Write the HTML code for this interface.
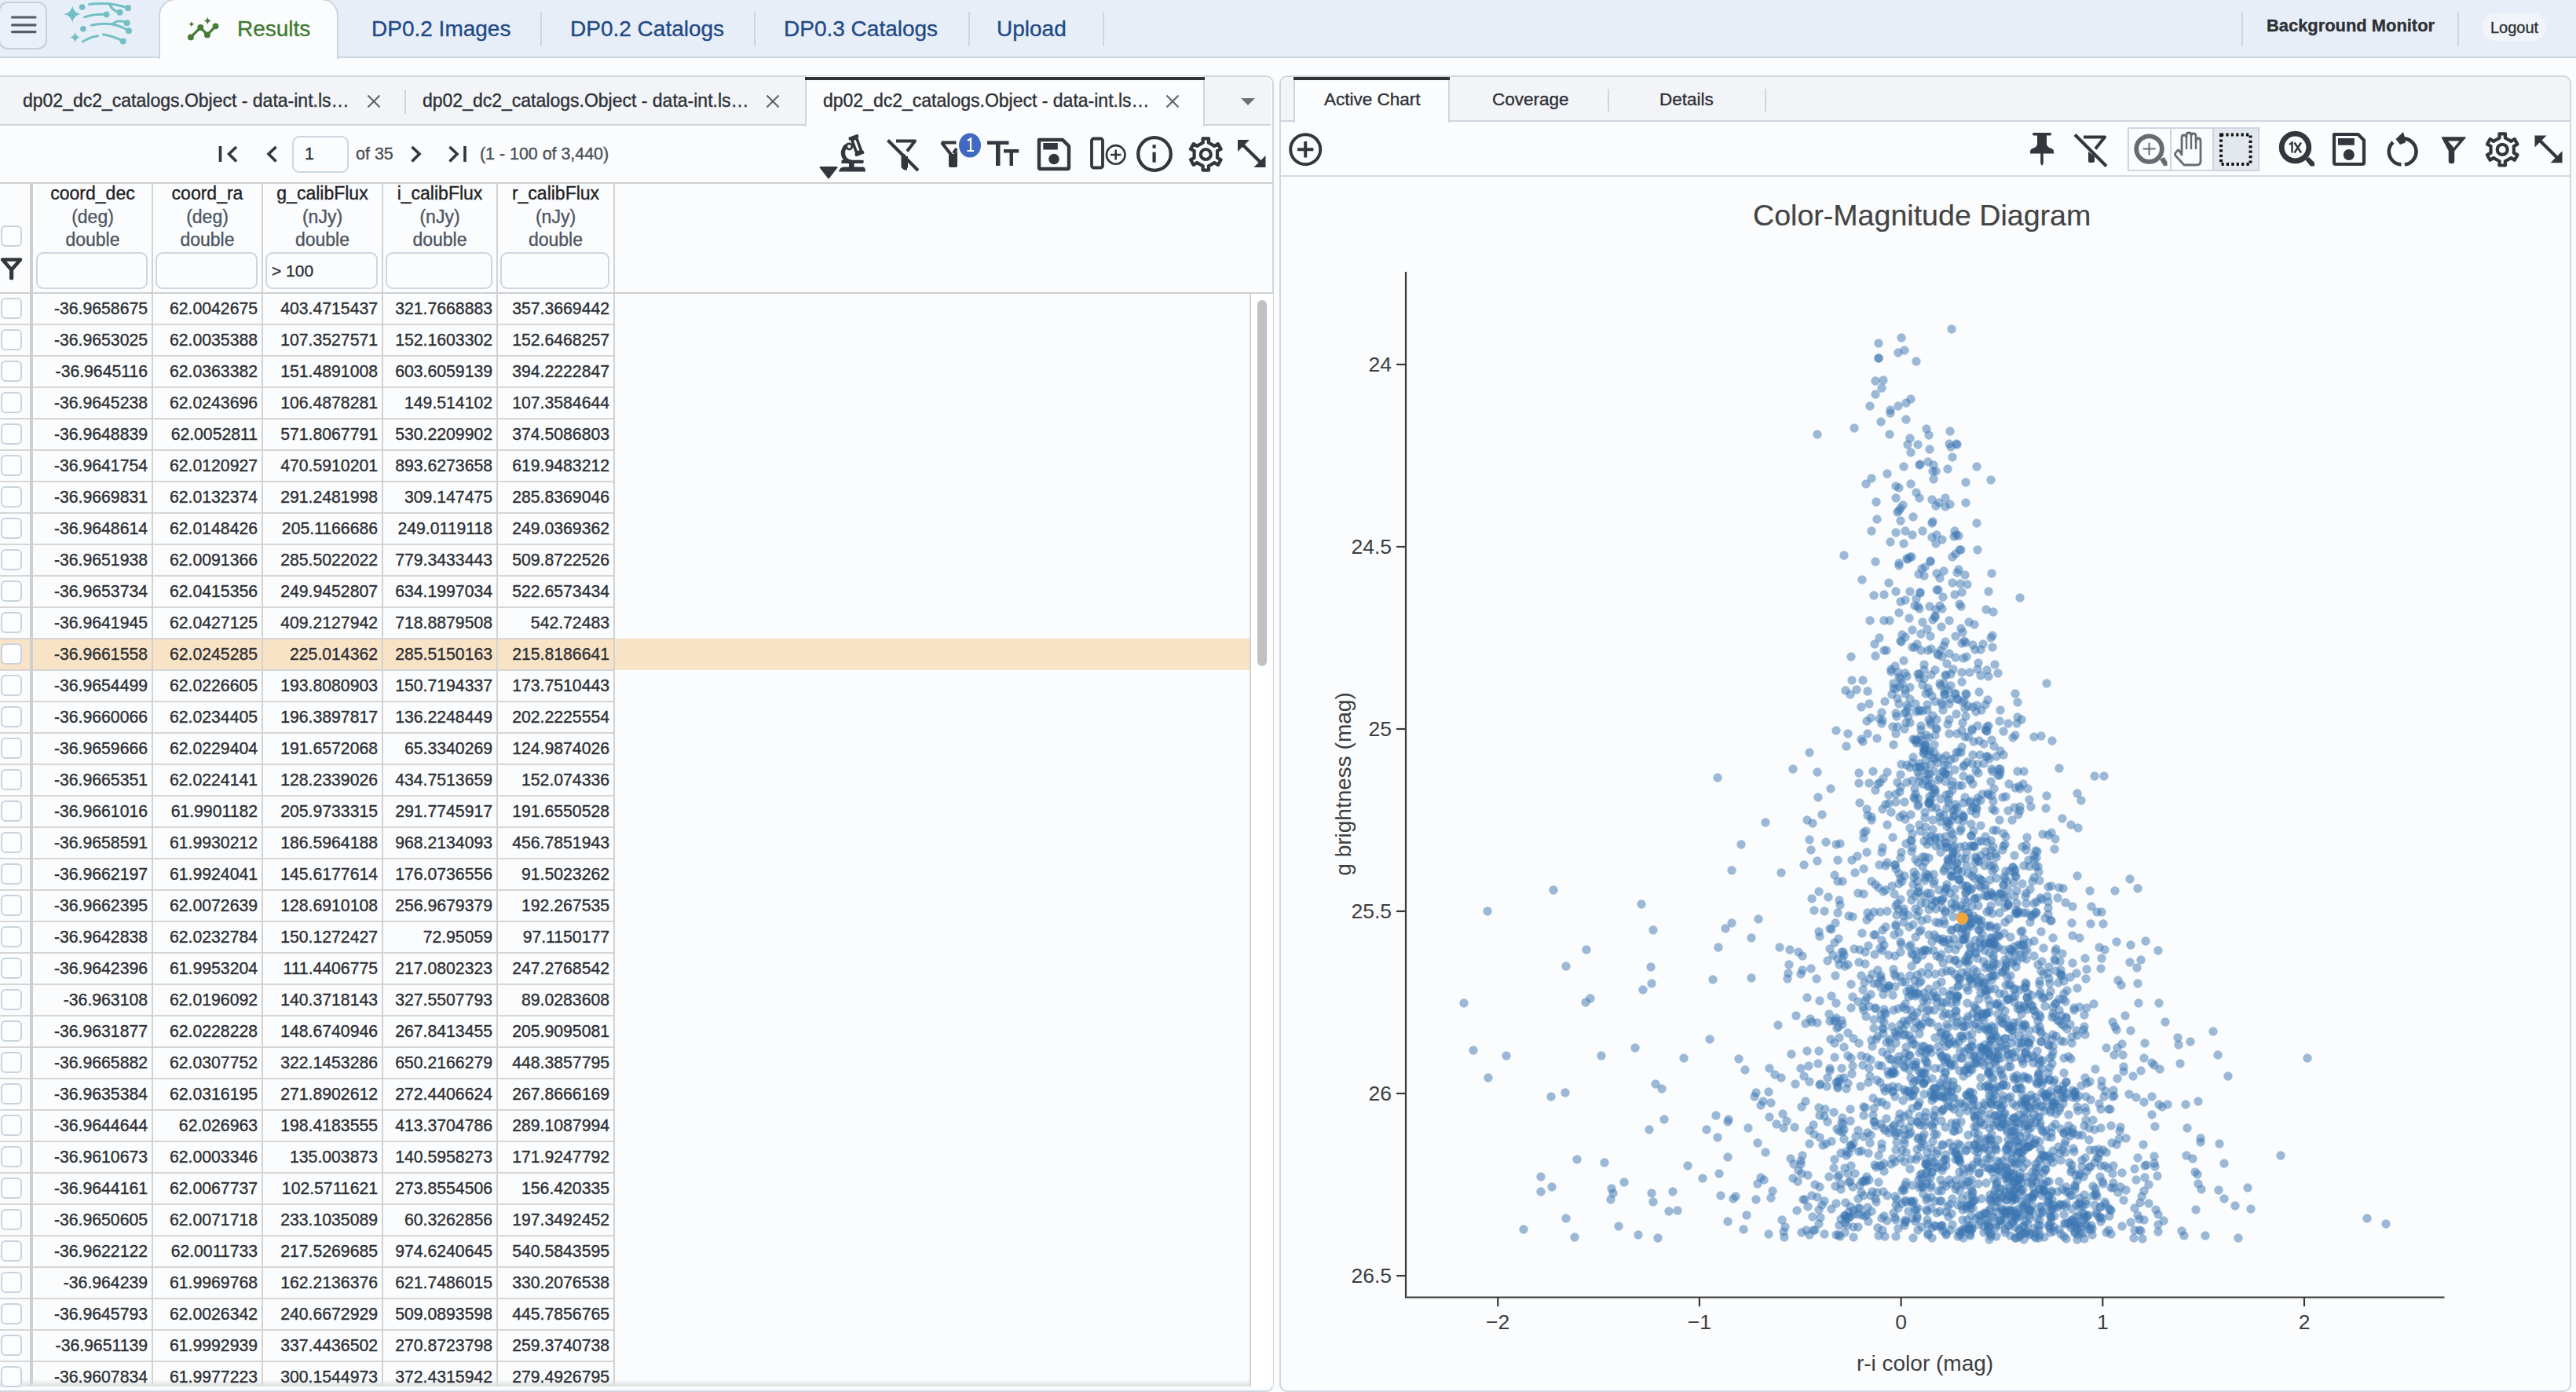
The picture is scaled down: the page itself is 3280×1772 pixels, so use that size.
<!DOCTYPE html><html><head><meta charset="utf-8"><style>
*{box-sizing:border-box;margin:0;padding:0}
html,body{width:3280px;height:1772px;overflow:hidden;background:#fbfcfd;font-family:"Liberation Sans",sans-serif;color:#2d3036}
div{-webkit-text-stroke:0.35px currentColor}
.a{position:absolute}
svg{position:absolute;overflow:visible}
#hdr{left:0;top:0;width:3280px;height:74px;background:#e8eef7;border-bottom:2px solid #cdd5df}
.nav{position:absolute;top:15px;font-size:28px;line-height:44px;color:#1f4a86;white-space:nowrap}
.vsep{position:absolute;width:2px;background:#cdd5df}
.ttab{position:absolute;top:97px;height:63px;font-size:23px;line-height:63px;color:#2d3036;white-space:nowrap}
.cell{position:absolute;height:40px;font-size:21.2px;line-height:40px;text-align:right;white-space:nowrap;color:#2b2e33}
.hl{position:absolute;font-size:23px;line-height:29px;text-align:center;white-space:nowrap}
.cb{position:absolute;width:27px;height:27px;border:2px solid #c9d2de;border-radius:6px;background:#fcfdfe}
.fin{position:absolute;top:321px;height:47px;border:2px solid #cdd6e1;border-radius:9px;background:#fbfcfd}
.tick{font-size:26.5px;fill:#3d3d3d;font-family:"Liberation Sans",sans-serif}
.ttl{font-size:28px;fill:#3d3d3d;font-family:"Liberation Sans",sans-serif}
#pts circle{r:5.7px}
</style></head><body>
<div id="hdr" class="a"></div>
<div class="a" style="left:-2px;top:2px;width:62px;height:61px;border:2px solid #c8cfd9;border-radius:12px;background:#eaf0f8"></div>
<svg style="left:0;top:0" width="80" height="73"><g stroke="#575c66" stroke-width="3.2" stroke-linecap="round"><line x1="15.5" y1="22" x2="45" y2="22"/><line x1="15.5" y1="31.8" x2="45" y2="31.8"/><line x1="15.5" y1="40.6" x2="45" y2="40.6"/></g></svg>
<svg style="left:70px;top:0" width="130" height="70"><g fill="#72c0c5" stroke="none">
<path d="M22.2 7.3 Q23.6 16.5 32.9 17.9 Q23.6 19.3 22.2 29 Q20.8 19.3 11.1 17.9 Q20.8 16.5 22.2 7.3Z"/>
<path d="M25.6 41 Q26.6 46.5 32 47.4 Q26.6 48.3 25.6 54.5 Q24.6 48.3 19 47.4 Q24.6 46.5 25.6 41Z"/>
<circle cx="34.6" cy="9" r="3.8"/><circle cx="35.9" cy="36.7" r="3.8"/>
<circle cx="93" cy="10.2" r="4"/><circle cx="82.6" cy="15.8" r="4"/><circle cx="65.6" cy="18.4" r="3.8"/>
<circle cx="91.6" cy="29.3" r="4"/><circle cx="94" cy="39.3" r="4"/><circle cx="86.7" cy="52.5" r="4"/></g>
<g fill="none" stroke="#72c0c5" stroke-width="3" stroke-linecap="round">
<path d="M43.5 5.6 Q70 2 93 10.2"/><path d="M70 6 Q72 13 82.6 15.8"/>
<path d="M37.4 21.8 Q50 17.5 65.6 18.4"/>
<path d="M46.5 32 Q75 26 94 39.3"/><path d="M74.5 29.5 Q82 24 91.6 29.3"/>
<path d="M35.5 53 Q45 47 54.5 45.8"/><path d="M61.6 44 Q75 46 86.7 52.5"/></g></svg>
<div class="a" style="left:202px;top:-2px;width:229px;height:77px;background:#fbfcfd;border:2px solid #cdd5df;border-bottom:none;border-radius:22px 22px 0 0"></div>
<svg style="left:230px;top:15px" width="60" height="45"><g transform="translate(-230,-15)">
<polyline points="242.9,47.4 255.3,35 263.9,44.4 274.5,33.3" fill="none" stroke="#467b32" stroke-width="3.2" stroke-linejoin="round"/>
<g fill="#467b32"><circle cx="242.9" cy="47.4" r="3.9"/><circle cx="255.3" cy="35" r="3.9"/><circle cx="263.9" cy="44.4" r="3.9"/><circle cx="274.5" cy="33.3" r="3.9"/>
<path d="M264.3 21.5 Q265 25.8 269.2 26.5 Q265 27.2 264.3 31.5 Q263.6 27.2 259.4 26.5 Q263.6 25.8 264.3 21.5Z"/>
<path d="M243.8 27 Q244.3 30.2 247.4 30.7 Q244.3 31.2 243.8 34.5 Q243.3 31.2 240.2 30.7 Q243.3 30.2 243.8 27Z"/></g></g></svg>
<div class="nav" style="left:302px;color:#3f7a30">Results</div>
<div class="nav" style="left:473px">DP0.2 Images</div>
<div class="nav" style="left:726px">DP0.2 Catalogs</div>
<div class="nav" style="left:998px">DP0.3 Catalogs</div>
<div class="nav" style="left:1269px">Upload</div>
<div class="vsep" style="left:688px;top:15px;height:44px"></div>
<div class="vsep" style="left:960px;top:15px;height:44px"></div>
<div class="vsep" style="left:1233px;top:15px;height:44px"></div>
<div class="vsep" style="left:1404px;top:15px;height:44px"></div>
<div class="vsep" style="left:2854px;top:15px;height:44px"></div>
<div class="vsep" style="left:3129px;top:15px;height:44px"></div>
<div class="a" style="left:2886px;top:15px;font-size:21.9px;line-height:36px;font-weight:bold;color:#2d3036;white-space:nowrap">Background Monitor</div>
<div class="a" style="left:3160px;top:17px;width:82px;height:35px;border-radius:18px;background:#f1f4f9"></div>
<div class="a" style="left:3171px;top:17px;font-size:20px;line-height:37px;color:#2d3036;white-space:nowrap">Logout</div>
<div class="a" style="left:-12px;top:96px;width:1634px;height:1676px;border:2px solid #cfd6e0;border-radius:10px;background:#fbfcfd"></div>
<div class="a" style="left:0;top:98px;width:1618px;height:62px;background:#f2f4f8;border-bottom:2px solid #cfd6e0;border-radius:0 9px 0 0"></div>
<div class="a" style="left:1025px;top:97px;width:509px;height:64px;background:#fbfcfd;border-left:2px solid #cfd6e0;border-right:2px solid #cfd6e0"></div>
<div class="a" style="left:1025px;top:98px;width:509px;height:4px;background:#2f3237"></div>
<div class="ttab" style="left:29px">dp02_dc2_catalogs.Object - data-int.ls…</div>
<svg style="left:468px;top:121px" width="16" height="16"><g stroke="#60646b" stroke-width="2.1"><line x1="0.5" y1="0.5" x2="15.5" y2="15.5"/><line x1="15.5" y1="0.5" x2="0.5" y2="15.5"/></g></svg>
<div class="ttab" style="left:538px">dp02_dc2_catalogs.Object - data-int.ls…</div>
<svg style="left:976px;top:121px" width="16" height="16"><g stroke="#60646b" stroke-width="2.1"><line x1="0.5" y1="0.5" x2="15.5" y2="15.5"/><line x1="15.5" y1="0.5" x2="0.5" y2="15.5"/></g></svg>
<div class="ttab" style="left:1048px">dp02_dc2_catalogs.Object - data-int.ls…</div>
<svg style="left:1485px;top:121px" width="16" height="16"><g stroke="#60646b" stroke-width="2.1"><line x1="0.5" y1="0.5" x2="15.5" y2="15.5"/><line x1="15.5" y1="0.5" x2="0.5" y2="15.5"/></g></svg>
<div class="vsep" style="left:515px;top:114px;height:31px"></div>
<svg style="left:1580px;top:125px" width="20" height="10"><path d="M0 0H18L9 9Z" fill="#6b6f77"/></svg>
<svg style="left:270px;top:180px" width="340" height="34"><g transform="translate(-270,-180)" fill="none" stroke="#33363c" stroke-width="3.6" stroke-linecap="butt">
<line x1="280.5" y1="186" x2="280.5" y2="206"/><polyline points="301,187 291.5,196 301,205.5"/>
<polyline points="351.5,187 342,196 351.5,205.5"/>
<polyline points="524.5,187 534,196 524.5,205.5"/>
<polyline points="572.5,187 582,196 572.5,205.5"/><line x1="592" y1="186" x2="592" y2="206"/></g></svg>
<div class="a" style="left:372px;top:173px;width:72px;height:47px;border:2px solid #cdd6e1;border-radius:9px;background:#fbfcfd"></div>
<div class="a" style="left:388px;top:173px;font-size:21.5px;line-height:47px;color:#2d3036">1</div>
<div class="a" style="left:453px;top:173px;font-size:21.5px;line-height:47px;color:#4a4e55;white-space:nowrap">of 35</div>
<div class="a" style="left:611px;top:173px;font-size:21.4px;line-height:47px;color:#4a4e55;white-space:nowrap">(1 - 100 of 3,440)</div>
<svg style="left:1030px;top:165px" width="600" height="65"><g transform="translate(-1030,-165)" fill="#33363c">
<path d="M1044.5 213 H1065.5 L1055 226.5Z" stroke="#33363c" stroke-width="2" stroke-linejoin="round"/>
<path d="M1068 218.5 Q1069 212.5 1075 212.5 H1099 Q1102 213 1102 218.5 Z"/>
<rect x="1081" y="206.5" width="6.6" height="7"/>
<path d="M1071.5 203.8 H1098 Q1101 204 1099 208 H1071.5 Z"/>
<path d="M1080 184.5 A11.3 11.3 0 0 0 1083.5 206" fill="none" stroke="#33363c" stroke-width="5.4"/>
<g transform="rotate(-20 1091 186)"><rect x="1086" y="174" width="10" height="24" rx="1.5"/><rect x="1084.5" y="172" width="13" height="4" rx="1"/><rect x="1085" y="194" width="12" height="4" rx="1"/></g>
<circle cx="1081.3" cy="186.5" r="5"/>
</g>
<g transform="translate(-1030,-165)">
<circle cx="1081.3" cy="186.5" r="2.2" fill="#fbfcfd"/>
<g transform="rotate(-20 1091 186)"><rect x="1089.6" y="178" width="2.8" height="14" fill="#fbfcfd"/></g>
<path d="M1141 179.5 H1165 L1155 192.5 M1151 196.5 V212.5 Q1151 214.5 1153 214.5 H1155" stroke="#33363c" stroke-width="4" fill="none" stroke-linejoin="round"/>
<path d="M1147.5 199 L1156 199 L1156 212 Q1156 214.5 1153.5 214.5 L1149.5 214.5 Q1147.5 214.5 1147.5 212Z" fill="#33363c"/>
<line x1="1130.5" y1="178.5" x2="1169" y2="217" stroke="#33363c" stroke-width="4"/>
<path d="M1198.5 181.5 H1217.5 M1199 181.5 L1211.5 197.5 M1214 195 L1218 189" stroke="#33363c" stroke-width="4" fill="none"/>
<path d="M1208 196 L1215 196 L1219 192 L1219 211 Q1219 213 1217 213 L1210 213 Q1208 213 1208 211Z" fill="#33363c"/>
<ellipse cx="1235" cy="185" rx="14" ry="15.5" fill="#4169c4"/>
<path d="M1232 179 L1236 176.5 V192 M1231.5 192 H1240" stroke="#fff" stroke-width="2.2" fill="none"/>
<path d="M1257 179.5 H1284.5 V184 H1273.5 V211 H1268 V184 H1257Z" fill="#33363c"/>
<path d="M1278 190 H1297.3 V194.5 H1290 V211 H1285.5 V194.5 H1278Z" fill="#33363c"/>
<path d="M1323 178 H1353 L1361 186 V213 Q1361 215 1359 215 H1325 Q1323 215 1323 213Z" fill="none" stroke="#33363c" stroke-width="4.4" stroke-linejoin="round"/>
<rect x="1328.3" y="182" width="18.5" height="8.5" fill="#33363c"/>
<circle cx="1342" cy="202.5" r="6.8" fill="#33363c"/>
<rect x="1390" y="176.5" width="14" height="37" rx="2.5" fill="none" stroke="#33363c" stroke-width="3.8"/>
<circle cx="1420.7" cy="196.9" r="11.8" fill="none" stroke="#33363c" stroke-width="2.6"/>
<path d="M1414 197 H1427.5 M1420.7 190.5 V203.5" stroke="#33363c" stroke-width="2.6"/>
<circle cx="1470" cy="196" r="20.8" fill="none" stroke="#33363c" stroke-width="4.3"/>
<rect x="1467.5" y="184.3" width="4.2" height="4.4" fill="#33363c"/><rect x="1467.5" y="193.7" width="4.2" height="13" fill="#33363c"/>
</g>
<g transform="translate(-1030,-165)">
<path id="gearp" d="" fill="none"/>
</g></svg>
<svg style="left:0;top:0" width="3280" height="240"><path d="M1531.2 181.9 L1531.7 181.7 L1531.5 176.4 L1539.1 176.4 L1538.9 181.7 L1539.4 181.9 L1545.9 185.6 L1546.3 186.0 L1550.9 183.1 L1554.6 189.7 L1549.9 192.2 L1550.0 192.8 L1550.0 200.2 L1549.9 200.8 L1554.6 203.3 L1550.9 209.9 L1546.3 207.0 L1545.9 207.4 L1539.4 211.1 L1538.9 211.3 L1539.1 216.6 L1531.5 216.6 L1531.7 211.3 L1531.2 211.1 L1524.7 207.4 L1524.3 207.0 L1519.7 209.9 L1516.0 203.3 L1520.7 200.8 L1520.6 200.2 L1520.6 192.8 L1520.7 192.2 L1516.0 189.7 L1519.7 183.1 L1524.3 186.0 L1524.7 185.6 Z" fill="none" stroke="#33363c" stroke-width="4.2" stroke-linejoin="round"/><circle cx="1535.3" cy="196.5" r="6.5" fill="none" stroke="#33363c" stroke-width="4.2"/><line x1="1582" y1="184" x2="1605.5" y2="207" stroke="#33363c" stroke-width="4.2"/><path d="M1576 178 H1591 L1576 193Z" fill="#33363c"/><path d="M1611.5 213 H1596.5 L1611.5 198Z" fill="#33363c"/></svg>
<div class="a" style="left:0;top:232px;width:1621px;height:2px;background:#cfcfcf"></div>
<div class="a" style="left:0;top:372px;width:1621px;height:2px;background:#cfcfcf"></div>
<div class="a" style="left:0;top:813px;width:1592px;height:40px;background:#f9e3c7"></div>
<div class="a" style="left:0;top:412px;width:782px;height:2px;background:#d6d6d6"></div>
<div class="a" style="left:0;top:452px;width:782px;height:2px;background:#d6d6d6"></div>
<div class="a" style="left:0;top:492px;width:782px;height:2px;background:#d6d6d6"></div>
<div class="a" style="left:0;top:532px;width:782px;height:2px;background:#d6d6d6"></div>
<div class="a" style="left:0;top:572px;width:782px;height:2px;background:#d6d6d6"></div>
<div class="a" style="left:0;top:612px;width:782px;height:2px;background:#d6d6d6"></div>
<div class="a" style="left:0;top:652px;width:782px;height:2px;background:#d6d6d6"></div>
<div class="a" style="left:0;top:692px;width:782px;height:2px;background:#d6d6d6"></div>
<div class="a" style="left:0;top:732px;width:782px;height:2px;background:#d6d6d6"></div>
<div class="a" style="left:0;top:772px;width:782px;height:2px;background:#d6d6d6"></div>
<div class="a" style="left:0;top:812px;width:782px;height:2px;background:#d6d6d6"></div>
<div class="a" style="left:0;top:852px;width:782px;height:2px;background:#d6d6d6"></div>
<div class="a" style="left:0;top:892px;width:782px;height:2px;background:#d6d6d6"></div>
<div class="a" style="left:0;top:932px;width:782px;height:2px;background:#d6d6d6"></div>
<div class="a" style="left:0;top:972px;width:782px;height:2px;background:#d6d6d6"></div>
<div class="a" style="left:0;top:1012px;width:782px;height:2px;background:#d6d6d6"></div>
<div class="a" style="left:0;top:1052px;width:782px;height:2px;background:#d6d6d6"></div>
<div class="a" style="left:0;top:1092px;width:782px;height:2px;background:#d6d6d6"></div>
<div class="a" style="left:0;top:1132px;width:782px;height:2px;background:#d6d6d6"></div>
<div class="a" style="left:0;top:1172px;width:782px;height:2px;background:#d6d6d6"></div>
<div class="a" style="left:0;top:1212px;width:782px;height:2px;background:#d6d6d6"></div>
<div class="a" style="left:0;top:1252px;width:782px;height:2px;background:#d6d6d6"></div>
<div class="a" style="left:0;top:1292px;width:782px;height:2px;background:#d6d6d6"></div>
<div class="a" style="left:0;top:1332px;width:782px;height:2px;background:#d6d6d6"></div>
<div class="a" style="left:0;top:1372px;width:782px;height:2px;background:#d6d6d6"></div>
<div class="a" style="left:0;top:1412px;width:782px;height:2px;background:#d6d6d6"></div>
<div class="a" style="left:0;top:1452px;width:782px;height:2px;background:#d6d6d6"></div>
<div class="a" style="left:0;top:1492px;width:782px;height:2px;background:#d6d6d6"></div>
<div class="a" style="left:0;top:1532px;width:782px;height:2px;background:#d6d6d6"></div>
<div class="a" style="left:0;top:1572px;width:782px;height:2px;background:#d6d6d6"></div>
<div class="a" style="left:0;top:1612px;width:782px;height:2px;background:#d6d6d6"></div>
<div class="a" style="left:0;top:1652px;width:782px;height:2px;background:#d6d6d6"></div>
<div class="a" style="left:0;top:1692px;width:782px;height:2px;background:#d6d6d6"></div>
<div class="a" style="left:0;top:1732px;width:782px;height:2px;background:#d6d6d6"></div>
<div class="a" style="left:0;top:1772px;width:782px;height:2px;background:#d6d6d6"></div>
<div class="a" style="left:38px;top:233px;width:4px;height:1532px;background:#cfcfcf"></div>
<div class="a" style="left:193px;top:233px;width:2px;height:1532px;background:#d2d2d2"></div>
<div class="a" style="left:333px;top:233px;width:2px;height:1532px;background:#d2d2d2"></div>
<div class="a" style="left:486px;top:233px;width:2px;height:1532px;background:#d2d2d2"></div>
<div class="a" style="left:632px;top:233px;width:2px;height:1532px;background:#d2d2d2"></div>
<div class="a" style="left:781px;top:233px;width:2px;height:1532px;background:#d2d2d2"></div>
<div class="a" style="left:1591px;top:372px;width:2px;height:1393px;background:#d2d2d2"></div>
<div class="a" style="left:1593px;top:374px;width:28px;height:1391px;background:#ffffff"></div>
<div class="a" style="left:1601px;top:382px;width:12px;height:466px;border-radius:6px;background:#c1c1c1"></div>
<div class="a" style="left:0;top:1756px;width:1592px;height:9px;background:linear-gradient(rgba(222,223,226,0),#dcdde0)"></div>
<div class="hl" style="left:42px;top:232px;width:152px;color:#1f2226">coord_dec</div>
<div class="hl" style="left:42px;top:262px;width:152px;color:#4d5560">(deg)</div>
<div class="hl" style="left:42px;top:291px;width:152px;color:#4d5560">double</div>
<div class="fin" style="left:46px;width:142px"></div>
<div class="hl" style="left:194px;top:232px;width:140px;color:#1f2226">coord_ra</div>
<div class="hl" style="left:194px;top:262px;width:140px;color:#4d5560">(deg)</div>
<div class="hl" style="left:194px;top:291px;width:140px;color:#4d5560">double</div>
<div class="fin" style="left:198px;width:130px"></div>
<div class="hl" style="left:334px;top:232px;width:153px;color:#1f2226">g_calibFlux</div>
<div class="hl" style="left:334px;top:262px;width:153px;color:#4d5560">(nJy)</div>
<div class="hl" style="left:334px;top:291px;width:153px;color:#4d5560">double</div>
<div class="fin" style="left:338px;width:143px"></div>
<div class="hl" style="left:487px;top:232px;width:146px;color:#1f2226">i_calibFlux</div>
<div class="hl" style="left:487px;top:262px;width:146px;color:#4d5560">(nJy)</div>
<div class="hl" style="left:487px;top:291px;width:146px;color:#4d5560">double</div>
<div class="fin" style="left:491px;width:136px"></div>
<div class="hl" style="left:633px;top:232px;width:149px;color:#1f2226">r_calibFlux</div>
<div class="hl" style="left:633px;top:262px;width:149px;color:#4d5560">(nJy)</div>
<div class="hl" style="left:633px;top:291px;width:149px;color:#4d5560">double</div>
<div class="fin" style="left:637px;width:139px"></div>
<div class="a" style="left:346px;top:321px;font-size:21px;line-height:47px;color:#2d3036">&gt; 100</div>
<div class="cb" style="left:1px;top:287px"></div>
<svg style="left:0;top:320px" width="40" height="45"><path d="M3.2 10.5 H26 L14.6 23.5Z" fill="none" stroke="#33363c" stroke-width="4.6" stroke-linejoin="round"/><path d="M12 21 H17.2 V34.5 Q17.2 36.3 15.4 36.3 H13.8 Q12 36.3 12 34.5Z" fill="#33363c"/></svg>
<div class="cb" style="left:1px;top:379px"></div>
<div class="cell" style="left:42px;top:373px;width:146px">-36.9658675</div>
<div class="cell" style="left:194px;top:373px;width:134px">62.0042675</div>
<div class="cell" style="left:334px;top:373px;width:147px">403.4715437</div>
<div class="cell" style="left:487px;top:373px;width:140px">321.7668883</div>
<div class="cell" style="left:633px;top:373px;width:143px">357.3669442</div>
<div class="cb" style="left:1px;top:419px"></div>
<div class="cell" style="left:42px;top:413px;width:146px">-36.9653025</div>
<div class="cell" style="left:194px;top:413px;width:134px">62.0035388</div>
<div class="cell" style="left:334px;top:413px;width:147px">107.3527571</div>
<div class="cell" style="left:487px;top:413px;width:140px">152.1603302</div>
<div class="cell" style="left:633px;top:413px;width:143px">152.6468257</div>
<div class="cb" style="left:1px;top:459px"></div>
<div class="cell" style="left:42px;top:453px;width:146px">-36.9645116</div>
<div class="cell" style="left:194px;top:453px;width:134px">62.0363382</div>
<div class="cell" style="left:334px;top:453px;width:147px">151.4891008</div>
<div class="cell" style="left:487px;top:453px;width:140px">603.6059139</div>
<div class="cell" style="left:633px;top:453px;width:143px">394.2222847</div>
<div class="cb" style="left:1px;top:499px"></div>
<div class="cell" style="left:42px;top:493px;width:146px">-36.9645238</div>
<div class="cell" style="left:194px;top:493px;width:134px">62.0243696</div>
<div class="cell" style="left:334px;top:493px;width:147px">106.4878281</div>
<div class="cell" style="left:487px;top:493px;width:140px">149.514102</div>
<div class="cell" style="left:633px;top:493px;width:143px">107.3584644</div>
<div class="cb" style="left:1px;top:539px"></div>
<div class="cell" style="left:42px;top:533px;width:146px">-36.9648839</div>
<div class="cell" style="left:194px;top:533px;width:134px">62.0052811</div>
<div class="cell" style="left:334px;top:533px;width:147px">571.8067791</div>
<div class="cell" style="left:487px;top:533px;width:140px">530.2209902</div>
<div class="cell" style="left:633px;top:533px;width:143px">374.5086803</div>
<div class="cb" style="left:1px;top:579px"></div>
<div class="cell" style="left:42px;top:573px;width:146px">-36.9641754</div>
<div class="cell" style="left:194px;top:573px;width:134px">62.0120927</div>
<div class="cell" style="left:334px;top:573px;width:147px">470.5910201</div>
<div class="cell" style="left:487px;top:573px;width:140px">893.6273658</div>
<div class="cell" style="left:633px;top:573px;width:143px">619.9483212</div>
<div class="cb" style="left:1px;top:619px"></div>
<div class="cell" style="left:42px;top:613px;width:146px">-36.9669831</div>
<div class="cell" style="left:194px;top:613px;width:134px">62.0132374</div>
<div class="cell" style="left:334px;top:613px;width:147px">291.2481998</div>
<div class="cell" style="left:487px;top:613px;width:140px">309.147475</div>
<div class="cell" style="left:633px;top:613px;width:143px">285.8369046</div>
<div class="cb" style="left:1px;top:659px"></div>
<div class="cell" style="left:42px;top:653px;width:146px">-36.9648614</div>
<div class="cell" style="left:194px;top:653px;width:134px">62.0148426</div>
<div class="cell" style="left:334px;top:653px;width:147px">205.1166686</div>
<div class="cell" style="left:487px;top:653px;width:140px">249.0119118</div>
<div class="cell" style="left:633px;top:653px;width:143px">249.0369362</div>
<div class="cb" style="left:1px;top:699px"></div>
<div class="cell" style="left:42px;top:693px;width:146px">-36.9651938</div>
<div class="cell" style="left:194px;top:693px;width:134px">62.0091366</div>
<div class="cell" style="left:334px;top:693px;width:147px">285.5022022</div>
<div class="cell" style="left:487px;top:693px;width:140px">779.3433443</div>
<div class="cell" style="left:633px;top:693px;width:143px">509.8722526</div>
<div class="cb" style="left:1px;top:739px"></div>
<div class="cell" style="left:42px;top:733px;width:146px">-36.9653734</div>
<div class="cell" style="left:194px;top:733px;width:134px">62.0415356</div>
<div class="cell" style="left:334px;top:733px;width:147px">249.9452807</div>
<div class="cell" style="left:487px;top:733px;width:140px">634.1997034</div>
<div class="cell" style="left:633px;top:733px;width:143px">522.6573434</div>
<div class="cb" style="left:1px;top:779px"></div>
<div class="cell" style="left:42px;top:773px;width:146px">-36.9641945</div>
<div class="cell" style="left:194px;top:773px;width:134px">62.0427125</div>
<div class="cell" style="left:334px;top:773px;width:147px">409.2127942</div>
<div class="cell" style="left:487px;top:773px;width:140px">718.8879508</div>
<div class="cell" style="left:633px;top:773px;width:143px">542.72483</div>
<div class="cb" style="left:1px;top:819px"></div>
<div class="cell" style="left:42px;top:813px;width:146px">-36.9661558</div>
<div class="cell" style="left:194px;top:813px;width:134px">62.0245285</div>
<div class="cell" style="left:334px;top:813px;width:147px">225.014362</div>
<div class="cell" style="left:487px;top:813px;width:140px">285.5150163</div>
<div class="cell" style="left:633px;top:813px;width:143px">215.8186641</div>
<div class="cb" style="left:1px;top:859px"></div>
<div class="cell" style="left:42px;top:853px;width:146px">-36.9654499</div>
<div class="cell" style="left:194px;top:853px;width:134px">62.0226605</div>
<div class="cell" style="left:334px;top:853px;width:147px">193.8080903</div>
<div class="cell" style="left:487px;top:853px;width:140px">150.7194337</div>
<div class="cell" style="left:633px;top:853px;width:143px">173.7510443</div>
<div class="cb" style="left:1px;top:899px"></div>
<div class="cell" style="left:42px;top:893px;width:146px">-36.9660066</div>
<div class="cell" style="left:194px;top:893px;width:134px">62.0234405</div>
<div class="cell" style="left:334px;top:893px;width:147px">196.3897817</div>
<div class="cell" style="left:487px;top:893px;width:140px">136.2248449</div>
<div class="cell" style="left:633px;top:893px;width:143px">202.2225554</div>
<div class="cb" style="left:1px;top:939px"></div>
<div class="cell" style="left:42px;top:933px;width:146px">-36.9659666</div>
<div class="cell" style="left:194px;top:933px;width:134px">62.0229404</div>
<div class="cell" style="left:334px;top:933px;width:147px">191.6572068</div>
<div class="cell" style="left:487px;top:933px;width:140px">65.3340269</div>
<div class="cell" style="left:633px;top:933px;width:143px">124.9874026</div>
<div class="cb" style="left:1px;top:979px"></div>
<div class="cell" style="left:42px;top:973px;width:146px">-36.9665351</div>
<div class="cell" style="left:194px;top:973px;width:134px">62.0224141</div>
<div class="cell" style="left:334px;top:973px;width:147px">128.2339026</div>
<div class="cell" style="left:487px;top:973px;width:140px">434.7513659</div>
<div class="cell" style="left:633px;top:973px;width:143px">152.074336</div>
<div class="cb" style="left:1px;top:1019px"></div>
<div class="cell" style="left:42px;top:1013px;width:146px">-36.9661016</div>
<div class="cell" style="left:194px;top:1013px;width:134px">61.9901182</div>
<div class="cell" style="left:334px;top:1013px;width:147px">205.9733315</div>
<div class="cell" style="left:487px;top:1013px;width:140px">291.7745917</div>
<div class="cell" style="left:633px;top:1013px;width:143px">191.6550528</div>
<div class="cb" style="left:1px;top:1059px"></div>
<div class="cell" style="left:42px;top:1053px;width:146px">-36.9658591</div>
<div class="cell" style="left:194px;top:1053px;width:134px">61.9930212</div>
<div class="cell" style="left:334px;top:1053px;width:147px">186.5964188</div>
<div class="cell" style="left:487px;top:1053px;width:140px">968.2134093</div>
<div class="cell" style="left:633px;top:1053px;width:143px">456.7851943</div>
<div class="cb" style="left:1px;top:1099px"></div>
<div class="cell" style="left:42px;top:1093px;width:146px">-36.9662197</div>
<div class="cell" style="left:194px;top:1093px;width:134px">61.9924041</div>
<div class="cell" style="left:334px;top:1093px;width:147px">145.6177614</div>
<div class="cell" style="left:487px;top:1093px;width:140px">176.0736556</div>
<div class="cell" style="left:633px;top:1093px;width:143px">91.5023262</div>
<div class="cb" style="left:1px;top:1139px"></div>
<div class="cell" style="left:42px;top:1133px;width:146px">-36.9662395</div>
<div class="cell" style="left:194px;top:1133px;width:134px">62.0072639</div>
<div class="cell" style="left:334px;top:1133px;width:147px">128.6910108</div>
<div class="cell" style="left:487px;top:1133px;width:140px">256.9679379</div>
<div class="cell" style="left:633px;top:1133px;width:143px">192.267535</div>
<div class="cb" style="left:1px;top:1179px"></div>
<div class="cell" style="left:42px;top:1173px;width:146px">-36.9642838</div>
<div class="cell" style="left:194px;top:1173px;width:134px">62.0232784</div>
<div class="cell" style="left:334px;top:1173px;width:147px">150.1272427</div>
<div class="cell" style="left:487px;top:1173px;width:140px">72.95059</div>
<div class="cell" style="left:633px;top:1173px;width:143px">97.1150177</div>
<div class="cb" style="left:1px;top:1219px"></div>
<div class="cell" style="left:42px;top:1213px;width:146px">-36.9642396</div>
<div class="cell" style="left:194px;top:1213px;width:134px">61.9953204</div>
<div class="cell" style="left:334px;top:1213px;width:147px">111.4406775</div>
<div class="cell" style="left:487px;top:1213px;width:140px">217.0802323</div>
<div class="cell" style="left:633px;top:1213px;width:143px">247.2768542</div>
<div class="cb" style="left:1px;top:1259px"></div>
<div class="cell" style="left:42px;top:1253px;width:146px">-36.963108</div>
<div class="cell" style="left:194px;top:1253px;width:134px">62.0196092</div>
<div class="cell" style="left:334px;top:1253px;width:147px">140.3718143</div>
<div class="cell" style="left:487px;top:1253px;width:140px">327.5507793</div>
<div class="cell" style="left:633px;top:1253px;width:143px">89.0283608</div>
<div class="cb" style="left:1px;top:1299px"></div>
<div class="cell" style="left:42px;top:1293px;width:146px">-36.9631877</div>
<div class="cell" style="left:194px;top:1293px;width:134px">62.0228228</div>
<div class="cell" style="left:334px;top:1293px;width:147px">148.6740946</div>
<div class="cell" style="left:487px;top:1293px;width:140px">267.8413455</div>
<div class="cell" style="left:633px;top:1293px;width:143px">205.9095081</div>
<div class="cb" style="left:1px;top:1339px"></div>
<div class="cell" style="left:42px;top:1333px;width:146px">-36.9665882</div>
<div class="cell" style="left:194px;top:1333px;width:134px">62.0307752</div>
<div class="cell" style="left:334px;top:1333px;width:147px">322.1453286</div>
<div class="cell" style="left:487px;top:1333px;width:140px">650.2166279</div>
<div class="cell" style="left:633px;top:1333px;width:143px">448.3857795</div>
<div class="cb" style="left:1px;top:1379px"></div>
<div class="cell" style="left:42px;top:1373px;width:146px">-36.9635384</div>
<div class="cell" style="left:194px;top:1373px;width:134px">62.0316195</div>
<div class="cell" style="left:334px;top:1373px;width:147px">271.8902612</div>
<div class="cell" style="left:487px;top:1373px;width:140px">272.4406624</div>
<div class="cell" style="left:633px;top:1373px;width:143px">267.8666169</div>
<div class="cb" style="left:1px;top:1419px"></div>
<div class="cell" style="left:42px;top:1413px;width:146px">-36.9644644</div>
<div class="cell" style="left:194px;top:1413px;width:134px">62.026963</div>
<div class="cell" style="left:334px;top:1413px;width:147px">198.4183555</div>
<div class="cell" style="left:487px;top:1413px;width:140px">413.3704786</div>
<div class="cell" style="left:633px;top:1413px;width:143px">289.1087994</div>
<div class="cb" style="left:1px;top:1459px"></div>
<div class="cell" style="left:42px;top:1453px;width:146px">-36.9610673</div>
<div class="cell" style="left:194px;top:1453px;width:134px">62.0003346</div>
<div class="cell" style="left:334px;top:1453px;width:147px">135.003873</div>
<div class="cell" style="left:487px;top:1453px;width:140px">140.5958273</div>
<div class="cell" style="left:633px;top:1453px;width:143px">171.9247792</div>
<div class="cb" style="left:1px;top:1499px"></div>
<div class="cell" style="left:42px;top:1493px;width:146px">-36.9644161</div>
<div class="cell" style="left:194px;top:1493px;width:134px">62.0067737</div>
<div class="cell" style="left:334px;top:1493px;width:147px">102.5711621</div>
<div class="cell" style="left:487px;top:1493px;width:140px">273.8554506</div>
<div class="cell" style="left:633px;top:1493px;width:143px">156.420335</div>
<div class="cb" style="left:1px;top:1539px"></div>
<div class="cell" style="left:42px;top:1533px;width:146px">-36.9650605</div>
<div class="cell" style="left:194px;top:1533px;width:134px">62.0071718</div>
<div class="cell" style="left:334px;top:1533px;width:147px">233.1035089</div>
<div class="cell" style="left:487px;top:1533px;width:140px">60.3262856</div>
<div class="cell" style="left:633px;top:1533px;width:143px">197.3492452</div>
<div class="cb" style="left:1px;top:1579px"></div>
<div class="cell" style="left:42px;top:1573px;width:146px">-36.9622122</div>
<div class="cell" style="left:194px;top:1573px;width:134px">62.0011733</div>
<div class="cell" style="left:334px;top:1573px;width:147px">217.5269685</div>
<div class="cell" style="left:487px;top:1573px;width:140px">974.6240645</div>
<div class="cell" style="left:633px;top:1573px;width:143px">540.5843595</div>
<div class="cb" style="left:1px;top:1619px"></div>
<div class="cell" style="left:42px;top:1613px;width:146px">-36.964239</div>
<div class="cell" style="left:194px;top:1613px;width:134px">61.9969768</div>
<div class="cell" style="left:334px;top:1613px;width:147px">162.2136376</div>
<div class="cell" style="left:487px;top:1613px;width:140px">621.7486015</div>
<div class="cell" style="left:633px;top:1613px;width:143px">330.2076538</div>
<div class="cb" style="left:1px;top:1659px"></div>
<div class="cell" style="left:42px;top:1653px;width:146px">-36.9645793</div>
<div class="cell" style="left:194px;top:1653px;width:134px">62.0026342</div>
<div class="cell" style="left:334px;top:1653px;width:147px">240.6672929</div>
<div class="cell" style="left:487px;top:1653px;width:140px">509.0893598</div>
<div class="cell" style="left:633px;top:1653px;width:143px">445.7856765</div>
<div class="cb" style="left:1px;top:1699px"></div>
<div class="cell" style="left:42px;top:1693px;width:146px">-36.9651139</div>
<div class="cell" style="left:194px;top:1693px;width:134px">61.9992939</div>
<div class="cell" style="left:334px;top:1693px;width:147px">337.4436502</div>
<div class="cell" style="left:487px;top:1693px;width:140px">270.8723798</div>
<div class="cell" style="left:633px;top:1693px;width:143px">259.3740738</div>
<div class="cb" style="left:1px;top:1739px"></div>
<div class="cell" style="left:42px;top:1733px;width:146px">-36.9607834</div>
<div class="cell" style="left:194px;top:1733px;width:134px">61.9977223</div>
<div class="cell" style="left:334px;top:1733px;width:147px">300.1544973</div>
<div class="cell" style="left:487px;top:1733px;width:140px">372.4315942</div>
<div class="cell" style="left:633px;top:1733px;width:143px">279.4926795</div>
<div class="a" style="left:1629px;top:96px;width:1645px;height:1676px;border:2px solid #cfd6e0;border-radius:10px;background:#fbfcfd"></div>
<div class="a" style="left:1631px;top:98px;width:1641px;height:57px;background:#f2f4f8;border-bottom:2px solid #cfd6e0;border-radius:9px 9px 0 0"></div>
<div class="a" style="left:1647px;top:98px;width:199px;height:58px;background:#fbfcfd;border-left:2px solid #cfd6e0;border-right:2px solid #cfd6e0"></div>
<div class="a" style="left:1647px;top:98px;width:199px;height:4px;background:#2f3237"></div>
<div class="a" style="left:1686px;top:98px;font-size:22.5px;line-height:57px;color:#2d3036;white-space:nowrap">Active Chart</div>
<div class="a" style="left:1900px;top:98px;font-size:22.5px;line-height:57px;color:#2d3036;white-space:nowrap">Coverage</div>
<div class="a" style="left:2113px;top:98px;font-size:22.5px;line-height:57px;color:#2d3036;white-space:nowrap">Details</div>
<div class="vsep" style="left:2047px;top:113px;height:29px"></div>
<div class="vsep" style="left:2247px;top:113px;height:29px"></div>
<div class="a" style="left:1631px;top:223px;width:1641px;height:2px;background:#d5dbe3"></div>
<div class="a" style="left:2709px;top:162px;width:168px;height:56px;border:2px solid #cdd5df;background:#fbfcfd"></div>
<div class="a" style="left:2818px;top:164px;width:57px;height:52px;background:#e3e8ef"></div>
<div class="a" style="left:2763px;top:164px;width:2px;height:52px;background:#cdd5df"></div>
<div class="a" style="left:2817px;top:164px;width:2px;height:52px;background:#cdd5df"></div>
<svg style="left:0;top:0" width="3280" height="240">
<circle cx="1662.2" cy="190.2" r="19" fill="none" stroke="#33363c" stroke-width="4"/>
<path d="M1652 190.2 H1672.4 M1662.2 180 V200.4" stroke="#33363c" stroke-width="4"/>
<path d="M2589 169 H2611 Q2613 170.5 2611 172.5 H2606 V183 Q2606 187 2612 189 Q2615 190 2615 193 V195.5 H2601.8 V208 L2600 211 L2598.2 208 V195.5 H2585 V193 Q2585 190 2588 189 Q2594 187 2594 183 V172.5 H2589 Q2587 170.5 2589 169Z" fill="#33363c"/>
<path d="M2653 174.5 H2680 L2668 189.5" stroke="#33363c" stroke-width="4" fill="none" stroke-linejoin="round"/>
<path d="M2659 193 L2667 199 V205 Q2667 207 2665 207 H2661 Q2659 207 2659 205Z" fill="#33363c"/>
<line x1="2642" y1="171.5" x2="2682" y2="211.5" stroke="#33363c" stroke-width="4"/>
<circle cx="2736.5" cy="189.6" r="16.3" fill="none" stroke="#666a71" stroke-width="5.8"/>
<path d="M2728.5 189.6 H2744.5 M2736.5 181.6 V197.6" stroke="#666a71" stroke-width="2"/>
<path d="M2750 203 L2755.5 200 L2759.5 206 V211 H2755Z" fill="#666a71"/>
<path d="M2772 192.5 Q2768 196 2770 198 L2781 210 H2797 Q2802 210 2802 205 V180 Q2802 176 2799 176 Q2796 176 2796 180 V173 Q2796 170 2793 170 Q2790 170 2790 173 V172 Q2790 169 2787 169 Q2784 169 2784 172 V175 Q2784 172 2781 172 Q2778 172 2778 175 V197 L2775 192 Q2774 190 2772 192.5Z" fill="none" stroke="#666a71" stroke-width="2.8" stroke-linejoin="round"/>
<path d="M2790 173 V190 M2784 174 V190 M2796 178 V190" stroke="#666a71" stroke-width="2.4"/>
<rect x="2828" y="171.5" width="37.5" height="37.5" fill="none" stroke="#111" stroke-width="4" stroke-dasharray="3.2 3.2"/>
<circle cx="2922.5" cy="187.5" r="17.3" fill="none" stroke="#33363c" stroke-width="6.8"/>
<path d="M2935 203 L2940 200 L2947 207 V211.5 H2942Z" fill="#33363c"/>
<path d="M2915 184 L2918.5 181.5 V194.5 M2921.5 181.5 L2930 194.5 M2930 181.5 L2921.5 194.5" stroke="#33363c" stroke-width="2.4" fill="none"/>
<path d="M2972 171 H3002.5 L3010 178.5 V207 Q3010 209 3008 209 H2974 Q2972 209 2972 207Z" fill="none" stroke="#33363c" stroke-width="4.2" stroke-linejoin="round"/>
<rect x="2977" y="176" width="20.8" height="8.8" fill="#33363c"/>
<circle cx="2990.8" cy="197" r="7" fill="#33363c"/>
<path d="M3047 181 A16.5 16.5 0 0 0 3057.5 209.5 M3061.8 209.5 A16.5 16.5 0 0 0 3058 176.5" fill="none" stroke="#33363c" stroke-width="4.6"/>
<path d="M3050.5 177 L3060 168 L3061.5 173 L3063 181.5 L3056 184Z" fill="#33363c"/>
<path d="M3109.5 175 H3139 L3124.5 192 V205 Q3124.5 207.5 3122 207.5 H3121 Q3118.5 207.5 3118.5 205 V192Z" fill="#33363c" stroke="#33363c" stroke-width="1.5" stroke-linejoin="round"/>
<path d="M3117 179.5 H3131.5 L3124.5 188Z" fill="#fbfcfd"/>
<path d="M3182.1 175.8 L3182.6 175.6 L3182.4 170.3 L3190.0 170.3 L3189.8 175.6 L3190.3 175.8 L3196.8 179.5 L3197.2 179.9 L3201.8 177.0 L3205.5 183.6 L3200.8 186.1 L3200.9 186.7 L3200.9 194.1 L3200.8 194.7 L3205.5 197.2 L3201.8 203.8 L3197.2 200.9 L3196.8 201.3 L3190.3 205.0 L3189.8 205.2 L3190.0 210.5 L3182.4 210.5 L3182.6 205.2 L3182.1 205.0 L3175.6 201.3 L3175.2 200.9 L3170.6 203.8 L3166.9 197.2 L3171.6 194.7 L3171.5 194.1 L3171.5 186.7 L3171.6 186.1 L3166.9 183.6 L3170.6 177.0 L3175.2 179.9 L3175.6 179.5 Z" fill="none" stroke="#33363c" stroke-width="4.2" stroke-linejoin="round"/><circle cx="3186.2" cy="190.4" r="6.5" fill="none" stroke="#33363c" stroke-width="4.2"/><line x1="3233.5" y1="178.5" x2="3256.5" y2="201.2" stroke="#33363c" stroke-width="4.2"/><path d="M3227.5 172.5 H3242.5 L3227.5 187.5Z" fill="#33363c"/><path d="M3262.5 207.2 H3247.5 L3262.5 192.2Z" fill="#33363c"/></svg>
<div class="a" style="left:2232px;top:249px;font-size:37.6px;line-height:50px;color:#444;white-space:nowrap;-webkit-text-stroke:0.2px #444">Color-Magnitude Diagram</div>
<svg style="left:0;top:0" width="3280" height="1772"><g id="pts" fill="#3c76b2" fill-opacity="0.5"><circle cx="2485" cy="419" r="5.7"/><circle cx="2392" cy="437" r="5.7"/><circle cx="2421" cy="430" r="5.7"/><circle cx="2425" cy="446" r="5.7"/><circle cx="2417" cy="449" r="5.7"/><circle cx="2392" cy="456" r="5.7"/><circle cx="2392" cy="456" r="5.7"/><circle cx="2440" cy="460" r="5.7"/><circle cx="2388" cy="485" r="5.7"/><circle cx="2398" cy="484" r="5.7"/><circle cx="2396" cy="494" r="5.7"/><circle cx="2388" cy="502" r="5.7"/><circle cx="2381" cy="517" r="5.7"/><circle cx="2433" cy="508" r="5.7"/><circle cx="2427" cy="513" r="5.7"/><circle cx="2417" cy="517" r="5.7"/><circle cx="2407" cy="522" r="5.7"/><circle cx="2407" cy="526" r="5.7"/><circle cx="2395" cy="537" r="5.7"/><circle cx="2427" cy="534" r="5.7"/><circle cx="2361" cy="545" r="5.7"/><circle cx="2314" cy="553" r="5.7"/><circle cx="2406" cy="553" r="5.7"/><circle cx="2432" cy="558" r="5.7"/><circle cx="2453" cy="546" r="5.7"/><circle cx="2456" cy="554" r="5.7"/><circle cx="2483" cy="549" r="5.7"/><circle cx="2429" cy="566" r="5.7"/><circle cx="2442" cy="566" r="5.7"/><circle cx="2433" cy="576" r="5.7"/><circle cx="2457" cy="572" r="5.7"/><circle cx="2482" cy="565" r="5.7"/><circle cx="2484" cy="569" r="5.7"/><circle cx="2491" cy="565" r="5.7"/><circle cx="2492" cy="566" r="5.7"/><circle cx="2486" cy="582" r="5.7"/><circle cx="2424" cy="594" r="5.7"/><circle cx="2445" cy="591" r="5.7"/><circle cx="2444" cy="592" r="5.7"/><circle cx="2455" cy="588" r="5.7"/><circle cx="2462" cy="592" r="5.7"/><circle cx="2461" cy="600" r="5.7"/><circle cx="2465" cy="600" r="5.7"/><circle cx="2462" cy="610" r="5.7"/><circle cx="2480" cy="597" r="5.7"/><circle cx="2517" cy="594" r="5.7"/><circle cx="2403" cy="603" r="5.7"/><circle cx="2383" cy="609" r="5.7"/><circle cx="2376" cy="616" r="5.7"/><circle cx="2414" cy="619" r="5.7"/><circle cx="2418" cy="621" r="5.7"/><circle cx="2433" cy="616" r="5.7"/><circle cx="2503" cy="614" r="5.7"/><circle cx="2535" cy="611" r="5.7"/><circle cx="2440" cy="627" r="5.7"/><circle cx="2444" cy="634" r="5.7"/><circle cx="2414" cy="634" r="5.7"/><circle cx="2389" cy="639" r="5.7"/><circle cx="2460" cy="636" r="5.7"/><circle cx="2477" cy="634" r="5.7"/><circle cx="2469" cy="640" r="5.7"/><circle cx="2465" cy="644" r="5.7"/><circle cx="2477" cy="645" r="5.7"/><circle cx="2483" cy="642" r="5.7"/><circle cx="2503" cy="640" r="5.7"/><circle cx="2423" cy="643" r="5.7"/><circle cx="2420" cy="647" r="5.7"/><circle cx="2418" cy="650" r="5.7"/><circle cx="2416" cy="652" r="5.7"/><circle cx="2436" cy="658" r="5.7"/><circle cx="2390" cy="661" r="5.7"/><circle cx="2420" cy="663" r="5.7"/><circle cx="2461" cy="664" r="5.7"/><circle cx="2460" cy="666" r="5.7"/><circle cx="2517" cy="666" r="5.7"/><circle cx="2383" cy="676" r="5.7"/><circle cx="2414" cy="678" r="5.7"/><circle cx="2426" cy="676" r="5.7"/><circle cx="2435" cy="681" r="5.7"/><circle cx="2448" cy="676" r="5.7"/><circle cx="2466" cy="681" r="5.7"/><circle cx="2460" cy="684" r="5.7"/><circle cx="2473" cy="687" r="5.7"/><circle cx="2465" cy="692" r="5.7"/><circle cx="2489" cy="676" r="5.7"/><circle cx="2491" cy="681" r="5.7"/><circle cx="2488" cy="683" r="5.7"/><circle cx="2494" cy="682" r="5.7"/><circle cx="2407" cy="690" r="5.7"/><circle cx="2424" cy="692" r="5.7"/><circle cx="2495" cy="700" r="5.7"/><circle cx="2518" cy="700" r="5.7"/><circle cx="1978" cy="1133" r="5.7"/><circle cx="1894" cy="1160" r="5.7"/><circle cx="2090" cy="1151" r="5.7"/><circle cx="2105" cy="1184" r="5.7"/><circle cx="2020" cy="1209" r="5.7"/><circle cx="1994" cy="1230" r="5.7"/><circle cx="2102" cy="1231" r="5.7"/><circle cx="2103" cy="1252" r="5.7"/><circle cx="2092" cy="1260" r="5.7"/><circle cx="1864" cy="1277" r="5.7"/><circle cx="2025" cy="1271" r="5.7"/><circle cx="2019" cy="1276" r="5.7"/><circle cx="1876" cy="1337" r="5.7"/><circle cx="1918" cy="1344" r="5.7"/><circle cx="2039" cy="1344" r="5.7"/><circle cx="2082" cy="1334" r="5.7"/><circle cx="2144" cy="1347" r="5.7"/><circle cx="1895" cy="1372" r="5.7"/><circle cx="2108" cy="1380" r="5.7"/><circle cx="2116" cy="1386" r="5.7"/><circle cx="1975" cy="1396" r="5.7"/><circle cx="1993" cy="1391" r="5.7"/><circle cx="2119" cy="1425" r="5.7"/><circle cx="2100" cy="1438" r="5.7"/><circle cx="2008" cy="1476" r="5.7"/><circle cx="2043" cy="1480" r="5.7"/><circle cx="2149" cy="1484" r="5.7"/><circle cx="1962" cy="1498" r="5.7"/><circle cx="1976" cy="1511" r="5.7"/><circle cx="1962" cy="1517" r="5.7"/><circle cx="2068" cy="1505" r="5.7"/><circle cx="2052" cy="1513" r="5.7"/><circle cx="2054" cy="1519" r="5.7"/><circle cx="2051" cy="1527" r="5.7"/><circle cx="2103" cy="1519" r="5.7"/><circle cx="2105" cy="1530" r="5.7"/><circle cx="2130" cy="1517" r="5.7"/><circle cx="2125" cy="1542" r="5.7"/><circle cx="2136" cy="1541" r="5.7"/><circle cx="1994" cy="1551" r="5.7"/><circle cx="1940" cy="1565" r="5.7"/><circle cx="2005" cy="1575" r="5.7"/><circle cx="2061" cy="1561" r="5.7"/><circle cx="2086" cy="1572" r="5.7"/><circle cx="2111" cy="1576" r="5.7"/><circle cx="2773" cy="1321" r="5.7"/><circle cx="2774" cy="1330" r="5.7"/><circle cx="2789" cy="1326" r="5.7"/><circle cx="2818" cy="1313" r="5.7"/><circle cx="2824" cy="1343" r="5.7"/><circle cx="2776" cy="1354" r="5.7"/><circle cx="2837" cy="1370" r="5.7"/><circle cx="2938" cy="1347" r="5.7"/><circle cx="2783" cy="1406" r="5.7"/><circle cx="2799" cy="1402" r="5.7"/><circle cx="2760" cy="1406" r="5.7"/><circle cx="2785" cy="1436" r="5.7"/><circle cx="2802" cy="1449" r="5.7"/><circle cx="2802" cy="1454" r="5.7"/><circle cx="2826" cy="1456" r="5.7"/><circle cx="2784" cy="1471" r="5.7"/><circle cx="2792" cy="1475" r="5.7"/><circle cx="2832" cy="1481" r="5.7"/><circle cx="2904" cy="1471" r="5.7"/><circle cx="2795" cy="1492" r="5.7"/><circle cx="2798" cy="1495" r="5.7"/><circle cx="2799" cy="1507" r="5.7"/><circle cx="2803" cy="1514" r="5.7"/><circle cx="2825" cy="1515" r="5.7"/><circle cx="2862" cy="1512" r="5.7"/><circle cx="2832" cy="1526" r="5.7"/><circle cx="2846" cy="1535" r="5.7"/><circle cx="2866" cy="1539" r="5.7"/><circle cx="2796" cy="1540" r="5.7"/><circle cx="3014" cy="1551" r="5.7"/><circle cx="3038" cy="1558" r="5.7"/><circle cx="2778" cy="1567" r="5.7"/><circle cx="2781" cy="1573" r="5.7"/><circle cx="2808" cy="1573" r="5.7"/><circle cx="2850" cy="1576" r="5.7"/><circle cx="2598" cy="1463" r="5.7"/><circle cx="2450" cy="1332" r="5.7"/><circle cx="2540" cy="1516" r="5.7"/><circle cx="2385" cy="982" r="5.7"/><circle cx="2309" cy="1566" r="5.7"/><circle cx="2463" cy="1286" r="5.7"/><circle cx="2359" cy="1167" r="5.7"/><circle cx="2465" cy="1174" r="5.7"/><circle cx="2524" cy="1121" r="5.7"/><circle cx="2558" cy="1501" r="5.7"/><circle cx="2468" cy="834" r="5.7"/><circle cx="2414" cy="1317" r="5.7"/><circle cx="2453" cy="1507" r="5.7"/><circle cx="2408" cy="1335" r="5.7"/><circle cx="2438" cy="771" r="5.7"/><circle cx="2356" cy="1536" r="5.7"/><circle cx="2566" cy="1339" r="5.7"/><circle cx="2293" cy="1478" r="5.7"/><circle cx="2424" cy="1300" r="5.7"/><circle cx="2688" cy="1433" r="5.7"/><circle cx="2542" cy="1057" r="5.7"/><circle cx="2487" cy="1398" r="5.7"/><circle cx="2400" cy="1439" r="5.7"/><circle cx="2435" cy="1079" r="5.7"/><circle cx="2486" cy="1526" r="5.7"/><circle cx="2612" cy="1172" r="5.7"/><circle cx="2463" cy="948" r="5.7"/><circle cx="2503" cy="1362" r="5.7"/><circle cx="2558" cy="1561" r="5.7"/><circle cx="2584" cy="1547" r="5.7"/><circle cx="2510" cy="1548" r="5.7"/><circle cx="2584" cy="1018" r="5.7"/><circle cx="2452" cy="1494" r="5.7"/><circle cx="2427" cy="1074" r="5.7"/><circle cx="2587" cy="1542" r="5.7"/><circle cx="2675" cy="1436" r="5.7"/><circle cx="2522" cy="1429" r="5.7"/><circle cx="2443" cy="1130" r="5.7"/><circle cx="2474" cy="1412" r="5.7"/><circle cx="2575" cy="1466" r="5.7"/><circle cx="2440" cy="1211" r="5.7"/><circle cx="2685" cy="1538" r="5.7"/><circle cx="2466" cy="1444" r="5.7"/><circle cx="2631" cy="1377" r="5.7"/><circle cx="2630" cy="1275" r="5.7"/><circle cx="2522" cy="1460" r="5.7"/><circle cx="2441" cy="1122" r="5.7"/><circle cx="2478" cy="1396" r="5.7"/><circle cx="2498" cy="1535" r="5.7"/><circle cx="2609" cy="1528" r="5.7"/><circle cx="2487" cy="1086" r="5.7"/><circle cx="2447" cy="1211" r="5.7"/><circle cx="2540" cy="1352" r="5.7"/><circle cx="2499" cy="1540" r="5.7"/><circle cx="2581" cy="1460" r="5.7"/><circle cx="2642" cy="1511" r="5.7"/><circle cx="2445" cy="1373" r="5.7"/><circle cx="2435" cy="994" r="5.7"/><circle cx="2543" cy="1543" r="5.7"/><circle cx="2535" cy="1470" r="5.7"/><circle cx="2512" cy="1077" r="5.7"/><circle cx="2234" cy="1396" r="5.7"/><circle cx="2376" cy="1058" r="5.7"/><circle cx="2464" cy="1009" r="5.7"/><circle cx="2511" cy="1154" r="5.7"/><circle cx="2488" cy="1356" r="5.7"/><circle cx="2447" cy="1494" r="5.7"/><circle cx="2443" cy="1448" r="5.7"/><circle cx="2529" cy="1545" r="5.7"/><circle cx="2494" cy="957" r="5.7"/><circle cx="2381" cy="1370" r="5.7"/><circle cx="2475" cy="1109" r="5.7"/><circle cx="2518" cy="1420" r="5.7"/><circle cx="2582" cy="1433" r="5.7"/><circle cx="2444" cy="1316" r="5.7"/><circle cx="2433" cy="1529" r="5.7"/><circle cx="2616" cy="1081" r="5.7"/><circle cx="2430" cy="901" r="5.7"/><circle cx="2534" cy="1280" r="5.7"/><circle cx="2548" cy="1554" r="5.7"/><circle cx="2431" cy="1343" r="5.7"/><circle cx="2484" cy="1058" r="5.7"/><circle cx="2594" cy="1084" r="5.7"/><circle cx="2555" cy="1226" r="5.7"/><circle cx="2472" cy="1396" r="5.7"/><circle cx="2565" cy="1276" r="5.7"/><circle cx="2536" cy="730" r="5.7"/><circle cx="2557" cy="1398" r="5.7"/><circle cx="2564" cy="1302" r="5.7"/><circle cx="2590" cy="1456" r="5.7"/><circle cx="2442" cy="1265" r="5.7"/><circle cx="2290" cy="1212" r="5.7"/><circle cx="2556" cy="1463" r="5.7"/><circle cx="2495" cy="1492" r="5.7"/><circle cx="2590" cy="1198" r="5.7"/><circle cx="2725" cy="1531" r="5.7"/><circle cx="2486" cy="742" r="5.7"/><circle cx="2334" cy="1216" r="5.7"/><circle cx="2560" cy="1242" r="5.7"/><circle cx="2627" cy="1131" r="5.7"/><circle cx="2578" cy="1403" r="5.7"/><circle cx="2464" cy="1360" r="5.7"/><circle cx="2503" cy="1128" r="5.7"/><circle cx="2442" cy="1265" r="5.7"/><circle cx="2498" cy="930" r="5.7"/><circle cx="2674" cy="1468" r="5.7"/><circle cx="2434" cy="709" r="5.7"/><circle cx="2463" cy="1385" r="5.7"/><circle cx="2396" cy="1551" r="5.7"/><circle cx="2329" cy="1498" r="5.7"/><circle cx="2569" cy="1163" r="5.7"/><circle cx="2606" cy="1013" r="5.7"/><circle cx="2512" cy="1402" r="5.7"/><circle cx="2253" cy="1360" r="5.7"/><circle cx="2693" cy="1134" r="5.7"/><circle cx="2549" cy="1302" r="5.7"/><circle cx="2541" cy="1529" r="5.7"/><circle cx="2395" cy="1242" r="5.7"/><circle cx="2572" cy="1032" r="5.7"/><circle cx="2676" cy="1220" r="5.7"/><circle cx="2498" cy="1300" r="5.7"/><circle cx="2362" cy="1494" r="5.7"/><circle cx="2470" cy="1040" r="5.7"/><circle cx="2490" cy="1476" r="5.7"/><circle cx="2507" cy="1458" r="5.7"/><circle cx="2388" cy="1126" r="5.7"/><circle cx="2520" cy="1493" r="5.7"/><circle cx="2530" cy="853" r="5.7"/><circle cx="2500" cy="1196" r="5.7"/><circle cx="2458" cy="715" r="5.7"/><circle cx="2614" cy="1404" r="5.7"/><circle cx="2454" cy="1275" r="5.7"/><circle cx="2357" cy="1484" r="5.7"/><circle cx="2353" cy="1379" r="5.7"/><circle cx="2283" cy="1500" r="5.7"/><circle cx="2533" cy="1213" r="5.7"/><circle cx="2648" cy="1537" r="5.7"/><circle cx="2200" cy="1428" r="5.7"/><circle cx="2661" cy="1464" r="5.7"/><circle cx="2691" cy="1512" r="5.7"/><circle cx="2656" cy="1246" r="5.7"/><circle cx="2446" cy="1307" r="5.7"/><circle cx="2657" cy="1234" r="5.7"/><circle cx="2453" cy="1528" r="5.7"/><circle cx="2624" cy="1477" r="5.7"/><circle cx="2534" cy="1452" r="5.7"/><circle cx="2526" cy="1561" r="5.7"/><circle cx="2426" cy="1341" r="5.7"/><circle cx="2532" cy="924" r="5.7"/><circle cx="2526" cy="1462" r="5.7"/><circle cx="2572" cy="1285" r="5.7"/><circle cx="2357" cy="1253" r="5.7"/><circle cx="2492" cy="1181" r="5.7"/><circle cx="2474" cy="982" r="5.7"/><circle cx="2485" cy="1116" r="5.7"/><circle cx="2377" cy="1270" r="5.7"/><circle cx="2564" cy="1371" r="5.7"/><circle cx="2538" cy="1216" r="5.7"/><circle cx="2466" cy="928" r="5.7"/><circle cx="2496" cy="1404" r="5.7"/><circle cx="2486" cy="1079" r="5.7"/><circle cx="2690" cy="1494" r="5.7"/><circle cx="2522" cy="1244" r="5.7"/><circle cx="2405" cy="1255" r="5.7"/><circle cx="2445" cy="755" r="5.7"/><circle cx="2480" cy="1095" r="5.7"/><circle cx="2520" cy="943" r="5.7"/><circle cx="2691" cy="1388" r="5.7"/><circle cx="2502" cy="1222" r="5.7"/><circle cx="2464" cy="1529" r="5.7"/><circle cx="2620" cy="1387" r="5.7"/><circle cx="2531" cy="963" r="5.7"/><circle cx="2637" cy="1492" r="5.7"/><circle cx="2491" cy="1502" r="5.7"/><circle cx="2544" cy="1333" r="5.7"/><circle cx="2547" cy="1435" r="5.7"/><circle cx="2596" cy="1355" r="5.7"/><circle cx="2578" cy="1257" r="5.7"/><circle cx="2539" cy="1501" r="5.7"/><circle cx="2570" cy="1539" r="5.7"/><circle cx="2287" cy="1293" r="5.7"/><circle cx="2629" cy="1557" r="5.7"/><circle cx="2459" cy="859" r="5.7"/><circle cx="2539" cy="1313" r="5.7"/><circle cx="2520" cy="881" r="5.7"/><circle cx="2503" cy="1137" r="5.7"/><circle cx="2543" cy="1383" r="5.7"/><circle cx="2462" cy="1113" r="5.7"/><circle cx="2388" cy="1190" r="5.7"/><circle cx="2613" cy="1527" r="5.7"/><circle cx="2638" cy="1489" r="5.7"/><circle cx="2480" cy="974" r="5.7"/><circle cx="2419" cy="1008" r="5.7"/><circle cx="2376" cy="1504" r="5.7"/><circle cx="2451" cy="948" r="5.7"/><circle cx="2646" cy="1548" r="5.7"/><circle cx="2492" cy="729" r="5.7"/><circle cx="2457" cy="1286" r="5.7"/><circle cx="2547" cy="1496" r="5.7"/><circle cx="2424" cy="1349" r="5.7"/><circle cx="2528" cy="1065" r="5.7"/><circle cx="2583" cy="1095" r="5.7"/><circle cx="2554" cy="1232" r="5.7"/><circle cx="2682" cy="1467" r="5.7"/><circle cx="2466" cy="1217" r="5.7"/><circle cx="2570" cy="1203" r="5.7"/><circle cx="2492" cy="1028" r="5.7"/><circle cx="2555" cy="1489" r="5.7"/><circle cx="2486" cy="1062" r="5.7"/><circle cx="2479" cy="1317" r="5.7"/><circle cx="2270" cy="1418" r="5.7"/><circle cx="2606" cy="1397" r="5.7"/><circle cx="2560" cy="1573" r="5.7"/><circle cx="2613" cy="1408" r="5.7"/><circle cx="2640" cy="1443" r="5.7"/><circle cx="2508" cy="1533" r="5.7"/><circle cx="2507" cy="1223" r="5.7"/><circle cx="2571" cy="1430" r="5.7"/><circle cx="2574" cy="1406" r="5.7"/><circle cx="2454" cy="1353" r="5.7"/><circle cx="2684" cy="1487" r="5.7"/><circle cx="2604" cy="1281" r="5.7"/><circle cx="2309" cy="1432" r="5.7"/><circle cx="2451" cy="955" r="5.7"/><circle cx="2442" cy="772" r="5.7"/><circle cx="2358" cy="1461" r="5.7"/><circle cx="2541" cy="1355" r="5.7"/><circle cx="2575" cy="1537" r="5.7"/><circle cx="2399" cy="1548" r="5.7"/><circle cx="2548" cy="1282" r="5.7"/><circle cx="2574" cy="1291" r="5.7"/><circle cx="2469" cy="1175" r="5.7"/><circle cx="2497" cy="700" r="5.7"/><circle cx="2351" cy="1466" r="5.7"/><circle cx="2566" cy="1483" r="5.7"/><circle cx="2696" cy="1373" r="5.7"/><circle cx="2474" cy="1195" r="5.7"/><circle cx="2526" cy="1299" r="5.7"/><circle cx="2501" cy="974" r="5.7"/><circle cx="2527" cy="1262" r="5.7"/><circle cx="2680" cy="1484" r="5.7"/><circle cx="2576" cy="998" r="5.7"/><circle cx="2682" cy="1334" r="5.7"/><circle cx="2447" cy="1338" r="5.7"/><circle cx="2493" cy="1268" r="5.7"/><circle cx="2315" cy="1015" r="5.7"/><circle cx="2704" cy="1528" r="5.7"/><circle cx="2491" cy="1087" r="5.7"/><circle cx="2476" cy="1322" r="5.7"/><circle cx="2325" cy="1072" r="5.7"/><circle cx="2382" cy="1266" r="5.7"/><circle cx="2642" cy="1561" r="5.7"/><circle cx="2590" cy="1117" r="5.7"/><circle cx="2230" cy="1194" r="5.7"/><circle cx="2477" cy="1065" r="5.7"/><circle cx="2483" cy="1201" r="5.7"/><circle cx="2479" cy="1052" r="5.7"/><circle cx="2360" cy="1456" r="5.7"/><circle cx="2478" cy="1476" r="5.7"/><circle cx="2597" cy="1453" r="5.7"/><circle cx="2472" cy="1345" r="5.7"/><circle cx="2513" cy="1399" r="5.7"/><circle cx="2457" cy="985" r="5.7"/><circle cx="2317" cy="1420" r="5.7"/><circle cx="2626" cy="1396" r="5.7"/><circle cx="2414" cy="1574" r="5.7"/><circle cx="2491" cy="1276" r="5.7"/><circle cx="2539" cy="1308" r="5.7"/><circle cx="2716" cy="1370" r="5.7"/><circle cx="2452" cy="1053" r="5.7"/><circle cx="2456" cy="881" r="5.7"/><circle cx="2549" cy="1138" r="5.7"/><circle cx="2493" cy="890" r="5.7"/><circle cx="2430" cy="1418" r="5.7"/><circle cx="2403" cy="1160" r="5.7"/><circle cx="2477" cy="1352" r="5.7"/><circle cx="2496" cy="1058" r="5.7"/><circle cx="2454" cy="1553" r="5.7"/><circle cx="2480" cy="922" r="5.7"/><circle cx="2471" cy="1085" r="5.7"/><circle cx="2496" cy="1458" r="5.7"/><circle cx="2638" cy="1320" r="5.7"/><circle cx="2563" cy="1522" r="5.7"/><circle cx="2386" cy="1309" r="5.7"/><circle cx="2605" cy="1489" r="5.7"/><circle cx="2438" cy="1309" r="5.7"/><circle cx="2614" cy="1290" r="5.7"/><circle cx="2542" cy="1464" r="5.7"/><circle cx="2450" cy="846" r="5.7"/><circle cx="2544" cy="1451" r="5.7"/><circle cx="2544" cy="1348" r="5.7"/><circle cx="2477" cy="1366" r="5.7"/><circle cx="2459" cy="1524" r="5.7"/><circle cx="2451" cy="1091" r="5.7"/><circle cx="2600" cy="1224" r="5.7"/><circle cx="2448" cy="1216" r="5.7"/><circle cx="2630" cy="1453" r="5.7"/><circle cx="2557" cy="1428" r="5.7"/><circle cx="2393" cy="1484" r="5.7"/><circle cx="2470" cy="1379" r="5.7"/><circle cx="2678" cy="1176" r="5.7"/><circle cx="2484" cy="967" r="5.7"/><circle cx="2653" cy="1553" r="5.7"/><circle cx="2590" cy="1150" r="5.7"/><circle cx="2431" cy="1318" r="5.7"/><circle cx="2490" cy="837" r="5.7"/><circle cx="2581" cy="1535" r="5.7"/><circle cx="2665" cy="1510" r="5.7"/><circle cx="2452" cy="968" r="5.7"/><circle cx="2477" cy="1435" r="5.7"/><circle cx="2477" cy="985" r="5.7"/><circle cx="2276" cy="1246" r="5.7"/><circle cx="2338" cy="1572" r="5.7"/><circle cx="2402" cy="828" r="5.7"/><circle cx="2375" cy="1227" r="5.7"/><circle cx="2493" cy="1108" r="5.7"/><circle cx="2188" cy="1206" r="5.7"/><circle cx="2599" cy="1315" r="5.7"/><circle cx="2628" cy="1326" r="5.7"/><circle cx="2507" cy="1336" r="5.7"/><circle cx="2468" cy="1332" r="5.7"/><circle cx="2494" cy="1406" r="5.7"/><circle cx="2168" cy="1500" r="5.7"/><circle cx="2703" cy="1343" r="5.7"/><circle cx="2455" cy="828" r="5.7"/><circle cx="2485" cy="1409" r="5.7"/><circle cx="2615" cy="1378" r="5.7"/><circle cx="2424" cy="1318" r="5.7"/><circle cx="2418" cy="1345" r="5.7"/><circle cx="2480" cy="1390" r="5.7"/><circle cx="2639" cy="1226" r="5.7"/><circle cx="2511" cy="930" r="5.7"/><circle cx="2459" cy="826" r="5.7"/><circle cx="2426" cy="764" r="5.7"/><circle cx="2485" cy="1044" r="5.7"/><circle cx="2386" cy="1190" r="5.7"/><circle cx="2420" cy="766" r="5.7"/><circle cx="2551" cy="1077" r="5.7"/><circle cx="2461" cy="1435" r="5.7"/><circle cx="2520" cy="1097" r="5.7"/><circle cx="2317" cy="1192" r="5.7"/><circle cx="2360" cy="1541" r="5.7"/><circle cx="2424" cy="1166" r="5.7"/><circle cx="2551" cy="1126" r="5.7"/><circle cx="2611" cy="1262" r="5.7"/><circle cx="2655" cy="1474" r="5.7"/><circle cx="2537" cy="1203" r="5.7"/><circle cx="2473" cy="897" r="5.7"/><circle cx="2542" cy="1511" r="5.7"/><circle cx="2394" cy="1207" r="5.7"/><circle cx="2493" cy="1476" r="5.7"/><circle cx="2526" cy="1346" r="5.7"/><circle cx="2486" cy="709" r="5.7"/><circle cx="2442" cy="858" r="5.7"/><circle cx="2497" cy="772" r="5.7"/><circle cx="2443" cy="1160" r="5.7"/><circle cx="2493" cy="1245" r="5.7"/><circle cx="2266" cy="1206" r="5.7"/><circle cx="2653" cy="1498" r="5.7"/><circle cx="2678" cy="1507" r="5.7"/><circle cx="2586" cy="1425" r="5.7"/><circle cx="2452" cy="1150" r="5.7"/><circle cx="2499" cy="1322" r="5.7"/><circle cx="2368" cy="1538" r="5.7"/><circle cx="2482" cy="934" r="5.7"/><circle cx="2255" cy="1525" r="5.7"/><circle cx="2627" cy="1534" r="5.7"/><circle cx="2533" cy="1384" r="5.7"/><circle cx="2595" cy="1560" r="5.7"/><circle cx="2512" cy="1538" r="5.7"/><circle cx="2541" cy="1087" r="5.7"/><circle cx="2503" cy="1564" r="5.7"/><circle cx="2271" cy="1436" r="5.7"/><circle cx="2401" cy="1180" r="5.7"/><circle cx="2532" cy="1387" r="5.7"/><circle cx="2583" cy="1328" r="5.7"/><circle cx="2459" cy="998" r="5.7"/><circle cx="2588" cy="1524" r="5.7"/><circle cx="2730" cy="1516" r="5.7"/><circle cx="2538" cy="1242" r="5.7"/><circle cx="2532" cy="1367" r="5.7"/><circle cx="2476" cy="1135" r="5.7"/><circle cx="2279" cy="1209" r="5.7"/><circle cx="2230" cy="1245" r="5.7"/><circle cx="2378" cy="1038" r="5.7"/><circle cx="2367" cy="1225" r="5.7"/><circle cx="2414" cy="1177" r="5.7"/><circle cx="2536" cy="942" r="5.7"/><circle cx="2400" cy="1389" r="5.7"/><circle cx="2448" cy="1511" r="5.7"/><circle cx="2532" cy="1349" r="5.7"/><circle cx="2295" cy="1235" r="5.7"/><circle cx="2493" cy="1456" r="5.7"/><circle cx="2732" cy="1198" r="5.7"/><circle cx="2340" cy="1162" r="5.7"/><circle cx="2534" cy="1194" r="5.7"/><circle cx="2584" cy="1460" r="5.7"/><circle cx="2508" cy="1390" r="5.7"/><circle cx="2503" cy="1136" r="5.7"/><circle cx="2534" cy="1200" r="5.7"/><circle cx="2506" cy="1366" r="5.7"/><circle cx="2544" cy="987" r="5.7"/><circle cx="2529" cy="1336" r="5.7"/><circle cx="2398" cy="1517" r="5.7"/><circle cx="2384" cy="1240" r="5.7"/><circle cx="2590" cy="1564" r="5.7"/><circle cx="2432" cy="1262" r="5.7"/><circle cx="2500" cy="1022" r="5.7"/><circle cx="2664" cy="1572" r="5.7"/><circle cx="2260" cy="1368" r="5.7"/><circle cx="2432" cy="1396" r="5.7"/><circle cx="2398" cy="1266" r="5.7"/><circle cx="2435" cy="1531" r="5.7"/><circle cx="2571" cy="1565" r="5.7"/><circle cx="2372" cy="1282" r="5.7"/><circle cx="2533" cy="1357" r="5.7"/><circle cx="2609" cy="1522" r="5.7"/><circle cx="2536" cy="1248" r="5.7"/><circle cx="2610" cy="1252" r="5.7"/><circle cx="2448" cy="1511" r="5.7"/><circle cx="2353" cy="1344" r="5.7"/><circle cx="2416" cy="996" r="5.7"/><circle cx="2599" cy="1186" r="5.7"/><circle cx="2503" cy="1465" r="5.7"/><circle cx="2628" cy="1265" r="5.7"/><circle cx="2554" cy="1109" r="5.7"/><circle cx="2586" cy="1027" r="5.7"/><circle cx="2448" cy="998" r="5.7"/><circle cx="2529" cy="1291" r="5.7"/><circle cx="2580" cy="1137" r="5.7"/><circle cx="2510" cy="1064" r="5.7"/><circle cx="2410" cy="1389" r="5.7"/><circle cx="2382" cy="1522" r="5.7"/><circle cx="2429" cy="1352" r="5.7"/><circle cx="2667" cy="988" r="5.7"/><circle cx="2418" cy="1187" r="5.7"/><circle cx="2495" cy="1478" r="5.7"/><circle cx="2538" cy="1230" r="5.7"/><circle cx="2466" cy="730" r="5.7"/><circle cx="2401" cy="1024" r="5.7"/><circle cx="2443" cy="1363" r="5.7"/><circle cx="2403" cy="1554" r="5.7"/><circle cx="2310" cy="1159" r="5.7"/><circle cx="2621" cy="1460" r="5.7"/><circle cx="2435" cy="824" r="5.7"/><circle cx="2730" cy="1347" r="5.7"/><circle cx="2637" cy="1560" r="5.7"/><circle cx="2492" cy="1099" r="5.7"/><circle cx="2664" cy="1564" r="5.7"/><circle cx="2472" cy="894" r="5.7"/><circle cx="2570" cy="1460" r="5.7"/><circle cx="2616" cy="1221" r="5.7"/><circle cx="2464" cy="966" r="5.7"/><circle cx="2417" cy="1442" r="5.7"/><circle cx="2466" cy="1544" r="5.7"/><circle cx="2449" cy="1380" r="5.7"/><circle cx="2544" cy="1343" r="5.7"/><circle cx="2519" cy="1255" r="5.7"/><circle cx="2572" cy="1385" r="5.7"/><circle cx="2656" cy="1533" r="5.7"/><circle cx="2646" cy="1572" r="5.7"/><circle cx="2442" cy="1407" r="5.7"/><circle cx="2542" cy="1537" r="5.7"/><circle cx="2447" cy="1453" r="5.7"/><circle cx="2420" cy="1145" r="5.7"/><circle cx="2360" cy="1546" r="5.7"/><circle cx="2456" cy="961" r="5.7"/><circle cx="2528" cy="1450" r="5.7"/><circle cx="2442" cy="1408" r="5.7"/><circle cx="2718" cy="1538" r="5.7"/><circle cx="2339" cy="1437" r="5.7"/><circle cx="2410" cy="1367" r="5.7"/><circle cx="2351" cy="1549" r="5.7"/><circle cx="2460" cy="1028" r="5.7"/><circle cx="2393" cy="1101" r="5.7"/><circle cx="2506" cy="938" r="5.7"/><circle cx="2581" cy="1399" r="5.7"/><circle cx="2441" cy="1166" r="5.7"/><circle cx="2563" cy="1104" r="5.7"/><circle cx="2426" cy="878" r="5.7"/><circle cx="2552" cy="1116" r="5.7"/><circle cx="2522" cy="827" r="5.7"/><circle cx="2458" cy="810" r="5.7"/><circle cx="2514" cy="1458" r="5.7"/><circle cx="2479" cy="1102" r="5.7"/><circle cx="2426" cy="811" r="5.7"/><circle cx="2490" cy="1514" r="5.7"/><circle cx="2346" cy="1122" r="5.7"/><circle cx="2647" cy="1395" r="5.7"/><circle cx="2580" cy="1150" r="5.7"/><circle cx="2454" cy="1286" r="5.7"/><circle cx="2434" cy="1267" r="5.7"/><circle cx="2547" cy="1491" r="5.7"/><circle cx="2295" cy="1471" r="5.7"/><circle cx="2473" cy="1238" r="5.7"/><circle cx="2490" cy="1287" r="5.7"/><circle cx="2494" cy="1254" r="5.7"/><circle cx="2575" cy="1425" r="5.7"/><circle cx="2565" cy="1110" r="5.7"/><circle cx="2507" cy="792" r="5.7"/><circle cx="2489" cy="1030" r="5.7"/><circle cx="2396" cy="1462" r="5.7"/><circle cx="2504" cy="1394" r="5.7"/><circle cx="2346" cy="1423" r="5.7"/><circle cx="2566" cy="1562" r="5.7"/><circle cx="2554" cy="1527" r="5.7"/><circle cx="2553" cy="1565" r="5.7"/><circle cx="2603" cy="1414" r="5.7"/><circle cx="2553" cy="1287" r="5.7"/><circle cx="2451" cy="1366" r="5.7"/><circle cx="2675" cy="1484" r="5.7"/><circle cx="2620" cy="1517" r="5.7"/><circle cx="2585" cy="1410" r="5.7"/><circle cx="2377" cy="1546" r="5.7"/><circle cx="2726" cy="1222" r="5.7"/><circle cx="2205" cy="1108" r="5.7"/><circle cx="2444" cy="904" r="5.7"/><circle cx="2450" cy="1378" r="5.7"/><circle cx="2527" cy="1545" r="5.7"/><circle cx="2514" cy="1422" r="5.7"/><circle cx="2532" cy="1562" r="5.7"/><circle cx="2548" cy="1525" r="5.7"/><circle cx="2510" cy="1049" r="5.7"/><circle cx="2442" cy="1026" r="5.7"/><circle cx="2659" cy="1547" r="5.7"/><circle cx="2593" cy="1310" r="5.7"/><circle cx="2576" cy="1354" r="5.7"/><circle cx="2403" cy="1522" r="5.7"/><circle cx="2611" cy="1547" r="5.7"/><circle cx="2519" cy="984" r="5.7"/><circle cx="2459" cy="1394" r="5.7"/><circle cx="2551" cy="1127" r="5.7"/><circle cx="2344" cy="1552" r="5.7"/><circle cx="2514" cy="1144" r="5.7"/><circle cx="2645" cy="1559" r="5.7"/><circle cx="2607" cy="1447" r="5.7"/><circle cx="2614" cy="1282" r="5.7"/><circle cx="2661" cy="1134" r="5.7"/><circle cx="2530" cy="1312" r="5.7"/><circle cx="2679" cy="1396" r="5.7"/><circle cx="2527" cy="1210" r="5.7"/><circle cx="2396" cy="1456" r="5.7"/><circle cx="2494" cy="1438" r="5.7"/><circle cx="2516" cy="1028" r="5.7"/><circle cx="2340" cy="1385" r="5.7"/><circle cx="2405" cy="1368" r="5.7"/><circle cx="2686" cy="1548" r="5.7"/><circle cx="2707" cy="1449" r="5.7"/><circle cx="2628" cy="1306" r="5.7"/><circle cx="2440" cy="1476" r="5.7"/><circle cx="2557" cy="1152" r="5.7"/><circle cx="2210" cy="1523" r="5.7"/><circle cx="2498" cy="1238" r="5.7"/><circle cx="2673" cy="1405" r="5.7"/><circle cx="2438" cy="1264" r="5.7"/><circle cx="2509" cy="1206" r="5.7"/><circle cx="2563" cy="1269" r="5.7"/><circle cx="2412" cy="1138" r="5.7"/><circle cx="2427" cy="1285" r="5.7"/><circle cx="2609" cy="1561" r="5.7"/><circle cx="2498" cy="1157" r="5.7"/><circle cx="2470" cy="1219" r="5.7"/><circle cx="2582" cy="1460" r="5.7"/><circle cx="2325" cy="1456" r="5.7"/><circle cx="2655" cy="1372" r="5.7"/><circle cx="2632" cy="1261" r="5.7"/><circle cx="2490" cy="1306" r="5.7"/><circle cx="2617" cy="1211" r="5.7"/><circle cx="2581" cy="1498" r="5.7"/><circle cx="2541" cy="1560" r="5.7"/><circle cx="2530" cy="1179" r="5.7"/><circle cx="2650" cy="1019" r="5.7"/><circle cx="2513" cy="1166" r="5.7"/><circle cx="2528" cy="1383" r="5.7"/><circle cx="2474" cy="1199" r="5.7"/><circle cx="2426" cy="1445" r="5.7"/><circle cx="2612" cy="1516" r="5.7"/><circle cx="2413" cy="1396" r="5.7"/><circle cx="2638" cy="1483" r="5.7"/><circle cx="2618" cy="1418" r="5.7"/><circle cx="2610" cy="1347" r="5.7"/><circle cx="2351" cy="950" r="5.7"/><circle cx="2518" cy="1286" r="5.7"/><circle cx="2645" cy="1258" r="5.7"/><circle cx="2565" cy="1480" r="5.7"/><circle cx="2622" cy="1130" r="5.7"/><circle cx="2657" cy="1491" r="5.7"/><circle cx="2308" cy="1048" r="5.7"/><circle cx="2342" cy="1321" r="5.7"/><circle cx="2417" cy="1538" r="5.7"/><circle cx="2439" cy="1011" r="5.7"/><circle cx="2667" cy="1480" r="5.7"/><circle cx="2534" cy="1180" r="5.7"/><circle cx="2464" cy="893" r="5.7"/><circle cx="2668" cy="1361" r="5.7"/><circle cx="2482" cy="832" r="5.7"/><circle cx="2433" cy="1037" r="5.7"/><circle cx="2572" cy="1498" r="5.7"/><circle cx="2590" cy="1217" r="5.7"/><circle cx="2570" cy="1481" r="5.7"/><circle cx="2745" cy="1540" r="5.7"/><circle cx="2391" cy="1319" r="5.7"/><circle cx="2444" cy="1305" r="5.7"/><circle cx="2367" cy="1328" r="5.7"/><circle cx="2606" cy="1504" r="5.7"/><circle cx="2467" cy="1465" r="5.7"/><circle cx="2509" cy="1567" r="5.7"/><circle cx="2479" cy="1236" r="5.7"/><circle cx="2504" cy="1536" r="5.7"/><circle cx="2433" cy="1324" r="5.7"/><circle cx="2317" cy="1448" r="5.7"/><circle cx="2472" cy="1215" r="5.7"/><circle cx="2656" cy="1560" r="5.7"/><circle cx="2712" cy="1119" r="5.7"/><circle cx="2483" cy="890" r="5.7"/><circle cx="2177" cy="1323" r="5.7"/><circle cx="2400" cy="1289" r="5.7"/><circle cx="2494" cy="1227" r="5.7"/><circle cx="2200" cy="1555" r="5.7"/><circle cx="2484" cy="1355" r="5.7"/><circle cx="2573" cy="1548" r="5.7"/><circle cx="2542" cy="1574" r="5.7"/><circle cx="2452" cy="1351" r="5.7"/><circle cx="2501" cy="1509" r="5.7"/><circle cx="2509" cy="1534" r="5.7"/><circle cx="2464" cy="1393" r="5.7"/><circle cx="2424" cy="1174" r="5.7"/><circle cx="2695" cy="1199" r="5.7"/><circle cx="2656" cy="1550" r="5.7"/><circle cx="2618" cy="1319" r="5.7"/><circle cx="2586" cy="1279" r="5.7"/><circle cx="2691" cy="1506" r="5.7"/><circle cx="2420" cy="1474" r="5.7"/><circle cx="2514" cy="1118" r="5.7"/><circle cx="2425" cy="1387" r="5.7"/><circle cx="2470" cy="990" r="5.7"/><circle cx="2518" cy="1450" r="5.7"/><circle cx="2449" cy="1274" r="5.7"/><circle cx="2330" cy="1300" r="5.7"/><circle cx="2551" cy="1544" r="5.7"/><circle cx="2432" cy="1242" r="5.7"/><circle cx="2406" cy="790" r="5.7"/><circle cx="2532" cy="1487" r="5.7"/><circle cx="2608" cy="1164" r="5.7"/><circle cx="2490" cy="1433" r="5.7"/><circle cx="2666" cy="1278" r="5.7"/><circle cx="2394" cy="1378" r="5.7"/><circle cx="2185" cy="1420" r="5.7"/><circle cx="2518" cy="852" r="5.7"/><circle cx="2454" cy="1525" r="5.7"/><circle cx="2522" cy="1428" r="5.7"/><circle cx="2528" cy="1200" r="5.7"/><circle cx="2600" cy="1145" r="5.7"/><circle cx="2553" cy="1322" r="5.7"/><circle cx="2414" cy="753" r="5.7"/><circle cx="2596" cy="1566" r="5.7"/><circle cx="2405" cy="742" r="5.7"/><circle cx="2643" cy="1496" r="5.7"/><circle cx="2616" cy="1375" r="5.7"/><circle cx="2389" cy="1323" r="5.7"/><circle cx="2502" cy="1015" r="5.7"/><circle cx="2474" cy="966" r="5.7"/><circle cx="2547" cy="1384" r="5.7"/><circle cx="2318" cy="1380" r="5.7"/><circle cx="2530" cy="1289" r="5.7"/><circle cx="2531" cy="1308" r="5.7"/><circle cx="2603" cy="1575" r="5.7"/><circle cx="2567" cy="1159" r="5.7"/><circle cx="2330" cy="1208" r="5.7"/><circle cx="2513" cy="1077" r="5.7"/><circle cx="2565" cy="1346" r="5.7"/><circle cx="2612" cy="1518" r="5.7"/><circle cx="2592" cy="1161" r="5.7"/><circle cx="2496" cy="1480" r="5.7"/><circle cx="2447" cy="1172" r="5.7"/><circle cx="2723" cy="1277" r="5.7"/><circle cx="2592" cy="1570" r="5.7"/><circle cx="2528" cy="1552" r="5.7"/><circle cx="2460" cy="1432" r="5.7"/><circle cx="2571" cy="1575" r="5.7"/><circle cx="2548" cy="1362" r="5.7"/><circle cx="2557" cy="1133" r="5.7"/><circle cx="2510" cy="1332" r="5.7"/><circle cx="2712" cy="1225" r="5.7"/><circle cx="2353" cy="1315" r="5.7"/><circle cx="2425" cy="1515" r="5.7"/><circle cx="2487" cy="1032" r="5.7"/><circle cx="2576" cy="1486" r="5.7"/><circle cx="2411" cy="1365" r="5.7"/><circle cx="2480" cy="1404" r="5.7"/><circle cx="2413" cy="1101" r="5.7"/><circle cx="2692" cy="1395" r="5.7"/><circle cx="2577" cy="1570" r="5.7"/><circle cx="2370" cy="900" r="5.7"/><circle cx="2587" cy="1535" r="5.7"/><circle cx="2436" cy="941" r="5.7"/><circle cx="2510" cy="1064" r="5.7"/><circle cx="2439" cy="1358" r="5.7"/><circle cx="2480" cy="1376" r="5.7"/><circle cx="2471" cy="1360" r="5.7"/><circle cx="2511" cy="1115" r="5.7"/><circle cx="2478" cy="1130" r="5.7"/><circle cx="2452" cy="883" r="5.7"/><circle cx="2445" cy="1058" r="5.7"/><circle cx="2532" cy="1310" r="5.7"/><circle cx="2523" cy="1172" r="5.7"/><circle cx="2564" cy="1516" r="5.7"/><circle cx="2542" cy="963" r="5.7"/><circle cx="2477" cy="1318" r="5.7"/><circle cx="2464" cy="853" r="5.7"/><circle cx="2550" cy="1422" r="5.7"/><circle cx="2749" cy="1277" r="5.7"/><circle cx="2627" cy="1405" r="5.7"/><circle cx="2605" cy="1472" r="5.7"/><circle cx="2544" cy="1338" r="5.7"/><circle cx="2600" cy="1377" r="5.7"/><circle cx="2473" cy="1156" r="5.7"/><circle cx="2612" cy="1448" r="5.7"/><circle cx="2396" cy="921" r="5.7"/><circle cx="2513" cy="944" r="5.7"/><circle cx="2397" cy="1210" r="5.7"/><circle cx="2474" cy="1325" r="5.7"/><circle cx="2489" cy="965" r="5.7"/><circle cx="2531" cy="1559" r="5.7"/><circle cx="2418" cy="1312" r="5.7"/><circle cx="2566" cy="1550" r="5.7"/><circle cx="2246" cy="1502" r="5.7"/><circle cx="2316" cy="1410" r="5.7"/><circle cx="2556" cy="1244" r="5.7"/><circle cx="2466" cy="1254" r="5.7"/><circle cx="2485" cy="1545" r="5.7"/><circle cx="2428" cy="861" r="5.7"/><circle cx="2635" cy="1480" r="5.7"/><circle cx="2698" cy="1450" r="5.7"/><circle cx="2391" cy="998" r="5.7"/><circle cx="2713" cy="1203" r="5.7"/><circle cx="2497" cy="1055" r="5.7"/><circle cx="2471" cy="1046" r="5.7"/><circle cx="2379" cy="1468" r="5.7"/><circle cx="2445" cy="754" r="5.7"/><circle cx="2345" cy="1429" r="5.7"/><circle cx="2717" cy="1576" r="5.7"/><circle cx="2491" cy="1287" r="5.7"/><circle cx="2471" cy="1502" r="5.7"/><circle cx="2616" cy="1404" r="5.7"/><circle cx="2617" cy="1406" r="5.7"/><circle cx="2456" cy="1301" r="5.7"/><circle cx="2626" cy="1042" r="5.7"/><circle cx="2609" cy="1504" r="5.7"/><circle cx="2504" cy="1102" r="5.7"/><circle cx="2451" cy="1097" r="5.7"/><circle cx="2483" cy="1137" r="5.7"/><circle cx="2479" cy="1126" r="5.7"/><circle cx="2534" cy="1102" r="5.7"/><circle cx="2217" cy="1075" r="5.7"/><circle cx="2473" cy="1146" r="5.7"/><circle cx="2350" cy="1531" r="5.7"/><circle cx="2484" cy="1184" r="5.7"/><circle cx="2483" cy="1566" r="5.7"/><circle cx="2554" cy="1464" r="5.7"/><circle cx="2396" cy="1484" r="5.7"/><circle cx="2472" cy="1415" r="5.7"/><circle cx="2487" cy="1084" r="5.7"/><circle cx="2538" cy="1487" r="5.7"/><circle cx="2391" cy="1563" r="5.7"/><circle cx="2420" cy="1243" r="5.7"/><circle cx="2654" cy="1521" r="5.7"/><circle cx="2357" cy="1458" r="5.7"/><circle cx="2450" cy="1379" r="5.7"/><circle cx="2642" cy="1509" r="5.7"/><circle cx="2583" cy="1525" r="5.7"/><circle cx="2656" cy="1415" r="5.7"/><circle cx="2332" cy="1183" r="5.7"/><circle cx="2431" cy="1205" r="5.7"/><circle cx="2393" cy="812" r="5.7"/><circle cx="2475" cy="727" r="5.7"/><circle cx="2473" cy="1344" r="5.7"/><circle cx="2579" cy="1340" r="5.7"/><circle cx="2536" cy="1013" r="5.7"/><circle cx="2315" cy="1354" r="5.7"/><circle cx="2342" cy="1146" r="5.7"/><circle cx="2470" cy="1340" r="5.7"/><circle cx="2479" cy="1348" r="5.7"/><circle cx="2450" cy="1433" r="5.7"/><circle cx="2522" cy="1195" r="5.7"/><circle cx="2271" cy="1568" r="5.7"/><circle cx="2622" cy="1286" r="5.7"/><circle cx="2536" cy="1324" r="5.7"/><circle cx="2501" cy="1196" r="5.7"/><circle cx="2450" cy="954" r="5.7"/><circle cx="2622" cy="1272" r="5.7"/><circle cx="2631" cy="1378" r="5.7"/><circle cx="2515" cy="1206" r="5.7"/><circle cx="2579" cy="1305" r="5.7"/><circle cx="2415" cy="1165" r="5.7"/><circle cx="2484" cy="1507" r="5.7"/><circle cx="2622" cy="1300" r="5.7"/><circle cx="2419" cy="1040" r="5.7"/><circle cx="2459" cy="1302" r="5.7"/><circle cx="2557" cy="1358" r="5.7"/><circle cx="2608" cy="1239" r="5.7"/><circle cx="2480" cy="1387" r="5.7"/><circle cx="2743" cy="1472" r="5.7"/><circle cx="2563" cy="1104" r="5.7"/><circle cx="2514" cy="1078" r="5.7"/><circle cx="2512" cy="1530" r="5.7"/><circle cx="2423" cy="1310" r="5.7"/><circle cx="2378" cy="1162" r="5.7"/><circle cx="2539" cy="1226" r="5.7"/><circle cx="2410" cy="1475" r="5.7"/><circle cx="2524" cy="1334" r="5.7"/><circle cx="2419" cy="874" r="5.7"/><circle cx="2386" cy="1428" r="5.7"/><circle cx="2446" cy="929" r="5.7"/><circle cx="2498" cy="754" r="5.7"/><circle cx="2522" cy="1019" r="5.7"/><circle cx="2585" cy="1174" r="5.7"/><circle cx="2626" cy="1514" r="5.7"/><circle cx="2547" cy="1434" r="5.7"/><circle cx="2550" cy="1381" r="5.7"/><circle cx="2506" cy="1162" r="5.7"/><circle cx="2314" cy="1302" r="5.7"/><circle cx="2533" cy="1578" r="5.7"/><circle cx="2702" cy="1329" r="5.7"/><circle cx="2320" cy="1534" r="5.7"/><circle cx="2434" cy="1230" r="5.7"/><circle cx="2410" cy="1390" r="5.7"/><circle cx="2461" cy="1397" r="5.7"/><circle cx="2277" cy="1239" r="5.7"/><circle cx="2585" cy="1524" r="5.7"/><circle cx="2564" cy="1465" r="5.7"/><circle cx="2653" cy="1550" r="5.7"/><circle cx="2396" cy="1403" r="5.7"/><circle cx="2448" cy="1103" r="5.7"/><circle cx="2612" cy="1550" r="5.7"/><circle cx="2533" cy="1476" r="5.7"/><circle cx="2744" cy="1485" r="5.7"/><circle cx="2332" cy="1268" r="5.7"/><circle cx="2452" cy="1295" r="5.7"/><circle cx="2622" cy="1534" r="5.7"/><circle cx="2553" cy="1543" r="5.7"/><circle cx="2672" cy="1463" r="5.7"/><circle cx="2569" cy="913" r="5.7"/><circle cx="2631" cy="1511" r="5.7"/><circle cx="2308" cy="1549" r="5.7"/><circle cx="2602" cy="1207" r="5.7"/><circle cx="2600" cy="1439" r="5.7"/><circle cx="2510" cy="1179" r="5.7"/><circle cx="2577" cy="1423" r="5.7"/><circle cx="2377" cy="1498" r="5.7"/><circle cx="2591" cy="1455" r="5.7"/><circle cx="2527" cy="1102" r="5.7"/><circle cx="2546" cy="1326" r="5.7"/><circle cx="2457" cy="1020" r="5.7"/><circle cx="2537" cy="1550" r="5.7"/><circle cx="2440" cy="946" r="5.7"/><circle cx="2540" cy="1394" r="5.7"/><circle cx="2338" cy="1075" r="5.7"/><circle cx="2492" cy="1386" r="5.7"/><circle cx="2404" cy="1385" r="5.7"/><circle cx="2539" cy="1199" r="5.7"/><circle cx="2456" cy="991" r="5.7"/><circle cx="2453" cy="936" r="5.7"/><circle cx="2222" cy="1362" r="5.7"/><circle cx="2565" cy="1089" r="5.7"/><circle cx="2522" cy="860" r="5.7"/><circle cx="2445" cy="977" r="5.7"/><circle cx="2432" cy="1259" r="5.7"/><circle cx="2568" cy="1163" r="5.7"/><circle cx="2529" cy="776" r="5.7"/><circle cx="2600" cy="1470" r="5.7"/><circle cx="2484" cy="1390" r="5.7"/><circle cx="2470" cy="1542" r="5.7"/><circle cx="2457" cy="1335" r="5.7"/><circle cx="2607" cy="1530" r="5.7"/><circle cx="2534" cy="1090" r="5.7"/><circle cx="2622" cy="978" r="5.7"/><circle cx="2493" cy="1107" r="5.7"/><circle cx="2562" cy="1476" r="5.7"/><circle cx="2535" cy="1456" r="5.7"/><circle cx="2375" cy="1502" r="5.7"/><circle cx="2299" cy="1402" r="5.7"/><circle cx="2200" cy="1473" r="5.7"/><circle cx="2587" cy="1507" r="5.7"/><circle cx="2601" cy="1544" r="5.7"/><circle cx="2482" cy="1353" r="5.7"/><circle cx="2465" cy="1386" r="5.7"/><circle cx="2245" cy="1402" r="5.7"/><circle cx="2555" cy="1273" r="5.7"/><circle cx="2667" cy="1438" r="5.7"/><circle cx="2601" cy="1542" r="5.7"/><circle cx="2636" cy="1304" r="5.7"/><circle cx="2447" cy="1562" r="5.7"/><circle cx="2568" cy="1369" r="5.7"/><circle cx="2713" cy="1556" r="5.7"/><circle cx="2268" cy="1372" r="5.7"/><circle cx="2516" cy="981" r="5.7"/><circle cx="2490" cy="705" r="5.7"/><circle cx="2572" cy="1446" r="5.7"/><circle cx="2494" cy="1044" r="5.7"/><circle cx="2481" cy="1208" r="5.7"/><circle cx="2451" cy="722" r="5.7"/><circle cx="2474" cy="1226" r="5.7"/><circle cx="2566" cy="1526" r="5.7"/><circle cx="2444" cy="972" r="5.7"/><circle cx="2294" cy="1409" r="5.7"/><circle cx="2460" cy="1199" r="5.7"/><circle cx="2542" cy="1507" r="5.7"/><circle cx="2474" cy="904" r="5.7"/><circle cx="2615" cy="1562" r="5.7"/><circle cx="2718" cy="1488" r="5.7"/><circle cx="2294" cy="1569" r="5.7"/><circle cx="2303" cy="1357" r="5.7"/><circle cx="2559" cy="1492" r="5.7"/><circle cx="2439" cy="1355" r="5.7"/><circle cx="2589" cy="1512" r="5.7"/><circle cx="2298" cy="1527" r="5.7"/><circle cx="2465" cy="927" r="5.7"/><circle cx="2575" cy="1475" r="5.7"/><circle cx="2473" cy="1560" r="5.7"/><circle cx="2242" cy="1499" r="5.7"/><circle cx="2508" cy="1175" r="5.7"/><circle cx="2400" cy="1258" r="5.7"/><circle cx="2574" cy="916" r="5.7"/><circle cx="2614" cy="1534" r="5.7"/><circle cx="2547" cy="1553" r="5.7"/><circle cx="2680" cy="1209" r="5.7"/><circle cx="2304" cy="1572" r="5.7"/><circle cx="2399" cy="757" r="5.7"/><circle cx="2388" cy="1006" r="5.7"/><circle cx="2645" cy="1503" r="5.7"/><circle cx="2638" cy="1328" r="5.7"/><circle cx="2547" cy="1559" r="5.7"/><circle cx="2536" cy="1444" r="5.7"/><circle cx="2680" cy="1530" r="5.7"/><circle cx="2460" cy="1576" r="5.7"/><circle cx="2749" cy="1406" r="5.7"/><circle cx="2614" cy="1408" r="5.7"/><circle cx="2425" cy="1556" r="5.7"/><circle cx="2311" cy="1566" r="5.7"/><circle cx="2492" cy="1470" r="5.7"/><circle cx="2427" cy="1530" r="5.7"/><circle cx="2538" cy="779" r="5.7"/><circle cx="2452" cy="1341" r="5.7"/><circle cx="2505" cy="1505" r="5.7"/><circle cx="2504" cy="1394" r="5.7"/><circle cx="2597" cy="1572" r="5.7"/><circle cx="2490" cy="810" r="5.7"/><circle cx="2631" cy="1392" r="5.7"/><circle cx="2434" cy="1146" r="5.7"/><circle cx="2600" cy="1381" r="5.7"/><circle cx="2359" cy="1269" r="5.7"/><circle cx="2394" cy="996" r="5.7"/><circle cx="2302" cy="1496" r="5.7"/><circle cx="2586" cy="1323" r="5.7"/><circle cx="2553" cy="1222" r="5.7"/><circle cx="2536" cy="1322" r="5.7"/><circle cx="2446" cy="1460" r="5.7"/><circle cx="2413" cy="1101" r="5.7"/><circle cx="2423" cy="1037" r="5.7"/><circle cx="2446" cy="1249" r="5.7"/><circle cx="2550" cy="1400" r="5.7"/><circle cx="2427" cy="1467" r="5.7"/><circle cx="2423" cy="1513" r="5.7"/><circle cx="2592" cy="1293" r="5.7"/><circle cx="2439" cy="1388" r="5.7"/><circle cx="2414" cy="1464" r="5.7"/><circle cx="2430" cy="1269" r="5.7"/><circle cx="2564" cy="1423" r="5.7"/><circle cx="2550" cy="1478" r="5.7"/><circle cx="2536" cy="979" r="5.7"/><circle cx="2655" cy="1317" r="5.7"/><circle cx="2651" cy="1477" r="5.7"/><circle cx="2581" cy="1285" r="5.7"/><circle cx="2631" cy="1517" r="5.7"/><circle cx="2530" cy="1141" r="5.7"/><circle cx="2582" cy="1264" r="5.7"/><circle cx="2446" cy="924" r="5.7"/><circle cx="2524" cy="1334" r="5.7"/><circle cx="2461" cy="1044" r="5.7"/><circle cx="2599" cy="937" r="5.7"/><circle cx="2453" cy="1540" r="5.7"/><circle cx="2526" cy="1202" r="5.7"/><circle cx="2500" cy="1564" r="5.7"/><circle cx="2505" cy="1128" r="5.7"/><circle cx="2441" cy="1548" r="5.7"/><circle cx="2627" cy="1272" r="5.7"/><circle cx="2411" cy="1434" r="5.7"/><circle cx="2349" cy="1547" r="5.7"/><circle cx="2598" cy="1475" r="5.7"/><circle cx="2452" cy="1476" r="5.7"/><circle cx="2405" cy="1216" r="5.7"/><circle cx="2579" cy="1555" r="5.7"/><circle cx="2513" cy="1528" r="5.7"/><circle cx="2573" cy="1514" r="5.7"/><circle cx="2462" cy="1420" r="5.7"/><circle cx="2456" cy="1023" r="5.7"/><circle cx="2574" cy="1506" r="5.7"/><circle cx="2538" cy="1101" r="5.7"/><circle cx="2674" cy="1537" r="5.7"/><circle cx="2645" cy="1115" r="5.7"/><circle cx="2645" cy="1318" r="5.7"/><circle cx="2337" cy="1510" r="5.7"/><circle cx="2587" cy="1167" r="5.7"/><circle cx="2489" cy="1143" r="5.7"/><circle cx="2450" cy="1367" r="5.7"/><circle cx="2501" cy="1339" r="5.7"/><circle cx="2451" cy="976" r="5.7"/><circle cx="2623" cy="1468" r="5.7"/><circle cx="2504" cy="1534" r="5.7"/><circle cx="2385" cy="1398" r="5.7"/><circle cx="2187" cy="1448" r="5.7"/><circle cx="2482" cy="1329" r="5.7"/><circle cx="2464" cy="1066" r="5.7"/><circle cx="2535" cy="1153" r="5.7"/><circle cx="2592" cy="1493" r="5.7"/><circle cx="2535" cy="1364" r="5.7"/><circle cx="2499" cy="805" r="5.7"/><circle cx="2534" cy="1521" r="5.7"/><circle cx="2546" cy="1480" r="5.7"/><circle cx="2481" cy="1018" r="5.7"/><circle cx="2628" cy="1347" r="5.7"/><circle cx="2409" cy="884" r="5.7"/><circle cx="2506" cy="1564" r="5.7"/><circle cx="2548" cy="1538" r="5.7"/><circle cx="2528" cy="929" r="5.7"/><circle cx="2446" cy="807" r="5.7"/><circle cx="2478" cy="1012" r="5.7"/><circle cx="2422" cy="1516" r="5.7"/><circle cx="2504" cy="1185" r="5.7"/><circle cx="2485" cy="1109" r="5.7"/><circle cx="2551" cy="1381" r="5.7"/><circle cx="2430" cy="912" r="5.7"/><circle cx="2454" cy="1467" r="5.7"/><circle cx="2515" cy="1303" r="5.7"/><circle cx="2616" cy="1294" r="5.7"/><circle cx="2554" cy="1014" r="5.7"/><circle cx="2636" cy="1522" r="5.7"/><circle cx="2534" cy="1259" r="5.7"/><circle cx="2387" cy="1428" r="5.7"/><circle cx="2416" cy="1150" r="5.7"/><circle cx="2444" cy="995" r="5.7"/><circle cx="2311" cy="1508" r="5.7"/><circle cx="2384" cy="1517" r="5.7"/><circle cx="2704" cy="1358" r="5.7"/><circle cx="2525" cy="820" r="5.7"/><circle cx="2473" cy="775" r="5.7"/><circle cx="2564" cy="1541" r="5.7"/><circle cx="2329" cy="1291" r="5.7"/><circle cx="2367" cy="984" r="5.7"/><circle cx="2658" cy="1548" r="5.7"/><circle cx="2343" cy="1373" r="5.7"/><circle cx="2562" cy="1320" r="5.7"/><circle cx="2347" cy="1212" r="5.7"/><circle cx="2750" cy="1361" r="5.7"/><circle cx="2534" cy="1539" r="5.7"/><circle cx="2516" cy="906" r="5.7"/><circle cx="2520" cy="1252" r="5.7"/><circle cx="2690" cy="1396" r="5.7"/><circle cx="2435" cy="1509" r="5.7"/><circle cx="2444" cy="1186" r="5.7"/><circle cx="2419" cy="1418" r="5.7"/><circle cx="2546" cy="1299" r="5.7"/><circle cx="2566" cy="1163" r="5.7"/><circle cx="2579" cy="1402" r="5.7"/><circle cx="2520" cy="1184" r="5.7"/><circle cx="2236" cy="1527" r="5.7"/><circle cx="2663" cy="1560" r="5.7"/><circle cx="2583" cy="1374" r="5.7"/><circle cx="2569" cy="1453" r="5.7"/><circle cx="2592" cy="1397" r="5.7"/><circle cx="2553" cy="1119" r="5.7"/><circle cx="2560" cy="1515" r="5.7"/><circle cx="2654" cy="1433" r="5.7"/><circle cx="2562" cy="1341" r="5.7"/><circle cx="2611" cy="1416" r="5.7"/><circle cx="2511" cy="972" r="5.7"/><circle cx="2467" cy="1271" r="5.7"/><circle cx="2736" cy="1508" r="5.7"/><circle cx="2451" cy="1117" r="5.7"/><circle cx="2382" cy="914" r="5.7"/><circle cx="2556" cy="1504" r="5.7"/><circle cx="2566" cy="936" r="5.7"/><circle cx="2573" cy="1186" r="5.7"/><circle cx="2426" cy="1390" r="5.7"/><circle cx="2628" cy="1249" r="5.7"/><circle cx="2646" cy="1445" r="5.7"/><circle cx="2458" cy="922" r="5.7"/><circle cx="2380" cy="1360" r="5.7"/><circle cx="2532" cy="1365" r="5.7"/><circle cx="2572" cy="1215" r="5.7"/><circle cx="2669" cy="1544" r="5.7"/><circle cx="2478" cy="1484" r="5.7"/><circle cx="2464" cy="1480" r="5.7"/><circle cx="2454" cy="986" r="5.7"/><circle cx="2492" cy="1269" r="5.7"/><circle cx="2414" cy="1011" r="5.7"/><circle cx="2488" cy="1195" r="5.7"/><circle cx="2494" cy="1327" r="5.7"/><circle cx="2520" cy="1494" r="5.7"/><circle cx="2566" cy="1504" r="5.7"/><circle cx="2406" cy="1348" r="5.7"/><circle cx="2418" cy="862" r="5.7"/><circle cx="2500" cy="1307" r="5.7"/><circle cx="2731" cy="1484" r="5.7"/><circle cx="2512" cy="1391" r="5.7"/><circle cx="2657" cy="1283" r="5.7"/><circle cx="2510" cy="1131" r="5.7"/><circle cx="2490" cy="1222" r="5.7"/><circle cx="2577" cy="1578" r="5.7"/><circle cx="2391" cy="1252" r="5.7"/><circle cx="2596" cy="1478" r="5.7"/><circle cx="2357" cy="836" r="5.7"/><circle cx="2634" cy="1433" r="5.7"/><circle cx="2481" cy="1097" r="5.7"/><circle cx="2506" cy="1261" r="5.7"/><circle cx="2426" cy="1509" r="5.7"/><circle cx="2582" cy="1004" r="5.7"/><circle cx="2579" cy="1406" r="5.7"/><circle cx="2510" cy="1133" r="5.7"/><circle cx="2576" cy="1203" r="5.7"/><circle cx="2386" cy="1411" r="5.7"/><circle cx="2441" cy="1551" r="5.7"/><circle cx="2372" cy="1356" r="5.7"/><circle cx="2562" cy="1553" r="5.7"/><circle cx="2594" cy="1380" r="5.7"/><circle cx="2512" cy="1408" r="5.7"/><circle cx="2517" cy="1349" r="5.7"/><circle cx="2470" cy="1035" r="5.7"/><circle cx="2579" cy="1342" r="5.7"/><circle cx="2451" cy="1209" r="5.7"/><circle cx="2476" cy="1398" r="5.7"/><circle cx="2463" cy="958" r="5.7"/><circle cx="2478" cy="1073" r="5.7"/><circle cx="2450" cy="1264" r="5.7"/><circle cx="2520" cy="1547" r="5.7"/><circle cx="2395" cy="1292" r="5.7"/><circle cx="2486" cy="1090" r="5.7"/><circle cx="2460" cy="1401" r="5.7"/><circle cx="2428" cy="898" r="5.7"/><circle cx="2731" cy="1328" r="5.7"/><circle cx="2534" cy="1488" r="5.7"/><circle cx="2464" cy="1395" r="5.7"/><circle cx="2688" cy="1541" r="5.7"/><circle cx="2397" cy="1566" r="5.7"/><circle cx="2612" cy="1128" r="5.7"/><circle cx="2257" cy="1516" r="5.7"/><circle cx="2366" cy="1546" r="5.7"/><circle cx="2434" cy="1084" r="5.7"/><circle cx="2482" cy="1291" r="5.7"/><circle cx="2581" cy="1066" r="5.7"/><circle cx="2499" cy="920" r="5.7"/><circle cx="2550" cy="1395" r="5.7"/><circle cx="2585" cy="1541" r="5.7"/><circle cx="2293" cy="1240" r="5.7"/><circle cx="2611" cy="1536" r="5.7"/><circle cx="2564" cy="1494" r="5.7"/><circle cx="2462" cy="1264" r="5.7"/><circle cx="2563" cy="1524" r="5.7"/><circle cx="2502" cy="902" r="5.7"/><circle cx="2498" cy="1093" r="5.7"/><circle cx="2656" cy="1529" r="5.7"/><circle cx="2559" cy="1109" r="5.7"/><circle cx="2475" cy="822" r="5.7"/><circle cx="2474" cy="1293" r="5.7"/><circle cx="2534" cy="1325" r="5.7"/><circle cx="2410" cy="1066" r="5.7"/><circle cx="2373" cy="1522" r="5.7"/><circle cx="2551" cy="961" r="5.7"/><circle cx="2471" cy="1382" r="5.7"/><circle cx="2515" cy="1283" r="5.7"/><circle cx="2410" cy="1267" r="5.7"/><circle cx="2508" cy="1491" r="5.7"/><circle cx="2522" cy="1372" r="5.7"/><circle cx="2642" cy="1395" r="5.7"/><circle cx="2397" cy="1339" r="5.7"/><circle cx="2474" cy="1396" r="5.7"/><circle cx="2515" cy="1528" r="5.7"/><circle cx="2512" cy="1028" r="5.7"/><circle cx="2498" cy="819" r="5.7"/><circle cx="2338" cy="930" r="5.7"/><circle cx="2493" cy="1181" r="5.7"/><circle cx="2330" cy="1360" r="5.7"/><circle cx="2632" cy="1310" r="5.7"/><circle cx="2590" cy="1089" r="5.7"/><circle cx="2554" cy="1495" r="5.7"/><circle cx="2670" cy="1523" r="5.7"/><circle cx="2383" cy="1044" r="5.7"/><circle cx="2466" cy="1486" r="5.7"/><circle cx="2637" cy="1554" r="5.7"/><circle cx="2386" cy="758" r="5.7"/><circle cx="2449" cy="1520" r="5.7"/><circle cx="2511" cy="1332" r="5.7"/><circle cx="2700" cy="1435" r="5.7"/><circle cx="2676" cy="1376" r="5.7"/><circle cx="2541" cy="1278" r="5.7"/><circle cx="2533" cy="1201" r="5.7"/><circle cx="2512" cy="961" r="5.7"/><circle cx="2541" cy="1486" r="5.7"/><circle cx="2561" cy="1209" r="5.7"/><circle cx="2328" cy="1142" r="5.7"/><circle cx="2526" cy="1224" r="5.7"/><circle cx="2543" cy="1505" r="5.7"/><circle cx="2474" cy="1144" r="5.7"/><circle cx="2638" cy="1553" r="5.7"/><circle cx="2531" cy="891" r="5.7"/><circle cx="2535" cy="812" r="5.7"/><circle cx="2646" cy="1054" r="5.7"/><circle cx="2514" cy="1345" r="5.7"/><circle cx="2399" cy="1285" r="5.7"/><circle cx="2522" cy="1383" r="5.7"/><circle cx="2600" cy="1360" r="5.7"/><circle cx="2648" cy="1194" r="5.7"/><circle cx="2488" cy="1039" r="5.7"/><circle cx="2529" cy="930" r="5.7"/><circle cx="2505" cy="970" r="5.7"/><circle cx="2409" cy="1307" r="5.7"/><circle cx="2388" cy="835" r="5.7"/><circle cx="2531" cy="1556" r="5.7"/><circle cx="2181" cy="1247" r="5.7"/><circle cx="2537" cy="1198" r="5.7"/><circle cx="2500" cy="1370" r="5.7"/><circle cx="2462" cy="1125" r="5.7"/><circle cx="2574" cy="1333" r="5.7"/><circle cx="2543" cy="1227" r="5.7"/><circle cx="2610" cy="1564" r="5.7"/><circle cx="2435" cy="1551" r="5.7"/><circle cx="2578" cy="1372" r="5.7"/><circle cx="2542" cy="1525" r="5.7"/><circle cx="2626" cy="1464" r="5.7"/><circle cx="2562" cy="1557" r="5.7"/><circle cx="2545" cy="1520" r="5.7"/><circle cx="2575" cy="1530" r="5.7"/><circle cx="2388" cy="1526" r="5.7"/><circle cx="2465" cy="1157" r="5.7"/><circle cx="2510" cy="1512" r="5.7"/><circle cx="2627" cy="1388" r="5.7"/><circle cx="2564" cy="1124" r="5.7"/><circle cx="2580" cy="1162" r="5.7"/><circle cx="2437" cy="1529" r="5.7"/><circle cx="2421" cy="1085" r="5.7"/><circle cx="2451" cy="1348" r="5.7"/><circle cx="2480" cy="1047" r="5.7"/><circle cx="2611" cy="1569" r="5.7"/><circle cx="2433" cy="1203" r="5.7"/><circle cx="2405" cy="1012" r="5.7"/><circle cx="2252" cy="1390" r="5.7"/><circle cx="2476" cy="884" r="5.7"/><circle cx="2641" cy="1466" r="5.7"/><circle cx="2384" cy="1332" r="5.7"/><circle cx="2594" cy="1338" r="5.7"/><circle cx="2505" cy="1218" r="5.7"/><circle cx="2490" cy="1209" r="5.7"/><circle cx="2443" cy="1024" r="5.7"/><circle cx="2505" cy="1148" r="5.7"/><circle cx="2611" cy="1541" r="5.7"/><circle cx="2626" cy="1242" r="5.7"/><circle cx="2642" cy="1390" r="5.7"/><circle cx="2349" cy="1487" r="5.7"/><circle cx="2730" cy="1553" r="5.7"/><circle cx="2294" cy="1494" r="5.7"/><circle cx="2456" cy="1021" r="5.7"/><circle cx="2598" cy="1263" r="5.7"/><circle cx="2474" cy="983" r="5.7"/><circle cx="2575" cy="1219" r="5.7"/><circle cx="2434" cy="1070" r="5.7"/><circle cx="2569" cy="982" r="5.7"/><circle cx="2677" cy="1551" r="5.7"/><circle cx="2357" cy="1347" r="5.7"/><circle cx="2608" cy="1366" r="5.7"/><circle cx="2644" cy="1239" r="5.7"/><circle cx="2668" cy="1521" r="5.7"/><circle cx="2214" cy="1348" r="5.7"/><circle cx="2568" cy="1546" r="5.7"/><circle cx="2608" cy="1156" r="5.7"/><circle cx="2504" cy="1464" r="5.7"/><circle cx="2568" cy="1544" r="5.7"/><circle cx="2657" cy="1559" r="5.7"/><circle cx="2530" cy="1228" r="5.7"/><circle cx="2556" cy="1498" r="5.7"/><circle cx="2580" cy="1076" r="5.7"/><circle cx="2533" cy="1244" r="5.7"/><circle cx="2553" cy="1550" r="5.7"/><circle cx="2677" cy="1504" r="5.7"/><circle cx="2514" cy="1353" r="5.7"/><circle cx="2563" cy="1424" r="5.7"/><circle cx="2380" cy="997" r="5.7"/><circle cx="2517" cy="898" r="5.7"/><circle cx="2295" cy="1217" r="5.7"/><circle cx="2523" cy="1481" r="5.7"/><circle cx="2549" cy="1368" r="5.7"/><circle cx="2518" cy="1479" r="5.7"/><circle cx="2499" cy="894" r="5.7"/><circle cx="2613" cy="943" r="5.7"/><circle cx="2331" cy="1004" r="5.7"/><circle cx="2507" cy="1560" r="5.7"/><circle cx="2587" cy="1267" r="5.7"/><circle cx="2505" cy="1298" r="5.7"/><circle cx="2608" cy="1063" r="5.7"/><circle cx="2576" cy="1202" r="5.7"/><circle cx="2576" cy="1162" r="5.7"/><circle cx="2596" cy="1487" r="5.7"/><circle cx="2702" cy="1561" r="5.7"/><circle cx="2748" cy="1568" r="5.7"/><circle cx="2383" cy="1040" r="5.7"/><circle cx="2375" cy="1548" r="5.7"/><circle cx="2205" cy="1175" r="5.7"/><circle cx="2448" cy="905" r="5.7"/><circle cx="2560" cy="1193" r="5.7"/><circle cx="2427" cy="920" r="5.7"/><circle cx="2436" cy="964" r="5.7"/><circle cx="2720" cy="1502" r="5.7"/><circle cx="2662" cy="1176" r="5.7"/><circle cx="2565" cy="1444" r="5.7"/><circle cx="2335" cy="1487" r="5.7"/><circle cx="2197" cy="1182" r="5.7"/><circle cx="2586" cy="1165" r="5.7"/><circle cx="2493" cy="1534" r="5.7"/><circle cx="2492" cy="1302" r="5.7"/><circle cx="2657" cy="1379" r="5.7"/><circle cx="2532" cy="1465" r="5.7"/><circle cx="2422" cy="1122" r="5.7"/><circle cx="2431" cy="1435" r="5.7"/><circle cx="2515" cy="1244" r="5.7"/><circle cx="2503" cy="1190" r="5.7"/><circle cx="2722" cy="1474" r="5.7"/><circle cx="2501" cy="816" r="5.7"/><circle cx="2337" cy="1242" r="5.7"/><circle cx="2470" cy="1075" r="5.7"/><circle cx="2598" cy="1143" r="5.7"/><circle cx="2528" cy="1127" r="5.7"/><circle cx="2494" cy="725" r="5.7"/><circle cx="2505" cy="1170" r="5.7"/><circle cx="2487" cy="852" r="5.7"/><circle cx="2411" cy="1544" r="5.7"/><circle cx="2505" cy="744" r="5.7"/><circle cx="2348" cy="1372" r="5.7"/><circle cx="2408" cy="852" r="5.7"/><circle cx="2584" cy="1410" r="5.7"/><circle cx="2460" cy="1492" r="5.7"/><circle cx="2652" cy="1535" r="5.7"/><circle cx="2486" cy="1184" r="5.7"/><circle cx="2432" cy="875" r="5.7"/><circle cx="2468" cy="1307" r="5.7"/><circle cx="2443" cy="1375" r="5.7"/><circle cx="2583" cy="1200" r="5.7"/><circle cx="2476" cy="1176" r="5.7"/><circle cx="2500" cy="1307" r="5.7"/><circle cx="2463" cy="1190" r="5.7"/><circle cx="2382" cy="1445" r="5.7"/><circle cx="2327" cy="1428" r="5.7"/><circle cx="2753" cy="1409" r="5.7"/><circle cx="2597" cy="1544" r="5.7"/><circle cx="2416" cy="1319" r="5.7"/><circle cx="2602" cy="1517" r="5.7"/><circle cx="2529" cy="963" r="5.7"/><circle cx="2514" cy="1457" r="5.7"/><circle cx="2372" cy="1260" r="5.7"/><circle cx="2507" cy="1214" r="5.7"/><circle cx="2455" cy="1558" r="5.7"/><circle cx="2498" cy="1507" r="5.7"/><circle cx="2414" cy="877" r="5.7"/><circle cx="2455" cy="1485" r="5.7"/><circle cx="2476" cy="974" r="5.7"/><circle cx="2458" cy="919" r="5.7"/><circle cx="2567" cy="1386" r="5.7"/><circle cx="2577" cy="1326" r="5.7"/><circle cx="2442" cy="1429" r="5.7"/><circle cx="2524" cy="1295" r="5.7"/><circle cx="2504" cy="1257" r="5.7"/><circle cx="2420" cy="1118" r="5.7"/><circle cx="2577" cy="1534" r="5.7"/><circle cx="2464" cy="936" r="5.7"/><circle cx="2371" cy="738" r="5.7"/><circle cx="2743" cy="1356" r="5.7"/><circle cx="2495" cy="1120" r="5.7"/><circle cx="2410" cy="1363" r="5.7"/><circle cx="2472" cy="1314" r="5.7"/><circle cx="2502" cy="1146" r="5.7"/><circle cx="2573" cy="1203" r="5.7"/><circle cx="2522" cy="1206" r="5.7"/><circle cx="2558" cy="1254" r="5.7"/><circle cx="2413" cy="848" r="5.7"/><circle cx="2740" cy="1396" r="5.7"/><circle cx="2608" cy="1471" r="5.7"/><circle cx="2506" cy="1294" r="5.7"/><circle cx="2378" cy="934" r="5.7"/><circle cx="2440" cy="1540" r="5.7"/><circle cx="2422" cy="870" r="5.7"/><circle cx="2489" cy="1132" r="5.7"/><circle cx="2539" cy="1521" r="5.7"/><circle cx="2448" cy="1303" r="5.7"/><circle cx="2366" cy="1137" r="5.7"/><circle cx="2511" cy="1362" r="5.7"/><circle cx="2626" cy="1214" r="5.7"/><circle cx="2442" cy="983" r="5.7"/><circle cx="2429" cy="1389" r="5.7"/><circle cx="2439" cy="1330" r="5.7"/><circle cx="2414" cy="908" r="5.7"/><circle cx="2399" cy="1385" r="5.7"/><circle cx="2408" cy="1482" r="5.7"/><circle cx="2307" cy="1144" r="5.7"/><circle cx="2426" cy="1553" r="5.7"/><circle cx="2531" cy="1010" r="5.7"/><circle cx="2566" cy="1514" r="5.7"/><circle cx="2687" cy="1540" r="5.7"/><circle cx="2491" cy="958" r="5.7"/><circle cx="2532" cy="1424" r="5.7"/><circle cx="2603" cy="1392" r="5.7"/><circle cx="2459" cy="1538" r="5.7"/><circle cx="2368" cy="1022" r="5.7"/><circle cx="2304" cy="1069" r="5.7"/><circle cx="2584" cy="1572" r="5.7"/><circle cx="2578" cy="1539" r="5.7"/><circle cx="2477" cy="985" r="5.7"/><circle cx="2612" cy="1396" r="5.7"/><circle cx="2422" cy="808" r="5.7"/><circle cx="2540" cy="1420" r="5.7"/><circle cx="2509" cy="1361" r="5.7"/><circle cx="2454" cy="1075" r="5.7"/><circle cx="2602" cy="1409" r="5.7"/><circle cx="2507" cy="1504" r="5.7"/><circle cx="2656" cy="1426" r="5.7"/><circle cx="2654" cy="1546" r="5.7"/><circle cx="2614" cy="1339" r="5.7"/><circle cx="2381" cy="790" r="5.7"/><circle cx="2426" cy="883" r="5.7"/><circle cx="2485" cy="1277" r="5.7"/><circle cx="2546" cy="1265" r="5.7"/><circle cx="2597" cy="1514" r="5.7"/><circle cx="2582" cy="1558" r="5.7"/><circle cx="2468" cy="1486" r="5.7"/><circle cx="2456" cy="1190" r="5.7"/><circle cx="2571" cy="1465" r="5.7"/><circle cx="2489" cy="757" r="5.7"/><circle cx="2649" cy="1562" r="5.7"/><circle cx="2475" cy="1349" r="5.7"/><circle cx="2439" cy="1094" r="5.7"/><circle cx="2440" cy="942" r="5.7"/><circle cx="2494" cy="1476" r="5.7"/><circle cx="2733" cy="1483" r="5.7"/><circle cx="2522" cy="1089" r="5.7"/><circle cx="2692" cy="1343" r="5.7"/><circle cx="2461" cy="1010" r="5.7"/><circle cx="2505" cy="1318" r="5.7"/><circle cx="2343" cy="1074" r="5.7"/><circle cx="2348" cy="1333" r="5.7"/><circle cx="2546" cy="918" r="5.7"/><circle cx="2323" cy="1421" r="5.7"/><circle cx="2711" cy="1393" r="5.7"/><circle cx="2606" cy="870" r="5.7"/><circle cx="2268" cy="1111" r="5.7"/><circle cx="2524" cy="1189" r="5.7"/><circle cx="2595" cy="1300" r="5.7"/><circle cx="2545" cy="979" r="5.7"/><circle cx="2639" cy="1191" r="5.7"/><circle cx="2392" cy="1130" r="5.7"/><circle cx="2586" cy="1436" r="5.7"/><circle cx="2442" cy="1016" r="5.7"/><circle cx="2581" cy="1568" r="5.7"/><circle cx="2488" cy="1038" r="5.7"/><circle cx="2373" cy="1447" r="5.7"/><circle cx="2726" cy="1363" r="5.7"/><circle cx="2487" cy="1326" r="5.7"/><circle cx="2496" cy="1153" r="5.7"/><circle cx="2538" cy="1433" r="5.7"/><circle cx="2492" cy="890" r="5.7"/><circle cx="2757" cy="1301" r="5.7"/><circle cx="2497" cy="958" r="5.7"/><circle cx="2368" cy="1509" r="5.7"/><circle cx="2401" cy="1291" r="5.7"/><circle cx="2593" cy="1148" r="5.7"/><circle cx="2338" cy="1277" r="5.7"/><circle cx="2540" cy="1032" r="5.7"/><circle cx="2477" cy="1162" r="5.7"/><circle cx="2597" cy="1121" r="5.7"/><circle cx="2380" cy="896" r="5.7"/><circle cx="2618" cy="1208" r="5.7"/><circle cx="2706" cy="1293" r="5.7"/><circle cx="2557" cy="1032" r="5.7"/><circle cx="2651" cy="1485" r="5.7"/><circle cx="2382" cy="1349" r="5.7"/><circle cx="2589" cy="1346" r="5.7"/><circle cx="2425" cy="1421" r="5.7"/><circle cx="2537" cy="1530" r="5.7"/><circle cx="2536" cy="1372" r="5.7"/><circle cx="2397" cy="1030" r="5.7"/><circle cx="2624" cy="1235" r="5.7"/><circle cx="2623" cy="1533" r="5.7"/><circle cx="2464" cy="1321" r="5.7"/><circle cx="2702" cy="1493" r="5.7"/><circle cx="2346" cy="1441" r="5.7"/><circle cx="2480" cy="1536" r="5.7"/><circle cx="2405" cy="1255" r="5.7"/><circle cx="2464" cy="1398" r="5.7"/><circle cx="2631" cy="1532" r="5.7"/><circle cx="2488" cy="1077" r="5.7"/><circle cx="2477" cy="1365" r="5.7"/><circle cx="2506" cy="1334" r="5.7"/><circle cx="2630" cy="1536" r="5.7"/><circle cx="2609" cy="1246" r="5.7"/><circle cx="2478" cy="1570" r="5.7"/><circle cx="2413" cy="1256" r="5.7"/><circle cx="2509" cy="1538" r="5.7"/><circle cx="2549" cy="1424" r="5.7"/><circle cx="2628" cy="1443" r="5.7"/><circle cx="2356" cy="1412" r="5.7"/><circle cx="2509" cy="1573" r="5.7"/><circle cx="2420" cy="1430" r="5.7"/><circle cx="2373" cy="1060" r="5.7"/><circle cx="2479" cy="1346" r="5.7"/><circle cx="2564" cy="1506" r="5.7"/><circle cx="2582" cy="1372" r="5.7"/><circle cx="2224" cy="1547" r="5.7"/><circle cx="2373" cy="1067" r="5.7"/><circle cx="2413" cy="1217" r="5.7"/><circle cx="2528" cy="1232" r="5.7"/><circle cx="2541" cy="1348" r="5.7"/><circle cx="2370" cy="1518" r="5.7"/><circle cx="2437" cy="1293" r="5.7"/><circle cx="2404" cy="1364" r="5.7"/><circle cx="2594" cy="1403" r="5.7"/><circle cx="2512" cy="998" r="5.7"/><circle cx="2275" cy="1427" r="5.7"/><circle cx="2630" cy="1397" r="5.7"/><circle cx="2433" cy="1372" r="5.7"/><circle cx="2470" cy="1066" r="5.7"/><circle cx="2571" cy="1502" r="5.7"/><circle cx="2438" cy="1540" r="5.7"/><circle cx="2417" cy="856" r="5.7"/><circle cx="2585" cy="1570" r="5.7"/><circle cx="2532" cy="1273" r="5.7"/><circle cx="2440" cy="762" r="5.7"/><circle cx="2544" cy="1206" r="5.7"/><circle cx="2456" cy="1117" r="5.7"/><circle cx="2589" cy="1522" r="5.7"/><circle cx="2579" cy="1251" r="5.7"/><circle cx="2517" cy="1237" r="5.7"/><circle cx="2630" cy="1558" r="5.7"/><circle cx="2660" cy="1564" r="5.7"/><circle cx="2542" cy="1420" r="5.7"/><circle cx="2654" cy="1577" r="5.7"/><circle cx="2356" cy="1458" r="5.7"/><circle cx="2537" cy="982" r="5.7"/><circle cx="2638" cy="1522" r="5.7"/><circle cx="2597" cy="1253" r="5.7"/><circle cx="2359" cy="1357" r="5.7"/><circle cx="2372" cy="866" r="5.7"/><circle cx="2555" cy="1382" r="5.7"/><circle cx="2515" cy="1197" r="5.7"/><circle cx="2560" cy="1541" r="5.7"/><circle cx="2425" cy="1456" r="5.7"/><circle cx="2421" cy="973" r="5.7"/><circle cx="2553" cy="1417" r="5.7"/><circle cx="2428" cy="974" r="5.7"/><circle cx="2578" cy="1435" r="5.7"/><circle cx="2473" cy="836" r="5.7"/><circle cx="2675" cy="1555" r="5.7"/><circle cx="2510" cy="1344" r="5.7"/><circle cx="2511" cy="1325" r="5.7"/><circle cx="2388" cy="1433" r="5.7"/><circle cx="2563" cy="1497" r="5.7"/><circle cx="2605" cy="1394" r="5.7"/><circle cx="2430" cy="1299" r="5.7"/><circle cx="2609" cy="1559" r="5.7"/><circle cx="2558" cy="1272" r="5.7"/><circle cx="2497" cy="1166" r="5.7"/><circle cx="2543" cy="1489" r="5.7"/><circle cx="2563" cy="1405" r="5.7"/><circle cx="2397" cy="1184" r="5.7"/><circle cx="2498" cy="856" r="5.7"/><circle cx="2189" cy="1494" r="5.7"/><circle cx="2472" cy="1560" r="5.7"/><circle cx="2563" cy="1520" r="5.7"/><circle cx="2396" cy="1248" r="5.7"/><circle cx="2573" cy="1517" r="5.7"/><circle cx="2444" cy="1251" r="5.7"/><circle cx="2201" cy="1425" r="5.7"/><circle cx="2520" cy="1184" r="5.7"/><circle cx="2545" cy="1405" r="5.7"/><circle cx="2535" cy="1136" r="5.7"/><circle cx="2379" cy="1378" r="5.7"/><circle cx="2567" cy="1408" r="5.7"/><circle cx="2559" cy="1208" r="5.7"/><circle cx="2515" cy="1465" r="5.7"/><circle cx="2543" cy="1180" r="5.7"/><circle cx="2529" cy="1266" r="5.7"/><circle cx="2332" cy="1539" r="5.7"/><circle cx="2450" cy="958" r="5.7"/><circle cx="2541" cy="1563" r="5.7"/><circle cx="2373" cy="1138" r="5.7"/><circle cx="2427" cy="1304" r="5.7"/><circle cx="2571" cy="1001" r="5.7"/><circle cx="2482" cy="1011" r="5.7"/><circle cx="2502" cy="1077" r="5.7"/><circle cx="2487" cy="1440" r="5.7"/><circle cx="2521" cy="1200" r="5.7"/><circle cx="2549" cy="1237" r="5.7"/><circle cx="2554" cy="1331" r="5.7"/><circle cx="2625" cy="1304" r="5.7"/><circle cx="2509" cy="1248" r="5.7"/><circle cx="2466" cy="751" r="5.7"/><circle cx="2631" cy="1296" r="5.7"/><circle cx="2496" cy="1078" r="5.7"/><circle cx="2695" cy="1311" r="5.7"/><circle cx="2624" cy="1240" r="5.7"/><circle cx="2399" cy="1491" r="5.7"/><circle cx="2461" cy="911" r="5.7"/><circle cx="2519" cy="1096" r="5.7"/><circle cx="2252" cy="1571" r="5.7"/><circle cx="2527" cy="1131" r="5.7"/><circle cx="2349" cy="1548" r="5.7"/><circle cx="2386" cy="1161" r="5.7"/><circle cx="2608" cy="1330" r="5.7"/><circle cx="2609" cy="1331" r="5.7"/><circle cx="2438" cy="1248" r="5.7"/><circle cx="2533" cy="1561" r="5.7"/><circle cx="2432" cy="753" r="5.7"/><circle cx="2367" cy="997" r="5.7"/><circle cx="2348" cy="707" r="5.7"/><circle cx="2457" cy="772" r="5.7"/><circle cx="2481" cy="1549" r="5.7"/><circle cx="2557" cy="1343" r="5.7"/><circle cx="2747" cy="1497" r="5.7"/><circle cx="2425" cy="1451" r="5.7"/><circle cx="2371" cy="1504" r="5.7"/><circle cx="2578" cy="1282" r="5.7"/><circle cx="2432" cy="890" r="5.7"/><circle cx="2688" cy="1571" r="5.7"/><circle cx="2438" cy="1257" r="5.7"/><circle cx="2588" cy="1281" r="5.7"/><circle cx="2649" cy="1569" r="5.7"/><circle cx="2519" cy="1170" r="5.7"/><circle cx="2478" cy="1132" r="5.7"/><circle cx="2617" cy="1223" r="5.7"/><circle cx="2547" cy="956" r="5.7"/><circle cx="2656" cy="1396" r="5.7"/><circle cx="2491" cy="1510" r="5.7"/><circle cx="2383" cy="1542" r="5.7"/><circle cx="2519" cy="1467" r="5.7"/><circle cx="2456" cy="1485" r="5.7"/><circle cx="2645" cy="1010" r="5.7"/><circle cx="2487" cy="1382" r="5.7"/><circle cx="2566" cy="1527" r="5.7"/><circle cx="2592" cy="1103" r="5.7"/><circle cx="2354" cy="1543" r="5.7"/><circle cx="2488" cy="1397" r="5.7"/><circle cx="2455" cy="1210" r="5.7"/><circle cx="2460" cy="1153" r="5.7"/><circle cx="2568" cy="1386" r="5.7"/><circle cx="2534" cy="1178" r="5.7"/><circle cx="2701" cy="1254" r="5.7"/><circle cx="2444" cy="988" r="5.7"/><circle cx="2566" cy="1107" r="5.7"/><circle cx="2506" cy="1163" r="5.7"/><circle cx="2554" cy="1431" r="5.7"/><circle cx="2304" cy="1377" r="5.7"/><circle cx="2470" cy="771" r="5.7"/><circle cx="2432" cy="920" r="5.7"/><circle cx="2548" cy="1411" r="5.7"/><circle cx="2403" cy="1098" r="5.7"/><circle cx="2495" cy="1245" r="5.7"/><circle cx="2545" cy="1192" r="5.7"/><circle cx="2496" cy="1247" r="5.7"/><circle cx="2351" cy="1552" r="5.7"/><circle cx="2608" cy="1522" r="5.7"/><circle cx="2391" cy="1235" r="5.7"/><circle cx="2456" cy="1023" r="5.7"/><circle cx="2487" cy="1377" r="5.7"/><circle cx="2504" cy="1539" r="5.7"/><circle cx="2534" cy="1330" r="5.7"/><circle cx="2653" cy="1311" r="5.7"/><circle cx="2377" cy="1171" r="5.7"/><circle cx="2433" cy="1476" r="5.7"/><circle cx="2534" cy="1202" r="5.7"/><circle cx="2337" cy="1299" r="5.7"/><circle cx="2563" cy="1307" r="5.7"/><circle cx="2641" cy="1393" r="5.7"/><circle cx="2572" cy="1027" r="5.7"/><circle cx="2388" cy="1284" r="5.7"/><circle cx="2646" cy="1414" r="5.7"/><circle cx="2403" cy="983" r="5.7"/><circle cx="2508" cy="1391" r="5.7"/><circle cx="2621" cy="1387" r="5.7"/><circle cx="2506" cy="1356" r="5.7"/><circle cx="2394" cy="1245" r="5.7"/><circle cx="2320" cy="1037" r="5.7"/><circle cx="2414" cy="1106" r="5.7"/><circle cx="2402" cy="1327" r="5.7"/><circle cx="2439" cy="896" r="5.7"/><circle cx="2475" cy="1038" r="5.7"/><circle cx="2484" cy="1236" r="5.7"/><circle cx="2655" cy="1220" r="5.7"/><circle cx="2748" cy="1210" r="5.7"/><circle cx="2559" cy="1309" r="5.7"/><circle cx="2505" cy="1522" r="5.7"/><circle cx="2434" cy="1427" r="5.7"/><circle cx="2599" cy="1408" r="5.7"/><circle cx="2613" cy="1539" r="5.7"/><circle cx="2448" cy="1448" r="5.7"/><circle cx="2577" cy="982" r="5.7"/><circle cx="2557" cy="1272" r="5.7"/><circle cx="2398" cy="991" r="5.7"/><circle cx="2472" cy="1386" r="5.7"/><circle cx="2548" cy="1410" r="5.7"/><circle cx="2696" cy="1334" r="5.7"/><circle cx="2373" cy="1504" r="5.7"/><circle cx="2518" cy="1220" r="5.7"/><circle cx="2301" cy="1270" r="5.7"/><circle cx="2512" cy="1399" r="5.7"/><circle cx="2662" cy="1485" r="5.7"/><circle cx="2602" cy="1514" r="5.7"/><circle cx="2465" cy="1561" r="5.7"/><circle cx="2675" cy="1233" r="5.7"/><circle cx="2563" cy="939" r="5.7"/><circle cx="2614" cy="1473" r="5.7"/><circle cx="2638" cy="1175" r="5.7"/><circle cx="2432" cy="1054" r="5.7"/><circle cx="2644" cy="1312" r="5.7"/><circle cx="2500" cy="988" r="5.7"/><circle cx="2638" cy="1441" r="5.7"/><circle cx="2505" cy="1237" r="5.7"/><circle cx="2506" cy="1133" r="5.7"/><circle cx="2631" cy="1577" r="5.7"/><circle cx="2482" cy="790" r="5.7"/><circle cx="2699" cy="1440" r="5.7"/><circle cx="2637" cy="1563" r="5.7"/><circle cx="2508" cy="1215" r="5.7"/><circle cx="2496" cy="1319" r="5.7"/><circle cx="2588" cy="1492" r="5.7"/><circle cx="2371" cy="1547" r="5.7"/><circle cx="2451" cy="1034" r="5.7"/><circle cx="2594" cy="1551" r="5.7"/><circle cx="2513" cy="1413" r="5.7"/><circle cx="2538" cy="1399" r="5.7"/><circle cx="2450" cy="1457" r="5.7"/><circle cx="2456" cy="1158" r="5.7"/><circle cx="2570" cy="1161" r="5.7"/><circle cx="2374" cy="1251" r="5.7"/><circle cx="2566" cy="1115" r="5.7"/><circle cx="2598" cy="1430" r="5.7"/><circle cx="2557" cy="1560" r="5.7"/><circle cx="2533" cy="1159" r="5.7"/><circle cx="2307" cy="1522" r="5.7"/><circle cx="2574" cy="1347" r="5.7"/><circle cx="2437" cy="1117" r="5.7"/><circle cx="2293" cy="1482" r="5.7"/><circle cx="2512" cy="821" r="5.7"/><circle cx="2562" cy="1529" r="5.7"/><circle cx="2632" cy="1440" r="5.7"/><circle cx="2564" cy="1223" r="5.7"/><circle cx="2544" cy="1488" r="5.7"/><circle cx="2403" cy="1050" r="5.7"/><circle cx="2556" cy="1122" r="5.7"/><circle cx="2655" cy="1410" r="5.7"/><circle cx="2366" cy="1562" r="5.7"/><circle cx="2617" cy="1402" r="5.7"/><circle cx="2546" cy="1162" r="5.7"/><circle cx="2337" cy="1175" r="5.7"/><circle cx="2441" cy="1221" r="5.7"/><circle cx="2650" cy="1382" r="5.7"/><circle cx="2740" cy="1419" r="5.7"/><circle cx="2497" cy="800" r="5.7"/><circle cx="2607" cy="1141" r="5.7"/><circle cx="2526" cy="1569" r="5.7"/><circle cx="2499" cy="1553" r="5.7"/><circle cx="2413" cy="1314" r="5.7"/><circle cx="2557" cy="1497" r="5.7"/><circle cx="2603" cy="1516" r="5.7"/><circle cx="2527" cy="1140" r="5.7"/><circle cx="2387" cy="1215" r="5.7"/><circle cx="2512" cy="1519" r="5.7"/><circle cx="2600" cy="1522" r="5.7"/><circle cx="2455" cy="1570" r="5.7"/><circle cx="2581" cy="1417" r="5.7"/><circle cx="2624" cy="1325" r="5.7"/><circle cx="2552" cy="1143" r="5.7"/><circle cx="2562" cy="1468" r="5.7"/><circle cx="2580" cy="1339" r="5.7"/><circle cx="2358" cy="1095" r="5.7"/><circle cx="2239" cy="1170" r="5.7"/><circle cx="2553" cy="1543" r="5.7"/><circle cx="2611" cy="1172" r="5.7"/><circle cx="2553" cy="1174" r="5.7"/><circle cx="2603" cy="1508" r="5.7"/><circle cx="2354" cy="1505" r="5.7"/><circle cx="2589" cy="1353" r="5.7"/><circle cx="2569" cy="1160" r="5.7"/><circle cx="2353" cy="1228" r="5.7"/><circle cx="2324" cy="1412" r="5.7"/><circle cx="2464" cy="1148" r="5.7"/><circle cx="2598" cy="1560" r="5.7"/><circle cx="2439" cy="1268" r="5.7"/><circle cx="2457" cy="1335" r="5.7"/><circle cx="2466" cy="1469" r="5.7"/><circle cx="2248" cy="1047" r="5.7"/><circle cx="2590" cy="1094" r="5.7"/><circle cx="2471" cy="828" r="5.7"/><circle cx="2707" cy="1515" r="5.7"/><circle cx="2500" cy="1181" r="5.7"/><circle cx="2519" cy="844" r="5.7"/><circle cx="2523" cy="1526" r="5.7"/><circle cx="2441" cy="1463" r="5.7"/><circle cx="2631" cy="1295" r="5.7"/><circle cx="2595" cy="1228" r="5.7"/><circle cx="2536" cy="1138" r="5.7"/><circle cx="2527" cy="1544" r="5.7"/><circle cx="2604" cy="1489" r="5.7"/><circle cx="2386" cy="1252" r="5.7"/><circle cx="2551" cy="1303" r="5.7"/><circle cx="2550" cy="1431" r="5.7"/><circle cx="2436" cy="1576" r="5.7"/><circle cx="2465" cy="1077" r="5.7"/><circle cx="2432" cy="1488" r="5.7"/><circle cx="2445" cy="1508" r="5.7"/><circle cx="2530" cy="1092" r="5.7"/><circle cx="2605" cy="1320" r="5.7"/><circle cx="2335" cy="1300" r="5.7"/><circle cx="2242" cy="1407" r="5.7"/><circle cx="2491" cy="909" r="5.7"/><circle cx="2528" cy="1310" r="5.7"/><circle cx="2558" cy="998" r="5.7"/><circle cx="2412" cy="1432" r="5.7"/><circle cx="2336" cy="1200" r="5.7"/><circle cx="2550" cy="1238" r="5.7"/><circle cx="2474" cy="1508" r="5.7"/><circle cx="2585" cy="1540" r="5.7"/><circle cx="2736" cy="1532" r="5.7"/><circle cx="2438" cy="1004" r="5.7"/><circle cx="2700" cy="1511" r="5.7"/><circle cx="2504" cy="884" r="5.7"/><circle cx="2290" cy="1490" r="5.7"/><circle cx="2565" cy="1374" r="5.7"/><circle cx="2401" cy="1133" r="5.7"/><circle cx="2501" cy="892" r="5.7"/><circle cx="2484" cy="1115" r="5.7"/><circle cx="2597" cy="1266" r="5.7"/><circle cx="2297" cy="1101" r="5.7"/><circle cx="2534" cy="1120" r="5.7"/><circle cx="2697" cy="1248" r="5.7"/><circle cx="2601" cy="1271" r="5.7"/><circle cx="2519" cy="1071" r="5.7"/><circle cx="2541" cy="1242" r="5.7"/><circle cx="2370" cy="1344" r="5.7"/><circle cx="2652" cy="1570" r="5.7"/><circle cx="2555" cy="1142" r="5.7"/><circle cx="2722" cy="1547" r="5.7"/><circle cx="2519" cy="1455" r="5.7"/><circle cx="2563" cy="1526" r="5.7"/><circle cx="2499" cy="1127" r="5.7"/><circle cx="2533" cy="1448" r="5.7"/><circle cx="2598" cy="1295" r="5.7"/><circle cx="2512" cy="1305" r="5.7"/><circle cx="2355" cy="1550" r="5.7"/><circle cx="2537" cy="809" r="5.7"/><circle cx="2336" cy="1476" r="5.7"/><circle cx="2321" cy="1458" r="5.7"/><circle cx="2637" cy="1348" r="5.7"/><circle cx="2366" cy="1275" r="5.7"/><circle cx="2456" cy="1231" r="5.7"/><circle cx="2361" cy="1208" r="5.7"/><circle cx="2537" cy="824" r="5.7"/><circle cx="2469" cy="1395" r="5.7"/><circle cx="2371" cy="1188" r="5.7"/><circle cx="2451" cy="1210" r="5.7"/><circle cx="2375" cy="1274" r="5.7"/><circle cx="2518" cy="973" r="5.7"/><circle cx="2284" cy="1482" r="5.7"/><circle cx="2463" cy="1560" r="5.7"/><circle cx="2398" cy="1310" r="5.7"/><circle cx="2478" cy="1079" r="5.7"/><circle cx="2433" cy="1070" r="5.7"/><circle cx="2527" cy="1486" r="5.7"/><circle cx="2522" cy="1178" r="5.7"/><circle cx="2387" cy="1483" r="5.7"/><circle cx="2339" cy="1309" r="5.7"/><circle cx="2444" cy="858" r="5.7"/><circle cx="2508" cy="1246" r="5.7"/><circle cx="2597" cy="1422" r="5.7"/><circle cx="2464" cy="784" r="5.7"/><circle cx="2397" cy="917" r="5.7"/><circle cx="2368" cy="1209" r="5.7"/><circle cx="2481" cy="986" r="5.7"/><circle cx="2470" cy="870" r="5.7"/><circle cx="2552" cy="1188" r="5.7"/><circle cx="2415" cy="1454" r="5.7"/><circle cx="2674" cy="1498" r="5.7"/><circle cx="2459" cy="1065" r="5.7"/><circle cx="2454" cy="904" r="5.7"/><circle cx="2396" cy="1298" r="5.7"/><circle cx="2630" cy="1149" r="5.7"/><circle cx="2588" cy="1344" r="5.7"/><circle cx="2614" cy="1194" r="5.7"/><circle cx="2468" cy="993" r="5.7"/><circle cx="2503" cy="1306" r="5.7"/><circle cx="2475" cy="1172" r="5.7"/><circle cx="2435" cy="1394" r="5.7"/><circle cx="2524" cy="1290" r="5.7"/><circle cx="2528" cy="1251" r="5.7"/><circle cx="2399" cy="1203" r="5.7"/><circle cx="2507" cy="1564" r="5.7"/><circle cx="2584" cy="1330" r="5.7"/><circle cx="2444" cy="1421" r="5.7"/><circle cx="2441" cy="1289" r="5.7"/><circle cx="2269" cy="1553" r="5.7"/><circle cx="2496" cy="1572" r="5.7"/><circle cx="2622" cy="1565" r="5.7"/><circle cx="2395" cy="1257" r="5.7"/><circle cx="2566" cy="1504" r="5.7"/><circle cx="2689" cy="1455" r="5.7"/><circle cx="2441" cy="1241" r="5.7"/><circle cx="2590" cy="1419" r="5.7"/><circle cx="2349" cy="1569" r="5.7"/><circle cx="2564" cy="1440" r="5.7"/><circle cx="2613" cy="1323" r="5.7"/><circle cx="2530" cy="1161" r="5.7"/><circle cx="2458" cy="1137" r="5.7"/><circle cx="2379" cy="1555" r="5.7"/><circle cx="2572" cy="1493" r="5.7"/><circle cx="2323" cy="1529" r="5.7"/><circle cx="2755" cy="1554" r="5.7"/><circle cx="2495" cy="1516" r="5.7"/><circle cx="2535" cy="995" r="5.7"/><circle cx="2542" cy="1427" r="5.7"/><circle cx="2477" cy="817" r="5.7"/><circle cx="2316" cy="1186" r="5.7"/><circle cx="2482" cy="1267" r="5.7"/><circle cx="2591" cy="1520" r="5.7"/><circle cx="2358" cy="866" r="5.7"/><circle cx="2555" cy="1472" r="5.7"/><circle cx="2454" cy="801" r="5.7"/><circle cx="2572" cy="1004" r="5.7"/><circle cx="2576" cy="1570" r="5.7"/><circle cx="2592" cy="1083" r="5.7"/><circle cx="2474" cy="1262" r="5.7"/><circle cx="2479" cy="1029" r="5.7"/><circle cx="2572" cy="1573" r="5.7"/><circle cx="2516" cy="1212" r="5.7"/><circle cx="2301" cy="1044" r="5.7"/><circle cx="2459" cy="1018" r="5.7"/><circle cx="2555" cy="1461" r="5.7"/><circle cx="2554" cy="1545" r="5.7"/><circle cx="2439" cy="1193" r="5.7"/><circle cx="2534" cy="1526" r="5.7"/><circle cx="2730" cy="1403" r="5.7"/><circle cx="2471" cy="873" r="5.7"/><circle cx="2463" cy="982" r="5.7"/><circle cx="2414" cy="1153" r="5.7"/><circle cx="2413" cy="1550" r="5.7"/><circle cx="2540" cy="1106" r="5.7"/><circle cx="2395" cy="1431" r="5.7"/><circle cx="2397" cy="1309" r="5.7"/><circle cx="2356" cy="884" r="5.7"/><circle cx="2342" cy="1377" r="5.7"/><circle cx="2444" cy="1512" r="5.7"/><circle cx="2549" cy="1296" r="5.7"/><circle cx="2342" cy="1228" r="5.7"/><circle cx="2389" cy="1530" r="5.7"/><circle cx="2345" cy="1299" r="5.7"/><circle cx="2575" cy="1521" r="5.7"/><circle cx="2588" cy="1526" r="5.7"/><circle cx="2472" cy="1516" r="5.7"/><circle cx="2453" cy="1375" r="5.7"/><circle cx="2565" cy="1205" r="5.7"/><circle cx="2552" cy="1419" r="5.7"/><circle cx="2383" cy="1122" r="5.7"/><circle cx="2612" cy="1060" r="5.7"/><circle cx="2417" cy="1350" r="5.7"/><circle cx="2570" cy="1328" r="5.7"/><circle cx="2562" cy="1044" r="5.7"/><circle cx="2323" cy="1160" r="5.7"/><circle cx="2724" cy="1566" r="5.7"/><circle cx="2490" cy="1329" r="5.7"/><circle cx="2431" cy="1362" r="5.7"/><circle cx="2467" cy="971" r="5.7"/><circle cx="2497" cy="1428" r="5.7"/><circle cx="2584" cy="1551" r="5.7"/><circle cx="2293" cy="1360" r="5.7"/><circle cx="2628" cy="1366" r="5.7"/><circle cx="2498" cy="1037" r="5.7"/><circle cx="2436" cy="1379" r="5.7"/><circle cx="2491" cy="1429" r="5.7"/><circle cx="2438" cy="1017" r="5.7"/><circle cx="2437" cy="1110" r="5.7"/><circle cx="2397" cy="1079" r="5.7"/><circle cx="2509" cy="1077" r="5.7"/><circle cx="2555" cy="1528" r="5.7"/><circle cx="2532" cy="1339" r="5.7"/><circle cx="2477" cy="995" r="5.7"/><circle cx="2415" cy="1527" r="5.7"/><circle cx="2498" cy="1567" r="5.7"/><circle cx="2634" cy="1345" r="5.7"/><circle cx="2592" cy="1576" r="5.7"/><circle cx="2510" cy="1502" r="5.7"/><circle cx="2442" cy="1136" r="5.7"/><circle cx="2482" cy="1221" r="5.7"/><circle cx="2385" cy="1420" r="5.7"/><circle cx="2455" cy="1001" r="5.7"/><circle cx="2414" cy="1021" r="5.7"/><circle cx="2460" cy="1563" r="5.7"/><circle cx="2420" cy="816" r="5.7"/><circle cx="2586" cy="1394" r="5.7"/><circle cx="2417" cy="1284" r="5.7"/><circle cx="2490" cy="1155" r="5.7"/><circle cx="2676" cy="1161" r="5.7"/><circle cx="2370" cy="1242" r="5.7"/><circle cx="2570" cy="1510" r="5.7"/><circle cx="2340" cy="1377" r="5.7"/><circle cx="2433" cy="1442" r="5.7"/><circle cx="2537" cy="1234" r="5.7"/><circle cx="2618" cy="1236" r="5.7"/><circle cx="2426" cy="1317" r="5.7"/><circle cx="2537" cy="1407" r="5.7"/><circle cx="2414" cy="1445" r="5.7"/><circle cx="2459" cy="1474" r="5.7"/><circle cx="2518" cy="1295" r="5.7"/><circle cx="2481" cy="1196" r="5.7"/><circle cx="2662" cy="1400" r="5.7"/><circle cx="2410" cy="1383" r="5.7"/><circle cx="2427" cy="1505" r="5.7"/><circle cx="2676" cy="1383" r="5.7"/><circle cx="2583" cy="1275" r="5.7"/><circle cx="2636" cy="1244" r="5.7"/><circle cx="2576" cy="1561" r="5.7"/><circle cx="2435" cy="1062" r="5.7"/><circle cx="2432" cy="709" r="5.7"/><circle cx="2688" cy="1512" r="5.7"/><circle cx="2343" cy="1152" r="5.7"/><circle cx="2553" cy="1322" r="5.7"/><circle cx="2396" cy="1197" r="5.7"/><circle cx="2342" cy="1560" r="5.7"/><circle cx="2330" cy="1363" r="5.7"/><circle cx="2464" cy="786" r="5.7"/><circle cx="2479" cy="1304" r="5.7"/><circle cx="2500" cy="1039" r="5.7"/><circle cx="2459" cy="1340" r="5.7"/><circle cx="2576" cy="1456" r="5.7"/><circle cx="2577" cy="1102" r="5.7"/><circle cx="2442" cy="1098" r="5.7"/><circle cx="2440" cy="977" r="5.7"/><circle cx="2399" cy="1481" r="5.7"/><circle cx="2644" cy="1534" r="5.7"/><circle cx="2283" cy="979" r="5.7"/><circle cx="2489" cy="883" r="5.7"/><circle cx="2584" cy="1103" r="5.7"/><circle cx="2413" cy="1479" r="5.7"/><circle cx="2535" cy="1082" r="5.7"/><circle cx="2597" cy="1433" r="5.7"/><circle cx="2556" cy="1522" r="5.7"/><circle cx="2338" cy="1296" r="5.7"/><circle cx="2562" cy="1226" r="5.7"/><circle cx="2301" cy="1338" r="5.7"/><circle cx="2423" cy="1282" r="5.7"/><circle cx="2286" cy="1380" r="5.7"/><circle cx="2620" cy="1537" r="5.7"/><circle cx="2530" cy="1261" r="5.7"/><circle cx="2576" cy="1306" r="5.7"/><circle cx="2537" cy="1030" r="5.7"/><circle cx="2472" cy="798" r="5.7"/><circle cx="2378" cy="880" r="5.7"/><circle cx="2506" cy="1487" r="5.7"/><circle cx="2469" cy="1133" r="5.7"/><circle cx="2704" cy="1364" r="5.7"/><circle cx="2418" cy="1424" r="5.7"/><circle cx="2356" cy="1427" r="5.7"/><circle cx="2226" cy="1436" r="5.7"/><circle cx="2546" cy="1138" r="5.7"/><circle cx="2191" cy="1522" r="5.7"/><circle cx="2486" cy="995" r="5.7"/><circle cx="2553" cy="1155" r="5.7"/><circle cx="2327" cy="1372" r="5.7"/><circle cx="2563" cy="1434" r="5.7"/><circle cx="2578" cy="1304" r="5.7"/><circle cx="2280" cy="1475" r="5.7"/><circle cx="2479" cy="1381" r="5.7"/><circle cx="2458" cy="1071" r="5.7"/><circle cx="2392" cy="1356" r="5.7"/><circle cx="2568" cy="1134" r="5.7"/><circle cx="2609" cy="1532" r="5.7"/><circle cx="2576" cy="1514" r="5.7"/><circle cx="2470" cy="1196" r="5.7"/><circle cx="2516" cy="1353" r="5.7"/><circle cx="2415" cy="912" r="5.7"/><circle cx="2538" cy="1373" r="5.7"/><circle cx="2596" cy="1348" r="5.7"/><circle cx="2562" cy="1211" r="5.7"/><circle cx="2501" cy="1363" r="5.7"/><circle cx="2498" cy="1188" r="5.7"/><circle cx="2545" cy="1148" r="5.7"/><circle cx="2535" cy="1574" r="5.7"/><circle cx="2498" cy="1319" r="5.7"/><circle cx="2453" cy="1064" r="5.7"/><circle cx="2530" cy="931" r="5.7"/><circle cx="2323" cy="1571" r="5.7"/><circle cx="2566" cy="1259" r="5.7"/><circle cx="2578" cy="1432" r="5.7"/><circle cx="2488" cy="1412" r="5.7"/><circle cx="2577" cy="1280" r="5.7"/><circle cx="2450" cy="1071" r="5.7"/><circle cx="2479" cy="1078" r="5.7"/><circle cx="2418" cy="717" r="5.7"/><circle cx="2511" cy="1245" r="5.7"/><circle cx="2614" cy="1317" r="5.7"/><circle cx="2450" cy="1444" r="5.7"/><circle cx="2458" cy="1512" r="5.7"/><circle cx="2454" cy="1170" r="5.7"/><circle cx="2660" cy="1436" r="5.7"/><circle cx="2455" cy="1240" r="5.7"/><circle cx="2529" cy="1260" r="5.7"/><circle cx="2476" cy="884" r="5.7"/><circle cx="2660" cy="1486" r="5.7"/><circle cx="2430" cy="1542" r="5.7"/><circle cx="2531" cy="1340" r="5.7"/><circle cx="2262" cy="1431" r="5.7"/><circle cx="2307" cy="1301" r="5.7"/><circle cx="2596" cy="1366" r="5.7"/><circle cx="2570" cy="1301" r="5.7"/><circle cx="2530" cy="1072" r="5.7"/><circle cx="2623" cy="1410" r="5.7"/><circle cx="2377" cy="918" r="5.7"/><circle cx="2433" cy="1137" r="5.7"/><circle cx="2681" cy="1533" r="5.7"/><circle cx="2602" cy="1441" r="5.7"/><circle cx="2367" cy="1466" r="5.7"/><circle cx="2437" cy="1388" r="5.7"/><circle cx="2537" cy="1492" r="5.7"/><circle cx="2451" cy="1270" r="5.7"/><circle cx="2471" cy="1146" r="5.7"/><circle cx="2568" cy="1513" r="5.7"/><circle cx="2340" cy="1383" r="5.7"/><circle cx="2544" cy="857" r="5.7"/><circle cx="2484" cy="1267" r="5.7"/><circle cx="2455" cy="876" r="5.7"/><circle cx="2482" cy="1321" r="5.7"/><circle cx="2423" cy="1401" r="5.7"/><circle cx="2606" cy="1481" r="5.7"/><circle cx="2685" cy="1566" r="5.7"/><circle cx="2515" cy="1214" r="5.7"/><circle cx="2500" cy="976" r="5.7"/><circle cx="2523" cy="904" r="5.7"/><circle cx="2310" cy="1444" r="5.7"/><circle cx="2544" cy="1277" r="5.7"/><circle cx="2571" cy="1280" r="5.7"/><circle cx="2414" cy="1442" r="5.7"/><circle cx="2436" cy="1126" r="5.7"/><circle cx="2544" cy="1280" r="5.7"/><circle cx="2720" cy="1397" r="5.7"/><circle cx="2314" cy="1096" r="5.7"/><circle cx="2511" cy="1565" r="5.7"/><circle cx="2600" cy="1507" r="5.7"/><circle cx="2627" cy="1398" r="5.7"/><circle cx="2674" cy="1549" r="5.7"/><circle cx="2608" cy="1393" r="5.7"/><circle cx="2583" cy="1437" r="5.7"/><circle cx="2538" cy="1318" r="5.7"/><circle cx="2532" cy="1012" r="5.7"/><circle cx="2718" cy="1566" r="5.7"/><circle cx="2255" cy="1404" r="5.7"/><circle cx="2503" cy="1194" r="5.7"/><circle cx="2440" cy="1301" r="5.7"/><circle cx="2500" cy="1496" r="5.7"/><circle cx="2344" cy="1507" r="5.7"/><circle cx="2673" cy="1550" r="5.7"/><circle cx="2410" cy="925" r="5.7"/><circle cx="2503" cy="883" r="5.7"/><circle cx="2336" cy="1114" r="5.7"/><circle cx="2420" cy="1002" r="5.7"/><circle cx="2578" cy="1210" r="5.7"/><circle cx="2519" cy="1507" r="5.7"/><circle cx="2474" cy="1413" r="5.7"/><circle cx="2450" cy="853" r="5.7"/><circle cx="2273" cy="1562" r="5.7"/><circle cx="2362" cy="1111" r="5.7"/><circle cx="2667" cy="1464" r="5.7"/><circle cx="2528" cy="897" r="5.7"/><circle cx="2560" cy="1306" r="5.7"/><circle cx="2299" cy="1303" r="5.7"/><circle cx="2448" cy="1366" r="5.7"/><circle cx="2566" cy="1423" r="5.7"/><circle cx="2551" cy="1061" r="5.7"/><circle cx="2461" cy="789" r="5.7"/><circle cx="2484" cy="873" r="5.7"/><circle cx="2383" cy="1324" r="5.7"/><circle cx="2317" cy="1511" r="5.7"/><circle cx="2396" cy="907" r="5.7"/><circle cx="2475" cy="870" r="5.7"/><circle cx="2436" cy="1215" r="5.7"/><circle cx="2499" cy="1196" r="5.7"/><circle cx="2639" cy="1388" r="5.7"/><circle cx="2517" cy="1021" r="5.7"/><circle cx="2343" cy="1574" r="5.7"/><circle cx="2353" cy="1494" r="5.7"/><circle cx="2577" cy="1455" r="5.7"/><circle cx="2592" cy="1451" r="5.7"/><circle cx="2465" cy="1269" r="5.7"/><circle cx="2638" cy="1539" r="5.7"/><circle cx="2508" cy="856" r="5.7"/><circle cx="2447" cy="1238" r="5.7"/><circle cx="2546" cy="1554" r="5.7"/><circle cx="2470" cy="736" r="5.7"/><circle cx="2433" cy="1286" r="5.7"/><circle cx="2498" cy="951" r="5.7"/><circle cx="2499" cy="1347" r="5.7"/><circle cx="2461" cy="1479" r="5.7"/><circle cx="2460" cy="1373" r="5.7"/><circle cx="2554" cy="1065" r="5.7"/><circle cx="2446" cy="1366" r="5.7"/><circle cx="2616" cy="1548" r="5.7"/><circle cx="2440" cy="906" r="5.7"/><circle cx="2557" cy="1451" r="5.7"/><circle cx="2554" cy="1540" r="5.7"/><circle cx="2450" cy="1141" r="5.7"/><circle cx="2564" cy="1259" r="5.7"/><circle cx="2611" cy="1475" r="5.7"/><circle cx="2517" cy="1030" r="5.7"/><circle cx="2336" cy="1328" r="5.7"/><circle cx="2577" cy="1370" r="5.7"/><circle cx="2559" cy="1544" r="5.7"/><circle cx="2317" cy="1274" r="5.7"/><circle cx="2547" cy="904" r="5.7"/><circle cx="2493" cy="1574" r="5.7"/><circle cx="2313" cy="1246" r="5.7"/><circle cx="2577" cy="1560" r="5.7"/><circle cx="2388" cy="1283" r="5.7"/><circle cx="2444" cy="1403" r="5.7"/><circle cx="2518" cy="1143" r="5.7"/><circle cx="2424" cy="841" r="5.7"/><circle cx="2509" cy="991" r="5.7"/><circle cx="2533" cy="1383" r="5.7"/><circle cx="2416" cy="889" r="5.7"/><circle cx="2641" cy="1286" r="5.7"/><circle cx="2476" cy="1106" r="5.7"/><circle cx="2662" cy="1566" r="5.7"/><circle cx="2499" cy="1182" r="5.7"/><circle cx="2427" cy="906" r="5.7"/><circle cx="2409" cy="1349" r="5.7"/><circle cx="2522" cy="1264" r="5.7"/><circle cx="2431" cy="787" r="5.7"/><circle cx="2586" cy="1429" r="5.7"/><circle cx="2456" cy="939" r="5.7"/><circle cx="2495" cy="1417" r="5.7"/><circle cx="2360" cy="1322" r="5.7"/><circle cx="2409" cy="1128" r="5.7"/><circle cx="2526" cy="1356" r="5.7"/><circle cx="2347" cy="1431" r="5.7"/><circle cx="2444" cy="863" r="5.7"/><circle cx="2566" cy="1268" r="5.7"/><circle cx="2461" cy="1453" r="5.7"/><circle cx="2613" cy="1435" r="5.7"/><circle cx="2541" cy="1339" r="5.7"/><circle cx="2306" cy="1233" r="5.7"/><circle cx="2477" cy="1470" r="5.7"/><circle cx="2446" cy="937" r="5.7"/><circle cx="2366" cy="1439" r="5.7"/><circle cx="2464" cy="1068" r="5.7"/><circle cx="2568" cy="1429" r="5.7"/><circle cx="2569" cy="894" r="5.7"/><circle cx="2566" cy="1455" r="5.7"/><circle cx="2556" cy="1441" r="5.7"/><circle cx="2520" cy="1559" r="5.7"/><circle cx="2622" cy="1504" r="5.7"/><circle cx="2555" cy="1438" r="5.7"/><circle cx="2447" cy="1500" r="5.7"/><circle cx="2425" cy="1359" r="5.7"/><circle cx="2541" cy="1182" r="5.7"/><circle cx="2571" cy="1419" r="5.7"/><circle cx="2342" cy="1440" r="5.7"/><circle cx="2236" cy="1391" r="5.7"/><circle cx="2722" cy="1252" r="5.7"/><circle cx="2425" cy="928" r="5.7"/><circle cx="2386" cy="1298" r="5.7"/><circle cx="2430" cy="1165" r="5.7"/><circle cx="2463" cy="1122" r="5.7"/><circle cx="2592" cy="1411" r="5.7"/><circle cx="2365" cy="1090" r="5.7"/><circle cx="2340" cy="1498" r="5.7"/><circle cx="2587" cy="1457" r="5.7"/><circle cx="2603" cy="1374" r="5.7"/><circle cx="2452" cy="1112" r="5.7"/><circle cx="2544" cy="1291" r="5.7"/><circle cx="2504" cy="1085" r="5.7"/><circle cx="2424" cy="1157" r="5.7"/><circle cx="2417" cy="1158" r="5.7"/><circle cx="2556" cy="1306" r="5.7"/><circle cx="2425" cy="1560" r="5.7"/><circle cx="2482" cy="916" r="5.7"/><circle cx="2529" cy="1290" r="5.7"/><circle cx="2281" cy="1342" r="5.7"/><circle cx="2546" cy="987" r="5.7"/><circle cx="2455" cy="1114" r="5.7"/><circle cx="2414" cy="1355" r="5.7"/><circle cx="2421" cy="1202" r="5.7"/><circle cx="2561" cy="1441" r="5.7"/><circle cx="2414" cy="1553" r="5.7"/><circle cx="2508" cy="1203" r="5.7"/><circle cx="2524" cy="1338" r="5.7"/><circle cx="2670" cy="1546" r="5.7"/><circle cx="2420" cy="1199" r="5.7"/><circle cx="2398" cy="1436" r="5.7"/><circle cx="2581" cy="1481" r="5.7"/><circle cx="2376" cy="1294" r="5.7"/><circle cx="2454" cy="1359" r="5.7"/><circle cx="2519" cy="1153" r="5.7"/><circle cx="2571" cy="1567" r="5.7"/><circle cx="2511" cy="1516" r="5.7"/><circle cx="2428" cy="1262" r="5.7"/><circle cx="2326" cy="1383" r="5.7"/><circle cx="2542" cy="1091" r="5.7"/><circle cx="2595" cy="1103" r="5.7"/><circle cx="2434" cy="1214" r="5.7"/><circle cx="2377" cy="1085" r="5.7"/><circle cx="2411" cy="870" r="5.7"/><circle cx="2351" cy="1386" r="5.7"/><circle cx="2406" cy="1323" r="5.7"/><circle cx="2609" cy="1375" r="5.7"/><circle cx="2442" cy="1538" r="5.7"/><circle cx="2380" cy="1281" r="5.7"/><circle cx="2351" cy="1471" r="5.7"/><circle cx="2633" cy="1557" r="5.7"/><circle cx="2463" cy="1004" r="5.7"/><circle cx="2417" cy="1384" r="5.7"/><circle cx="2486" cy="1465" r="5.7"/><circle cx="2582" cy="1408" r="5.7"/><circle cx="2610" cy="1359" r="5.7"/><circle cx="2489" cy="1223" r="5.7"/><circle cx="2544" cy="1529" r="5.7"/><circle cx="2381" cy="1455" r="5.7"/><circle cx="2272" cy="1575" r="5.7"/><circle cx="2378" cy="1537" r="5.7"/><circle cx="2187" cy="990" r="5.7"/><circle cx="2597" cy="1249" r="5.7"/><circle cx="2559" cy="1512" r="5.7"/><circle cx="2673" cy="1206" r="5.7"/><circle cx="2480" cy="878" r="5.7"/><circle cx="2357" cy="1283" r="5.7"/><circle cx="2540" cy="846" r="5.7"/><circle cx="2439" cy="1141" r="5.7"/><circle cx="2561" cy="1542" r="5.7"/><circle cx="2521" cy="1344" r="5.7"/><circle cx="2425" cy="1021" r="5.7"/><circle cx="2381" cy="1167" r="5.7"/><circle cx="2535" cy="1070" r="5.7"/><circle cx="2538" cy="1020" r="5.7"/><circle cx="2474" cy="1479" r="5.7"/><circle cx="2569" cy="1284" r="5.7"/><circle cx="2528" cy="1084" r="5.7"/><circle cx="2345" cy="1360" r="5.7"/><circle cx="2564" cy="1554" r="5.7"/><circle cx="2535" cy="1405" r="5.7"/><circle cx="2627" cy="1382" r="5.7"/><circle cx="2617" cy="1278" r="5.7"/><circle cx="2391" cy="1403" r="5.7"/><circle cx="2455" cy="956" r="5.7"/><circle cx="2572" cy="761" r="5.7"/><circle cx="2485" cy="1157" r="5.7"/><circle cx="2596" cy="1576" r="5.7"/><circle cx="2527" cy="1330" r="5.7"/><circle cx="2431" cy="1444" r="5.7"/><circle cx="2535" cy="1397" r="5.7"/><circle cx="2380" cy="1502" r="5.7"/><circle cx="2555" cy="1487" r="5.7"/><circle cx="2575" cy="1394" r="5.7"/><circle cx="2541" cy="1208" r="5.7"/><circle cx="2340" cy="1122" r="5.7"/><circle cx="2494" cy="1203" r="5.7"/><circle cx="2524" cy="1413" r="5.7"/><circle cx="2354" cy="1468" r="5.7"/><circle cx="2349" cy="1230" r="5.7"/><circle cx="2526" cy="947" r="5.7"/><circle cx="2538" cy="1078" r="5.7"/><circle cx="2536" cy="1194" r="5.7"/><circle cx="2253" cy="1422" r="5.7"/><circle cx="2372" cy="944" r="5.7"/><circle cx="2729" cy="1457" r="5.7"/><circle cx="2465" cy="776" r="5.7"/><circle cx="2424" cy="1438" r="5.7"/><circle cx="2599" cy="1236" r="5.7"/><circle cx="2525" cy="1253" r="5.7"/><circle cx="2414" cy="934" r="5.7"/><circle cx="2506" cy="1359" r="5.7"/><circle cx="2519" cy="1127" r="5.7"/><circle cx="2285" cy="1435" r="5.7"/><circle cx="2523" cy="1291" r="5.7"/><circle cx="2578" cy="1399" r="5.7"/><circle cx="2373" cy="1286" r="5.7"/><circle cx="2682" cy="1569" r="5.7"/><circle cx="2481" cy="1022" r="5.7"/><circle cx="2544" cy="1322" r="5.7"/><circle cx="2390" cy="1375" r="5.7"/><circle cx="2558" cy="1170" r="5.7"/><circle cx="2366" cy="1538" r="5.7"/><circle cx="2454" cy="897" r="5.7"/><circle cx="2568" cy="1373" r="5.7"/><circle cx="2466" cy="916" r="5.7"/><circle cx="2553" cy="1235" r="5.7"/><circle cx="2418" cy="1112" r="5.7"/><circle cx="2491" cy="1294" r="5.7"/><circle cx="2608" cy="1129" r="5.7"/><circle cx="2467" cy="832" r="5.7"/><circle cx="2474" cy="1458" r="5.7"/><circle cx="2573" cy="1476" r="5.7"/><circle cx="2505" cy="1242" r="5.7"/><circle cx="2456" cy="1092" r="5.7"/><circle cx="2470" cy="1529" r="5.7"/><circle cx="2332" cy="1453" r="5.7"/><circle cx="2484" cy="858" r="5.7"/><circle cx="2447" cy="724" r="5.7"/><circle cx="2500" cy="1045" r="5.7"/><circle cx="2583" cy="1327" r="5.7"/><circle cx="2534" cy="1418" r="5.7"/><circle cx="2551" cy="1407" r="5.7"/><circle cx="2472" cy="1250" r="5.7"/><circle cx="2670" cy="1161" r="5.7"/><circle cx="2563" cy="1494" r="5.7"/><circle cx="2482" cy="896" r="5.7"/><circle cx="2316" cy="1338" r="5.7"/><circle cx="2464" cy="1413" r="5.7"/><circle cx="2506" cy="899" r="5.7"/><circle cx="2464" cy="1240" r="5.7"/><circle cx="2485" cy="1000" r="5.7"/><circle cx="2564" cy="1504" r="5.7"/><circle cx="2418" cy="896" r="5.7"/><circle cx="2390" cy="1518" r="5.7"/><circle cx="2454" cy="1542" r="5.7"/><circle cx="2405" cy="1023" r="5.7"/><circle cx="2533" cy="1342" r="5.7"/><circle cx="2472" cy="1282" r="5.7"/><circle cx="2479" cy="1045" r="5.7"/><circle cx="2557" cy="1341" r="5.7"/><circle cx="2393" cy="915" r="5.7"/><circle cx="2489" cy="1440" r="5.7"/><circle cx="2452" cy="1482" r="5.7"/><circle cx="2595" cy="1370" r="5.7"/><circle cx="2574" cy="1328" r="5.7"/><circle cx="2342" cy="1496" r="5.7"/><circle cx="2406" cy="1326" r="5.7"/><circle cx="2652" cy="1544" r="5.7"/><circle cx="2454" cy="1337" r="5.7"/><circle cx="2629" cy="1457" r="5.7"/><circle cx="2413" cy="1366" r="5.7"/><circle cx="2540" cy="1459" r="5.7"/><circle cx="2615" cy="1538" r="5.7"/><circle cx="2608" cy="1148" r="5.7"/><circle cx="2484" cy="1357" r="5.7"/><circle cx="2539" cy="1386" r="5.7"/><circle cx="2445" cy="1496" r="5.7"/><circle cx="2515" cy="1091" r="5.7"/><circle cx="2355" cy="1549" r="5.7"/><circle cx="2572" cy="1500" r="5.7"/><circle cx="2348" cy="1216" r="5.7"/><circle cx="2555" cy="1546" r="5.7"/><circle cx="2550" cy="1332" r="5.7"/><circle cx="2584" cy="1459" r="5.7"/><circle cx="2353" cy="934" r="5.7"/><circle cx="2420" cy="1212" r="5.7"/><circle cx="2618" cy="1277" r="5.7"/><circle cx="2486" cy="1559" r="5.7"/><circle cx="2661" cy="1377" r="5.7"/><circle cx="2581" cy="1270" r="5.7"/><circle cx="2346" cy="1221" r="5.7"/><circle cx="2248" cy="1467" r="5.7"/><circle cx="2462" cy="1386" r="5.7"/><circle cx="2533" cy="1395" r="5.7"/><circle cx="2398" cy="1316" r="5.7"/><circle cx="2590" cy="1498" r="5.7"/><circle cx="2575" cy="1078" r="5.7"/><circle cx="2514" cy="1434" r="5.7"/><circle cx="2487" cy="1115" r="5.7"/><circle cx="2507" cy="1395" r="5.7"/><circle cx="2620" cy="1392" r="5.7"/><circle cx="2647" cy="1532" r="5.7"/><circle cx="2651" cy="1445" r="5.7"/><circle cx="2574" cy="1403" r="5.7"/><circle cx="2672" cy="1474" r="5.7"/><circle cx="2531" cy="1140" r="5.7"/><circle cx="2414" cy="1328" r="5.7"/><circle cx="2508" cy="1022" r="5.7"/><circle cx="2548" cy="1347" r="5.7"/><circle cx="2463" cy="1422" r="5.7"/><circle cx="2538" cy="1549" r="5.7"/><circle cx="2564" cy="1311" r="5.7"/><circle cx="2414" cy="1243" r="5.7"/><circle cx="2444" cy="775" r="5.7"/><circle cx="2669" cy="1519" r="5.7"/><circle cx="2566" cy="883" r="5.7"/><circle cx="2566" cy="1576" r="5.7"/><circle cx="2491" cy="1099" r="5.7"/><circle cx="2560" cy="1253" r="5.7"/><circle cx="2340" cy="1221" r="5.7"/><circle cx="2496" cy="743" r="5.7"/><circle cx="2506" cy="1445" r="5.7"/><circle cx="2400" cy="893" r="5.7"/><circle cx="2304" cy="1456" r="5.7"/><circle cx="2562" cy="1312" r="5.7"/><circle cx="2412" cy="1190" r="5.7"/><circle cx="2443" cy="1502" r="5.7"/><circle cx="2634" cy="1419" r="5.7"/><circle cx="2302" cy="1536" r="5.7"/><circle cx="2439" cy="1555" r="5.7"/><circle cx="2603" cy="1270" r="5.7"/><circle cx="2599" cy="1326" r="5.7"/><circle cx="2427" cy="1333" r="5.7"/><circle cx="2478" cy="1332" r="5.7"/><circle cx="2477" cy="1073" r="5.7"/><circle cx="2495" cy="1119" r="5.7"/><circle cx="2444" cy="976" r="5.7"/><circle cx="2476" cy="880" r="5.7"/><circle cx="2476" cy="1476" r="5.7"/><circle cx="2487" cy="1167" r="5.7"/><circle cx="2489" cy="1240" r="5.7"/><circle cx="2466" cy="1276" r="5.7"/><circle cx="2370" cy="1465" r="5.7"/><circle cx="2468" cy="751" r="5.7"/><circle cx="2503" cy="818" r="5.7"/><circle cx="2529" cy="1452" r="5.7"/><circle cx="2648" cy="1282" r="5.7"/><circle cx="2450" cy="864" r="5.7"/><circle cx="2498" cy="1000" r="5.7"/><circle cx="2517" cy="1434" r="5.7"/><circle cx="2744" cy="1434" r="5.7"/><circle cx="2602" cy="1240" r="5.7"/><circle cx="2481" cy="1408" r="5.7"/><circle cx="2570" cy="1502" r="5.7"/><circle cx="2535" cy="1403" r="5.7"/><circle cx="2494" cy="1469" r="5.7"/><circle cx="2503" cy="912" r="5.7"/><circle cx="2416" cy="925" r="5.7"/><circle cx="2494" cy="1120" r="5.7"/><circle cx="2448" cy="872" r="5.7"/><circle cx="2514" cy="795" r="5.7"/><circle cx="2388" cy="715" r="5.7"/><circle cx="2485" cy="1150" r="5.7"/><circle cx="2426" cy="1043" r="5.7"/><circle cx="2578" cy="1321" r="5.7"/><circle cx="2498" cy="868" r="5.7"/><circle cx="2480" cy="1308" r="5.7"/><circle cx="2408" cy="855" r="5.7"/><circle cx="2571" cy="1467" r="5.7"/><circle cx="2721" cy="1232" r="5.7"/><circle cx="2727" cy="1523" r="5.7"/><circle cx="2459" cy="973" r="5.7"/><circle cx="2543" cy="1407" r="5.7"/><circle cx="2538" cy="1201" r="5.7"/><circle cx="2609" cy="1268" r="5.7"/><circle cx="2512" cy="900" r="5.7"/><circle cx="2422" cy="1464" r="5.7"/><circle cx="2535" cy="1451" r="5.7"/><circle cx="2523" cy="1071" r="5.7"/><circle cx="2643" cy="1549" r="5.7"/><circle cx="2481" cy="1093" r="5.7"/><circle cx="2559" cy="1349" r="5.7"/><circle cx="2598" cy="1312" r="5.7"/><circle cx="2500" cy="1576" r="5.7"/><circle cx="2648" cy="1496" r="5.7"/><circle cx="2424" cy="1357" r="5.7"/><circle cx="2460" cy="886" r="5.7"/><circle cx="2408" cy="1366" r="5.7"/><circle cx="2408" cy="1034" r="5.7"/><circle cx="2452" cy="1416" r="5.7"/><circle cx="2503" cy="1404" r="5.7"/><circle cx="2455" cy="1572" r="5.7"/><circle cx="2592" cy="1482" r="5.7"/><circle cx="2637" cy="1556" r="5.7"/><circle cx="2667" cy="1534" r="5.7"/><circle cx="2530" cy="925" r="5.7"/><circle cx="2297" cy="1370" r="5.7"/><circle cx="2314" cy="1524" r="5.7"/><circle cx="2354" cy="1166" r="5.7"/><circle cx="2359" cy="1511" r="5.7"/><circle cx="2424" cy="1161" r="5.7"/><circle cx="2628" cy="1442" r="5.7"/><circle cx="2349" cy="1557" r="5.7"/><circle cx="2521" cy="961" r="5.7"/><circle cx="2519" cy="1248" r="5.7"/><circle cx="2472" cy="1529" r="5.7"/><circle cx="2494" cy="1568" r="5.7"/><circle cx="2459" cy="1390" r="5.7"/><circle cx="2550" cy="1082" r="5.7"/><circle cx="2344" cy="1514" r="5.7"/><circle cx="2511" cy="1523" r="5.7"/><circle cx="2599" cy="1326" r="5.7"/><circle cx="2642" cy="1555" r="5.7"/><circle cx="2536" cy="1243" r="5.7"/><circle cx="2590" cy="1164" r="5.7"/><circle cx="2278" cy="1228" r="5.7"/><circle cx="2521" cy="1333" r="5.7"/><circle cx="2515" cy="1424" r="5.7"/><circle cx="2314" cy="983" r="5.7"/><circle cx="2743" cy="1481" r="5.7"/><circle cx="2448" cy="1332" r="5.7"/><circle cx="2565" cy="1028" r="5.7"/><circle cx="2575" cy="1125" r="5.7"/><circle cx="2448" cy="792" r="5.7"/><circle cx="2604" cy="1169" r="5.7"/><circle cx="2478" cy="859" r="5.7"/><circle cx="2687" cy="1412" r="5.7"/><circle cx="2490" cy="1468" r="5.7"/><circle cx="2474" cy="760" r="5.7"/><circle cx="2453" cy="1481" r="5.7"/><circle cx="2585" cy="1132" r="5.7"/><circle cx="2341" cy="1195" r="5.7"/><circle cx="2463" cy="1429" r="5.7"/><circle cx="2452" cy="993" r="5.7"/><circle cx="2570" cy="1502" r="5.7"/><circle cx="2492" cy="934" r="5.7"/><circle cx="2593" cy="1378" r="5.7"/><circle cx="2644" cy="1398" r="5.7"/><circle cx="2628" cy="1574" r="5.7"/><circle cx="2553" cy="1569" r="5.7"/><circle cx="2490" cy="1152" r="5.7"/><circle cx="2540" cy="1259" r="5.7"/><circle cx="2508" cy="1168" r="5.7"/><circle cx="2444" cy="905" r="5.7"/><circle cx="2468" cy="1516" r="5.7"/><circle cx="2392" cy="1573" r="5.7"/><circle cx="2532" cy="1334" r="5.7"/><circle cx="2356" cy="1504" r="5.7"/><circle cx="2306" cy="1082" r="5.7"/><circle cx="2396" cy="1357" r="5.7"/><circle cx="2611" cy="1389" r="5.7"/><circle cx="2528" cy="1407" r="5.7"/><circle cx="2316" cy="1540" r="5.7"/><circle cx="2444" cy="1050" r="5.7"/><circle cx="2627" cy="1387" r="5.7"/><circle cx="2515" cy="827" r="5.7"/><circle cx="2442" cy="1472" r="5.7"/><circle cx="2473" cy="1457" r="5.7"/><circle cx="2539" cy="1142" r="5.7"/><circle cx="2517" cy="1093" r="5.7"/><circle cx="2516" cy="1551" r="5.7"/><circle cx="2545" cy="1191" r="5.7"/><circle cx="2557" cy="921" r="5.7"/><circle cx="2477" cy="1290" r="5.7"/><circle cx="2748" cy="1546" r="5.7"/><circle cx="2457" cy="1014" r="5.7"/><circle cx="2486" cy="1296" r="5.7"/><circle cx="2538" cy="1220" r="5.7"/><circle cx="2560" cy="1358" r="5.7"/><circle cx="2532" cy="1365" r="5.7"/><circle cx="2508" cy="1571" r="5.7"/><circle cx="2518" cy="1294" r="5.7"/><circle cx="2614" cy="1480" r="5.7"/><circle cx="2621" cy="1251" r="5.7"/><circle cx="2542" cy="1191" r="5.7"/><circle cx="2471" cy="1315" r="5.7"/><circle cx="2394" cy="1161" r="5.7"/><circle cx="2494" cy="1000" r="5.7"/><circle cx="2485" cy="1388" r="5.7"/><circle cx="2420" cy="864" r="5.7"/><circle cx="2497" cy="1347" r="5.7"/><circle cx="2693" cy="1307" r="5.7"/><circle cx="2568" cy="1470" r="5.7"/><circle cx="2482" cy="1328" r="5.7"/><circle cx="2380" cy="1246" r="5.7"/><circle cx="2220" cy="1565" r="5.7"/><circle cx="2487" cy="1068" r="5.7"/><circle cx="2373" cy="1420" r="5.7"/><circle cx="2568" cy="1224" r="5.7"/><circle cx="2436" cy="1329" r="5.7"/><circle cx="2663" cy="1154" r="5.7"/><circle cx="2518" cy="1462" r="5.7"/><circle cx="2634" cy="1517" r="5.7"/><circle cx="2505" cy="1553" r="5.7"/><circle cx="2440" cy="1114" r="5.7"/><circle cx="2595" cy="1422" r="5.7"/><circle cx="2508" cy="993" r="5.7"/><circle cx="2441" cy="820" r="5.7"/><circle cx="2417" cy="1564" r="5.7"/><circle cx="2537" cy="1109" r="5.7"/><circle cx="2582" cy="1505" r="5.7"/><circle cx="2550" cy="1523" r="5.7"/><circle cx="2478" cy="1510" r="5.7"/><circle cx="2514" cy="1342" r="5.7"/><circle cx="2304" cy="1439" r="5.7"/><circle cx="2466" cy="1194" r="5.7"/><circle cx="2645" cy="1409" r="5.7"/><circle cx="2336" cy="1346" r="5.7"/><circle cx="2487" cy="1460" r="5.7"/><circle cx="2567" cy="1576" r="5.7"/><circle cx="2360" cy="1562" r="5.7"/><circle cx="2373" cy="1106" r="5.7"/><circle cx="2459" cy="1509" r="5.7"/><circle cx="2456" cy="1259" r="5.7"/><circle cx="2582" cy="1347" r="5.7"/><circle cx="2238" cy="1507" r="5.7"/><circle cx="2420" cy="1304" r="5.7"/><circle cx="2636" cy="1446" r="5.7"/><circle cx="2330" cy="1182" r="5.7"/><circle cx="2590" cy="938" r="5.7"/><circle cx="2498" cy="1526" r="5.7"/><circle cx="2605" cy="1029" r="5.7"/><circle cx="2642" cy="1570" r="5.7"/><circle cx="2731" cy="1499" r="5.7"/><circle cx="2338" cy="1532" r="5.7"/><circle cx="2451" cy="949" r="5.7"/><circle cx="2400" cy="1574" r="5.7"/><circle cx="2550" cy="1430" r="5.7"/><circle cx="2554" cy="1254" r="5.7"/><circle cx="2473" cy="1490" r="5.7"/><circle cx="2461" cy="965" r="5.7"/><circle cx="2547" cy="1137" r="5.7"/><circle cx="2577" cy="1415" r="5.7"/><circle cx="2568" cy="1150" r="5.7"/><circle cx="2443" cy="1135" r="5.7"/><circle cx="2488" cy="1102" r="5.7"/><circle cx="2596" cy="1498" r="5.7"/><circle cx="2392" cy="1471" r="5.7"/><circle cx="2596" cy="1368" r="5.7"/><circle cx="2426" cy="1250" r="5.7"/><circle cx="2456" cy="916" r="5.7"/><circle cx="2654" cy="1307" r="5.7"/><circle cx="2580" cy="1446" r="5.7"/><circle cx="2436" cy="1395" r="5.7"/><circle cx="2399" cy="828" r="5.7"/><circle cx="2541" cy="1202" r="5.7"/><circle cx="2476" cy="1199" r="5.7"/><circle cx="2402" cy="1407" r="5.7"/><circle cx="2670" cy="1474" r="5.7"/><circle cx="2505" cy="1226" r="5.7"/><circle cx="2411" cy="1286" r="5.7"/><circle cx="2411" cy="948" r="5.7"/><circle cx="2428" cy="711" r="5.7"/><circle cx="2589" cy="1286" r="5.7"/><circle cx="2446" cy="942" r="5.7"/><circle cx="2482" cy="1455" r="5.7"/><circle cx="2583" cy="1540" r="5.7"/><circle cx="2503" cy="1224" r="5.7"/><circle cx="2486" cy="1093" r="5.7"/><circle cx="2515" cy="1098" r="5.7"/><circle cx="2547" cy="1513" r="5.7"/><circle cx="2623" cy="1224" r="5.7"/><circle cx="2526" cy="1251" r="5.7"/><circle cx="2566" cy="1524" r="5.7"/><circle cx="2414" cy="1534" r="5.7"/><circle cx="2511" cy="1252" r="5.7"/><circle cx="2421" cy="817" r="5.7"/><circle cx="2558" cy="1458" r="5.7"/><circle cx="2515" cy="1144" r="5.7"/><circle cx="2387" cy="820" r="5.7"/><circle cx="2592" cy="1504" r="5.7"/><circle cx="2420" cy="1092" r="5.7"/><circle cx="2533" cy="966" r="5.7"/><circle cx="2370" cy="941" r="5.7"/><circle cx="2690" cy="1301" r="5.7"/><circle cx="2454" cy="1502" r="5.7"/><circle cx="2580" cy="1569" r="5.7"/><circle cx="2531" cy="1567" r="5.7"/><circle cx="2524" cy="1011" r="5.7"/><circle cx="2642" cy="1568" r="5.7"/><circle cx="2675" cy="1536" r="5.7"/><circle cx="2559" cy="1522" r="5.7"/><circle cx="2460" cy="1145" r="5.7"/><circle cx="2474" cy="1567" r="5.7"/><circle cx="2518" cy="924" r="5.7"/><circle cx="2475" cy="1372" r="5.7"/><circle cx="2577" cy="1546" r="5.7"/><circle cx="2521" cy="1554" r="5.7"/><circle cx="2427" cy="1555" r="5.7"/><circle cx="2649" cy="1532" r="5.7"/><circle cx="2458" cy="956" r="5.7"/><circle cx="2539" cy="950" r="5.7"/><circle cx="2366" cy="1526" r="5.7"/><circle cx="2458" cy="1499" r="5.7"/><circle cx="2675" cy="1412" r="5.7"/><circle cx="2509" cy="1176" r="5.7"/><circle cx="2722" cy="1131" r="5.7"/><circle cx="2539" cy="1346" r="5.7"/><circle cx="2452" cy="1482" r="5.7"/><circle cx="2593" cy="1162" r="5.7"/><circle cx="2512" cy="1483" r="5.7"/><circle cx="2460" cy="1493" r="5.7"/><circle cx="2566" cy="1434" r="5.7"/><circle cx="2426" cy="1278" r="5.7"/><circle cx="2431" cy="1180" r="5.7"/><circle cx="2390" cy="940" r="5.7"/><circle cx="2591" cy="1287" r="5.7"/><circle cx="2426" cy="857" r="5.7"/><circle cx="2639" cy="1154" r="5.7"/><circle cx="2591" cy="1574" r="5.7"/><circle cx="2551" cy="931" r="5.7"/><circle cx="2407" cy="1437" r="5.7"/><circle cx="2597" cy="1553" r="5.7"/><circle cx="2479" cy="845" r="5.7"/><circle cx="2574" cy="1467" r="5.7"/><circle cx="2601" cy="1350" r="5.7"/><circle cx="2557" cy="1150" r="5.7"/><circle cx="2500" cy="1040" r="5.7"/><circle cx="2442" cy="945" r="5.7"/><circle cx="2478" cy="1543" r="5.7"/><circle cx="2545" cy="1420" r="5.7"/><circle cx="2516" cy="1036" r="5.7"/><circle cx="2620" cy="1299" r="5.7"/><circle cx="2456" cy="1001" r="5.7"/><circle cx="2571" cy="1379" r="5.7"/><circle cx="2445" cy="1432" r="5.7"/><circle cx="2613" cy="1354" r="5.7"/><circle cx="2491" cy="1347" r="5.7"/><circle cx="2288" cy="1541" r="5.7"/><circle cx="2451" cy="1041" r="5.7"/><circle cx="2289" cy="1504" r="5.7"/><circle cx="2605" cy="1439" r="5.7"/><circle cx="2434" cy="1530" r="5.7"/><circle cx="2431" cy="1389" r="5.7"/><circle cx="2435" cy="1411" r="5.7"/><circle cx="2580" cy="1082" r="5.7"/><circle cx="2514" cy="1442" r="5.7"/><circle cx="2422" cy="1532" r="5.7"/><circle cx="2522" cy="1120" r="5.7"/><circle cx="2471" cy="1017" r="5.7"/><circle cx="2238" cy="1455" r="5.7"/><circle cx="2610" cy="1374" r="5.7"/><circle cx="2418" cy="720" r="5.7"/><circle cx="2511" cy="1175" r="5.7"/><circle cx="2454" cy="1137" r="5.7"/><circle cx="2404" cy="1258" r="5.7"/><circle cx="2500" cy="838" r="5.7"/><circle cx="2527" cy="1404" r="5.7"/><circle cx="2449" cy="952" r="5.7"/><circle cx="2567" cy="1231" r="5.7"/><circle cx="2611" cy="1413" r="5.7"/><circle cx="2341" cy="1572" r="5.7"/><circle cx="2532" cy="861" r="5.7"/><circle cx="2514" cy="1420" r="5.7"/><circle cx="2588" cy="1122" r="5.7"/><circle cx="2539" cy="1004" r="5.7"/><circle cx="2617" cy="1068" r="5.7"/><circle cx="2498" cy="1110" r="5.7"/><circle cx="2305" cy="1297" r="5.7"/><circle cx="2641" cy="1283" r="5.7"/><circle cx="2597" cy="1307" r="5.7"/><circle cx="2316" cy="1558" r="5.7"/><circle cx="2572" cy="1260" r="5.7"/><circle cx="2642" cy="1514" r="5.7"/><circle cx="2448" cy="1091" r="5.7"/><circle cx="2535" cy="1571" r="5.7"/><circle cx="2418" cy="780" r="5.7"/><circle cx="2489" cy="980" r="5.7"/><circle cx="2600" cy="1536" r="5.7"/><circle cx="2691" cy="1484" r="5.7"/><circle cx="2554" cy="1500" r="5.7"/><circle cx="2637" cy="1050" r="5.7"/><circle cx="2412" cy="1240" r="5.7"/><circle cx="2375" cy="1212" r="5.7"/><circle cx="2435" cy="802" r="5.7"/><circle cx="2639" cy="1437" r="5.7"/><circle cx="2624" cy="1242" r="5.7"/><circle cx="2511" cy="1487" r="5.7"/><circle cx="2660" cy="1451" r="5.7"/><circle cx="2527" cy="1336" r="5.7"/><circle cx="2530" cy="1475" r="5.7"/><circle cx="2425" cy="908" r="5.7"/><circle cx="2495" cy="1363" r="5.7"/><circle cx="2440" cy="1222" r="5.7"/><circle cx="2340" cy="1095" r="5.7"/><circle cx="2401" cy="1102" r="5.7"/><circle cx="2486" cy="1261" r="5.7"/><circle cx="2300" cy="1566" r="5.7"/><circle cx="2581" cy="1210" r="5.7"/><circle cx="2495" cy="1474" r="5.7"/><circle cx="2523" cy="1418" r="5.7"/><circle cx="2335" cy="1416" r="5.7"/><circle cx="2567" cy="1452" r="5.7"/><circle cx="2678" cy="1464" r="5.7"/><circle cx="2483" cy="1533" r="5.7"/><circle cx="2681" cy="1389" r="5.7"/><circle cx="2414" cy="1179" r="5.7"/><circle cx="2435" cy="971" r="5.7"/><circle cx="2533" cy="1289" r="5.7"/><circle cx="2612" cy="1442" r="5.7"/><circle cx="2526" cy="1432" r="5.7"/><circle cx="2446" cy="1150" r="5.7"/><circle cx="2597" cy="1536" r="5.7"/><circle cx="2547" cy="979" r="5.7"/><circle cx="2648" cy="1525" r="5.7"/><circle cx="2379" cy="1204" r="5.7"/><circle cx="2505" cy="1414" r="5.7"/><circle cx="2537" cy="1140" r="5.7"/><circle cx="2396" cy="1085" r="5.7"/><circle cx="2580" cy="1221" r="5.7"/><circle cx="2490" cy="1024" r="5.7"/><circle cx="2464" cy="1006" r="5.7"/><circle cx="2602" cy="1472" r="5.7"/><circle cx="2575" cy="1350" r="5.7"/><circle cx="2602" cy="1516" r="5.7"/><circle cx="2611" cy="1556" r="5.7"/><circle cx="2344" cy="1468" r="5.7"/><circle cx="2554" cy="1486" r="5.7"/><circle cx="2511" cy="1316" r="5.7"/><circle cx="2399" cy="1301" r="5.7"/><circle cx="2533" cy="1541" r="5.7"/><circle cx="2304" cy="958" r="5.7"/><circle cx="2502" cy="1157" r="5.7"/><circle cx="2511" cy="1564" r="5.7"/><circle cx="2471" cy="1562" r="5.7"/><circle cx="2373" cy="1409" r="5.7"/><circle cx="2402" cy="1424" r="5.7"/><circle cx="2546" cy="1364" r="5.7"/><circle cx="2422" cy="1250" r="5.7"/><circle cx="2486" cy="1006" r="5.7"/><circle cx="2542" cy="1430" r="5.7"/><circle cx="2593" cy="1092" r="5.7"/><circle cx="2452" cy="1428" r="5.7"/><circle cx="2552" cy="1265" r="5.7"/><circle cx="2531" cy="1381" r="5.7"/><circle cx="2613" cy="1344" r="5.7"/><circle cx="2377" cy="1030" r="5.7"/><circle cx="2558" cy="1457" r="5.7"/><circle cx="2375" cy="1410" r="5.7"/><circle cx="2505" cy="1277" r="5.7"/><circle cx="2617" cy="1431" r="5.7"/><circle cx="2542" cy="1118" r="5.7"/><circle cx="2358" cy="1367" r="5.7"/><circle cx="2363" cy="1447" r="5.7"/><circle cx="2399" cy="790" r="5.7"/><circle cx="2428" cy="996" r="5.7"/><circle cx="2443" cy="731" r="5.7"/><circle cx="2592" cy="1407" r="5.7"/><circle cx="2596" cy="1110" r="5.7"/><circle cx="2500" cy="1488" r="5.7"/><circle cx="2348" cy="1438" r="5.7"/><circle cx="2485" cy="1430" r="5.7"/><circle cx="2327" cy="1223" r="5.7"/><circle cx="2603" cy="1395" r="5.7"/><circle cx="2553" cy="1075" r="5.7"/><circle cx="2554" cy="1517" r="5.7"/><circle cx="2628" cy="1546" r="5.7"/><circle cx="2685" cy="1412" r="5.7"/><circle cx="2478" cy="1572" r="5.7"/><circle cx="2462" cy="1210" r="5.7"/><circle cx="2580" cy="1253" r="5.7"/><circle cx="2477" cy="1160" r="5.7"/><circle cx="2561" cy="1480" r="5.7"/><circle cx="2567" cy="1116" r="5.7"/><circle cx="2541" cy="1462" r="5.7"/><circle cx="2665" cy="1522" r="5.7"/><circle cx="2601" cy="1062" r="5.7"/><circle cx="2538" cy="1057" r="5.7"/><circle cx="2630" cy="1467" r="5.7"/><circle cx="2540" cy="1389" r="5.7"/><circle cx="2668" cy="1513" r="5.7"/><circle cx="2554" cy="1229" r="5.7"/><circle cx="2346" cy="1304" r="5.7"/><circle cx="2264" cy="1305" r="5.7"/><circle cx="2515" cy="1170" r="5.7"/><circle cx="2506" cy="1179" r="5.7"/><circle cx="2740" cy="1353" r="5.7"/><circle cx="2611" cy="1549" r="5.7"/><circle cx="2492" cy="1268" r="5.7"/><circle cx="2575" cy="1185" r="5.7"/><circle cx="2474" cy="1276" r="5.7"/><circle cx="2639" cy="1397" r="5.7"/><circle cx="2585" cy="1448" r="5.7"/><circle cx="2622" cy="1414" r="5.7"/><circle cx="2413" cy="1523" r="5.7"/><circle cx="2528" cy="1461" r="5.7"/><circle cx="2348" cy="1450" r="5.7"/><circle cx="2550" cy="1015" r="5.7"/><circle cx="2571" cy="1319" r="5.7"/><circle cx="2587" cy="1399" r="5.7"/><circle cx="2450" cy="733" r="5.7"/><circle cx="2496" cy="1338" r="5.7"/><circle cx="2392" cy="1505" r="5.7"/><circle cx="2520" cy="1118" r="5.7"/><circle cx="2613" cy="1295" r="5.7"/><circle cx="2645" cy="1578" r="5.7"/><circle cx="2596" cy="1377" r="5.7"/><circle cx="2513" cy="1234" r="5.7"/><circle cx="2350" cy="879" r="5.7"/><circle cx="2598" cy="1351" r="5.7"/><circle cx="2603" cy="1471" r="5.7"/><circle cx="2478" cy="962" r="5.7"/><circle cx="2338" cy="1378" r="5.7"/><circle cx="2447" cy="1283" r="5.7"/><circle cx="2519" cy="1444" r="5.7"/><circle cx="2440" cy="1352" r="5.7"/><circle cx="2460" cy="1268" r="5.7"/><circle cx="2551" cy="1373" r="5.7"/><circle cx="2609" cy="1231" r="5.7"/><circle cx="2438" cy="824" r="5.7"/><circle cx="2317" cy="1381" r="5.7"/><circle cx="2442" cy="1450" r="5.7"/><circle cx="2438" cy="942" r="5.7"/><circle cx="2518" cy="1016" r="5.7"/><circle cx="2547" cy="983" r="5.7"/><circle cx="2543" cy="1478" r="5.7"/><circle cx="2558" cy="1216" r="5.7"/><circle cx="2520" cy="1310" r="5.7"/><circle cx="2452" cy="949" r="5.7"/><circle cx="2588" cy="1503" r="5.7"/><circle cx="2452" cy="980" r="5.7"/><circle cx="2451" cy="1121" r="5.7"/><circle cx="2592" cy="1429" r="5.7"/><circle cx="2502" cy="938" r="5.7"/><circle cx="2503" cy="1093" r="5.7"/><circle cx="2522" cy="1548" r="5.7"/><circle cx="2533" cy="1232" r="5.7"/><circle cx="2360" cy="1575" r="5.7"/><circle cx="2697" cy="1518" r="5.7"/><circle cx="2461" cy="1056" r="5.7"/><circle cx="2449" cy="959" r="5.7"/><circle cx="2439" cy="1157" r="5.7"/><circle cx="2420" cy="986" r="5.7"/><circle cx="2642" cy="1390" r="5.7"/><circle cx="2654" cy="1292" r="5.7"/><circle cx="2458" cy="714" r="5.7"/><circle cx="2513" cy="1108" r="5.7"/><circle cx="2451" cy="1422" r="5.7"/><circle cx="2645" cy="1564" r="5.7"/><circle cx="2514" cy="1280" r="5.7"/><circle cx="2345" cy="1212" r="5.7"/><circle cx="2570" cy="1442" r="5.7"/><circle cx="2432" cy="977" r="5.7"/><circle cx="2472" cy="1427" r="5.7"/><circle cx="2207" cy="1526" r="5.7"/><circle cx="2665" cy="1426" r="5.7"/><circle cx="2490" cy="1466" r="5.7"/><circle cx="2436" cy="1356" r="5.7"/><circle cx="2615" cy="1567" r="5.7"/><circle cx="2541" cy="1318" r="5.7"/><circle cx="2173" cy="1438" r="5.7"/><circle cx="2565" cy="1141" r="5.7"/><circle cx="2435" cy="1323" r="5.7"/><circle cx="2581" cy="1270" r="5.7"/><circle cx="2482" cy="1049" r="5.7"/><circle cx="2554" cy="1297" r="5.7"/><circle cx="2568" cy="921" r="5.7"/><circle cx="2519" cy="1408" r="5.7"/><circle cx="2624" cy="1437" r="5.7"/><circle cx="2536" cy="1306" r="5.7"/><circle cx="2478" cy="1276" r="5.7"/><circle cx="2411" cy="876" r="5.7"/><circle cx="2523" cy="1352" r="5.7"/><circle cx="2570" cy="1037" r="5.7"/><circle cx="2578" cy="1464" r="5.7"/><circle cx="2517" cy="1354" r="5.7"/><circle cx="2522" cy="1129" r="5.7"/><circle cx="2537" cy="1163" r="5.7"/><circle cx="2724" cy="1552" r="5.7"/><circle cx="2498" cy="1569" r="5.7"/><circle cx="2474" cy="1486" r="5.7"/><circle cx="2592" cy="1487" r="5.7"/><circle cx="2546" cy="1044" r="5.7"/><circle cx="2566" cy="1003" r="5.7"/><circle cx="2600" cy="1391" r="5.7"/><circle cx="2551" cy="1209" r="5.7"/><circle cx="2551" cy="1514" r="5.7"/><circle cx="2577" cy="1195" r="5.7"/><circle cx="2614" cy="1332" r="5.7"/><circle cx="2560" cy="1396" r="5.7"/><circle cx="2554" cy="1336" r="5.7"/><circle cx="2648" cy="1494" r="5.7"/><circle cx="2477" cy="860" r="5.7"/><circle cx="2522" cy="1051" r="5.7"/><circle cx="2341" cy="1307" r="5.7"/><circle cx="2398" cy="1135" r="5.7"/><circle cx="2557" cy="1153" r="5.7"/><circle cx="2504" cy="836" r="5.7"/><circle cx="2511" cy="928" r="5.7"/><circle cx="2566" cy="1547" r="5.7"/><circle cx="2679" cy="988" r="5.7"/><circle cx="2450" cy="1393" r="5.7"/><circle cx="2575" cy="1310" r="5.7"/><circle cx="2454" cy="1491" r="5.7"/><circle cx="2446" cy="828" r="5.7"/><circle cx="2437" cy="1015" r="5.7"/><circle cx="2441" cy="1428" r="5.7"/><circle cx="2418" cy="1125" r="5.7"/><circle cx="2468" cy="964" r="5.7"/><circle cx="2584" cy="1312" r="5.7"/><circle cx="2535" cy="1345" r="5.7"/><circle cx="2726" cy="1567" r="5.7"/><circle cx="2566" cy="1213" r="5.7"/><circle cx="2620" cy="1143" r="5.7"/><circle cx="2432" cy="1344" r="5.7"/><circle cx="2624" cy="1571" r="5.7"/><circle cx="2378" cy="1442" r="5.7"/><circle cx="2490" cy="883" r="5.7"/><circle cx="2405" cy="1442" r="5.7"/><circle cx="2436" cy="1177" r="5.7"/><circle cx="2442" cy="1566" r="5.7"/><circle cx="2316" cy="1135" r="5.7"/><circle cx="2520" cy="1272" r="5.7"/><circle cx="2558" cy="1309" r="5.7"/><circle cx="2728" cy="1577" r="5.7"/><circle cx="2364" cy="878" r="5.7"/><circle cx="2513" cy="1058" r="5.7"/><circle cx="2403" cy="1343" r="5.7"/><circle cx="2559" cy="1540" r="5.7"/><circle cx="2534" cy="1569" r="5.7"/><circle cx="2425" cy="1115" r="5.7"/><circle cx="2606" cy="1401" r="5.7"/><circle cx="2510" cy="1560" r="5.7"/><circle cx="2459" cy="1462" r="5.7"/><circle cx="2695" cy="1457" r="5.7"/><circle cx="2625" cy="1293" r="5.7"/><circle cx="2640" cy="1462" r="5.7"/><circle cx="2318" cy="1550" r="5.7"/><circle cx="2369" cy="1383" r="5.7"/><circle cx="2331" cy="1323" r="5.7"/><circle cx="2411" cy="1234" r="5.7"/><circle cx="2509" cy="1020" r="5.7"/><circle cx="2521" cy="1306" r="5.7"/><circle cx="2614" cy="1465" r="5.7"/><circle cx="2532" cy="753" r="5.7"/><circle cx="2518" cy="1475" r="5.7"/><circle cx="2550" cy="1541" r="5.7"/><circle cx="2465" cy="1028" r="5.7"/><circle cx="2491" cy="1272" r="5.7"/><circle cx="2426" cy="1528" r="5.7"/><circle cx="2568" cy="1551" r="5.7"/><circle cx="2482" cy="1502" r="5.7"/><circle cx="2579" cy="1141" r="5.7"/><circle cx="2429" cy="712" r="5.7"/><circle cx="2602" cy="1493" r="5.7"/><circle cx="2389" cy="1486" r="5.7"/><circle cx="2520" cy="1173" r="5.7"/><circle cx="2377" cy="1346" r="5.7"/><circle cx="2580" cy="1531" r="5.7"/><circle cx="2434" cy="1295" r="5.7"/><circle cx="2352" cy="1560" r="5.7"/><circle cx="2495" cy="769" r="5.7"/><circle cx="2748" cy="1559" r="5.7"/><circle cx="2296" cy="1527" r="5.7"/><circle cx="2590" cy="1519" r="5.7"/><circle cx="2512" cy="1290" r="5.7"/><circle cx="2438" cy="1376" r="5.7"/><circle cx="2548" cy="1485" r="5.7"/><circle cx="2444" cy="1340" r="5.7"/><circle cx="2466" cy="1147" r="5.7"/><circle cx="2506" cy="1112" r="5.7"/><circle cx="2647" cy="1559" r="5.7"/><circle cx="2713" cy="1312" r="5.7"/><circle cx="2574" cy="1386" r="5.7"/><circle cx="2534" cy="1319" r="5.7"/><circle cx="2502" cy="732" r="5.7"/><circle cx="2579" cy="1257" r="5.7"/><circle cx="2526" cy="972" r="5.7"/><circle cx="2502" cy="1409" r="5.7"/><circle cx="2425" cy="1479" r="5.7"/><circle cx="2561" cy="1328" r="5.7"/><circle cx="2534" cy="1529" r="5.7"/><circle cx="2561" cy="1446" r="5.7"/><circle cx="2446" cy="1184" r="5.7"/><circle cx="2597" cy="1514" r="5.7"/><circle cx="2463" cy="1444" r="5.7"/><circle cx="2529" cy="1506" r="5.7"/><circle cx="2597" cy="1292" r="5.7"/><circle cx="2510" cy="1032" r="5.7"/><circle cx="2493" cy="1256" r="5.7"/><circle cx="2533" cy="1436" r="5.7"/></g><circle cx="2498.6" cy="1169.1" r="7.5" fill="#f2a638"/><g stroke="#3a3a3a" stroke-width="2.2" fill="none"><path d="M1790 346 V1651.5 H3112.5"/><line x1="1778" y1="464.0" x2="1790" y2="464.0"/><line x1="1778" y1="696.0" x2="1790" y2="696.0"/><line x1="1778" y1="928.0" x2="1790" y2="928.0"/><line x1="1778" y1="1160.0" x2="1790" y2="1160.0"/><line x1="1778" y1="1392.0" x2="1790" y2="1392.0"/><line x1="1778" y1="1624.0" x2="1790" y2="1624.0"/><line x1="1907.2" y1="1651.5" x2="1907.2" y2="1663"/><line x1="2163.9" y1="1651.5" x2="2163.9" y2="1663"/><line x1="2420.6" y1="1651.5" x2="2420.6" y2="1663"/><line x1="2677.3" y1="1651.5" x2="2677.3" y2="1663"/><line x1="2934.0" y1="1651.5" x2="2934.0" y2="1663"/></g><g class="tick" text-anchor="end"><text x="1772" y="473.0">24</text><text x="1772" y="705.0">24.5</text><text x="1772" y="937.0">25</text><text x="1772" y="1169.0">25.5</text><text x="1772" y="1401.0">26</text><text x="1772" y="1633.0">26.5</text></g><g class="tick" text-anchor="middle"><text x="1907.2" y="1692">−2</text><text x="2163.9" y="1692">−1</text><text x="2420.6" y="1692">0</text><text x="2677.3" y="1692">1</text><text x="2934.0" y="1692">2</text></g><text class="ttl" x="2451" y="1745" text-anchor="middle">r-i color (mag)</text><text class="ttl" transform="translate(1720,998) rotate(-90)" text-anchor="middle">g brightness (mag)</text></svg>
</body></html>
